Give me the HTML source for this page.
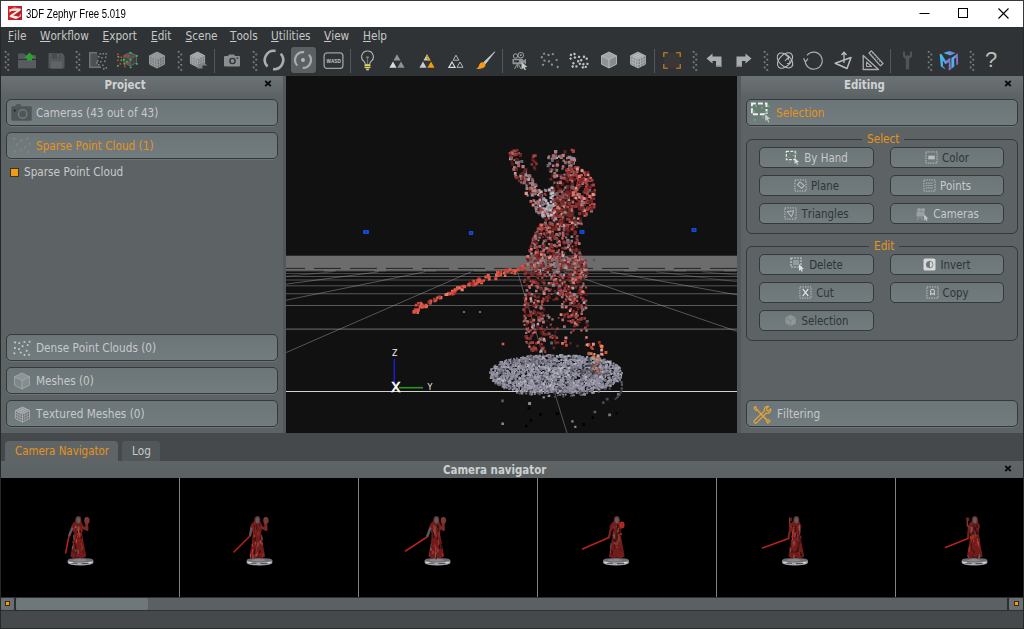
<!DOCTYPE html>
<html><head><meta charset="utf-8"><title>3DF Zephyr Free 5.019</title>
<style>
html,body{margin:0;padding:0;}
body{width:1024px;height:629px;overflow:hidden;position:relative;background:#45494b;
 font-family:"DejaVu Sans Condensed","DejaVu Sans","Liberation Sans",sans-serif;font-size:11.7px;color:#c6cacb;font-kerning:none;}
.abs{position:absolute;}
#title{left:0;top:0;width:1024px;height:27px;background:#fff;}
#title .t{left:26px;top:7px;font-family:"Liberation Sans",sans-serif;font-size:12px;color:#000;white-space:nowrap;transform-origin:0 0;transform:scaleX(0.80);line-height:14px;}
#menubar{left:0;top:27px;width:1024px;height:20px;background:#2f3335;}
#menubar span{position:absolute;top:2px;line-height:14px;color:#c6c8c9;white-space:nowrap;}
#menubar u{text-decoration:underline;text-underline-offset:1px;}
#toolbar{left:0;top:47px;width:1024px;height:29px;background:#2f3335;}
#wborder-l{left:0;top:27px;width:1px;height:602px;background:#26292a;}
.panel{background:#5d6365;}
.phead{left:0;top:0;height:19px;background:linear-gradient(#6b7275,#5f6567);}
.phead b{position:absolute;top:2px;line-height:14px;font-size:11.4px;font-weight:bold;color:#cfd2d3;white-space:nowrap;}
.px{position:absolute;font-family:"DejaVu Sans",sans-serif;font-weight:bold;font-size:10px;color:#0a0a0a;line-height:10px;}
.bigbtn{position:absolute;box-sizing:border-box;height:27px;border:1px solid #34393b;border-radius:5px;background:linear-gradient(#6c7578,#727b7e);box-shadow:0 1px 0 rgba(140,150,153,.35);}
.bigbtn span{position:absolute;left:29px;top:5px;line-height:16px;white-space:nowrap;}
.or{color:#e6931a;}
.smbtn{position:absolute;box-sizing:border-box;height:21px;width:116px;border:1px solid #34393b;border-radius:5px;background:linear-gradient(#6c7578,#727b7e);}
.smbtn span{position:absolute;top:2px;line-height:16px;white-space:nowrap;font-size:11.4px;}
.smbtn.dis span{color:#2f3436;}
.grp{position:absolute;box-sizing:border-box;border:1px solid #34393b;border-radius:6px;}
.grp i{position:absolute;top:-9px;font-style:normal;color:#e6931a;background:#5d6365;padding:0 5px;line-height:16px;}
</style></head><body>
<div id="title" class="abs"><svg class="abs" style="left:7.800px;top:5.900px" width="14" height="14" viewBox="0 0 14 14"><defs><linearGradient id="zi" x1="0" y1="0" x2="1" y2="0.3"><stop offset="0" stop-color="#d8201c"/><stop offset="1" stop-color="#ad2329"/></linearGradient></defs><rect width="14" height="14" fill="url(#zi)"/><path d="M1.3 3.700L6.2 1.200L12.9 2.800L7.6 5.200z" fill="#f3c9c9" opacity="0.750"/><path d="M1.4 3.300L12.8 2.700L12.8 4.300L5.2 9.600L11.2 10.700L12.5 7.400L12.7 10.600L8 13L1.8 11L1.7 9.500L9.4 4.600L3.2 5L1.5 6.600z" fill="#f6eaea"/></svg><div class="abs t">3DF Zephyr Free 5.019</div><svg class="abs" style="left:900px;top:0" width="124" height="27" viewBox="0 0 124 27"><path d="M19.5 13.5h10" stroke="#000" stroke-width="1" fill="none"/><rect x="58.5" y="8.5" width="9" height="9" stroke="#000" stroke-width="1" fill="none"/><path d="M98.5 8.5l10 10M108.5 8.5l-10 10" stroke="#000" stroke-width="1.1" fill="none"/></svg></div>
<div id="menubar" class="abs"><span style="left:8px"><u>F</u>ile</span><span style="left:40px"><u>W</u>orkflow</span><span style="left:102.5px"><u>E</u>xport</span><span style="left:151px"><u>E</u>dit</span><span style="left:185.5px"><u>S</u>cene</span><span style="left:230px"><u>T</u>ools</span><span style="left:271px"><u>U</u>tilities</span><span style="left:324px"><u>V</u>iew</span><span style="left:363px"><u>H</u>elp</span></div>
<div id="toolbar" class="abs"><svg class="abs" style="left:4px;top:3px" width="6" height="24" viewBox="0 0 6 24"><rect x="0.8" y="1.0" width="1.7" height="1.7" fill="#85898a"/><rect x="1.8" y="2.0" width="1.1" height="1.1" fill="#4a4e50"/><rect x="3.4" y="3.6" width="1.7" height="1.7" fill="#85898a"/><rect x="4.4" y="4.6" width="1.1" height="1.1" fill="#4a4e50"/><rect x="0.8" y="6.2" width="1.7" height="1.7" fill="#85898a"/><rect x="1.8" y="7.2" width="1.1" height="1.1" fill="#4a4e50"/><rect x="3.4" y="8.8" width="1.7" height="1.7" fill="#85898a"/><rect x="4.4" y="9.8" width="1.1" height="1.1" fill="#4a4e50"/><rect x="0.8" y="11.4" width="1.7" height="1.7" fill="#85898a"/><rect x="1.8" y="12.4" width="1.1" height="1.1" fill="#4a4e50"/><rect x="3.4" y="14.0" width="1.7" height="1.7" fill="#85898a"/><rect x="4.4" y="15.0" width="1.1" height="1.1" fill="#4a4e50"/><rect x="0.8" y="16.6" width="1.7" height="1.7" fill="#85898a"/><rect x="1.8" y="17.6" width="1.1" height="1.1" fill="#4a4e50"/><rect x="3.4" y="19.2" width="1.7" height="1.7" fill="#85898a"/><rect x="4.4" y="20.2" width="1.1" height="1.1" fill="#4a4e50"/></svg><svg class="abs" style="left:17px;top:4px" width="20" height="19" viewBox="0 0 20 19"><path d="M1 3.500a1 1 0 0 1 1-1h5l1.5 1.500H18a1 1 0 0 1 1 1V8H1z" fill="#54585a"/><path d="M1 9h18v7.500a1 1 0 0 1-1 1H2a1 1 0 0 1-1-1z" fill="#585c5e"/><path d="M12.5 1.500L18 7h-3v2.500h-5V7H7z" fill="#2f9e35"/><path d="M1 17.500h18" stroke="#3d4042" stroke-width="1"/></svg><svg class="abs" style="left:47px;top:5px" width="19" height="18" viewBox="0 0 19 18"><path d="M1.5 2a1 1 0 0 1 1-1h12.500l2.5 2.500v12a1 1 0 0 1-1 1h-14a1 1 0 0 1-1-1z" fill="#54585a"/><rect x="5" y="1" width="8" height="5.5" fill="#474b4d"/><rect x="10" y="2" width="1.8" height="3.5" fill="#5f6365"/><rect x="4" y="9.5" width="11" height="7" fill="#606466"/></svg><svg class="abs" style="left:75px;top:3px" width="6" height="24" viewBox="0 0 6 24"><rect x="0.8" y="1.0" width="1.7" height="1.7" fill="#85898a"/><rect x="1.8" y="2.0" width="1.1" height="1.1" fill="#4a4e50"/><rect x="3.4" y="3.6" width="1.7" height="1.7" fill="#85898a"/><rect x="4.4" y="4.6" width="1.1" height="1.1" fill="#4a4e50"/><rect x="0.8" y="6.2" width="1.7" height="1.7" fill="#85898a"/><rect x="1.8" y="7.2" width="1.1" height="1.1" fill="#4a4e50"/><rect x="3.4" y="8.8" width="1.7" height="1.7" fill="#85898a"/><rect x="4.4" y="9.8" width="1.1" height="1.1" fill="#4a4e50"/><rect x="0.8" y="11.4" width="1.7" height="1.7" fill="#85898a"/><rect x="1.8" y="12.4" width="1.1" height="1.1" fill="#4a4e50"/><rect x="3.4" y="14.0" width="1.7" height="1.7" fill="#85898a"/><rect x="4.4" y="15.0" width="1.1" height="1.1" fill="#4a4e50"/><rect x="0.8" y="16.6" width="1.7" height="1.7" fill="#85898a"/><rect x="1.8" y="17.6" width="1.1" height="1.1" fill="#4a4e50"/><rect x="3.4" y="19.2" width="1.7" height="1.7" fill="#85898a"/><rect x="4.4" y="20.2" width="1.1" height="1.1" fill="#4a4e50"/></svg><svg class="abs" style="left:88px;top:4px" width="20" height="20" viewBox="0 0 20 20"><path d="M1 1h8v1.800H2.800v12.400H13v1.800H1z" fill="#6f7375"/><rect x="2.8" y="2.8" width="7" height="12.4" fill="#4c5052"/><rect x="11.5" y="2" width="1.6" height="1.6" fill="#7d8183"/><rect x="14.5" y="2" width="1.6" height="1.6" fill="#7d8183"/><rect x="17.5" y="2" width="1.6" height="1.6" fill="#7d8183"/><rect x="10" y="5" width="1.6" height="1.6" fill="#7d8183"/><rect x="13" y="6" width="1.6" height="1.6" fill="#7d8183"/><rect x="17" y="5.5" width="1.6" height="1.6" fill="#7d8183"/><rect x="9" y="9" width="1.6" height="1.6" fill="#7d8183"/><rect x="12" y="10" width="1.6" height="1.6" fill="#7d8183"/><rect x="16" y="9.5" width="1.6" height="1.6" fill="#7d8183"/><rect x="10" y="13" width="1.6" height="1.6" fill="#7d8183"/><rect x="14" y="13.5" width="1.6" height="1.6" fill="#7d8183"/><rect x="17.5" y="16" width="1.6" height="1.6" fill="#7d8183"/><rect x="15" y="17" width="1.6" height="1.6" fill="#7d8183"/><rect x="8" y="11" width="1.6" height="1.6" fill="#7d8183"/></svg><svg class="abs" style="left:116px;top:4px" width="23" height="19" viewBox="0 0 23 19"><g transform="translate(6.5,0.5) scale(0.850)"><path d="M9 1L16.5 4.800L9 8.600L1.5 4.800Z" fill="#4e5254"/><path d="M1.5 4.800L9 8.600V17L1.5 13.200Z" fill="#45494b"/><path d="M16.5 4.800L9 8.600V17L16.5 13.200Z" fill="#3e4244"/><path d="M9 1L16.5 4.800V13.200L9 17L1.5 13.200V4.800ZM1.5 4.800L9 8.600L16.5 4.800M9 8.600V17" fill="none" stroke="#6e7274" stroke-width="0.9"/></g><rect x="1" y="2.5" width="1.7" height="1.7" fill="#e23b30"/><rect x="1.5" y="5" width="1.7" height="1.7" fill="#34c24a"/><rect x="4.5" y="5.5" width="1.7" height="1.7" fill="#e23b30"/><rect x="1" y="8.5" width="1.7" height="1.7" fill="#e23b30"/><rect x="4.5" y="8.5" width="1.7" height="1.7" fill="#34c24a"/><rect x="3.5" y="12" width="1.7" height="1.7" fill="#e23b30"/><rect x="1" y="14" width="1.7" height="1.7" fill="#34c24a"/><rect x="8" y="14.5" width="1.7" height="1.7" fill="#e23b30"/><rect x="8" y="4" width="1.7" height="1.7" fill="#e23b30"/><rect x="11.5" y="4" width="1.7" height="1.7" fill="#e23b30"/><rect x="10" y="10" width="1.7" height="1.7" fill="#34c24a"/><rect x="11" y="11" width="1.7" height="1.7" fill="#e23b30"/><rect x="7" y="8" width="1.7" height="1.7" fill="#34c24a"/><rect x="13.8" y="1" width="1.7" height="1.7" fill="#34c24a"/><rect x="20" y="4" width="1.7" height="1.7" fill="#34c24a"/><rect x="13.8" y="8" width="1.7" height="1.7" fill="#34c24a"/><rect x="20" y="12" width="1.7" height="1.7" fill="#34c24a"/><rect x="13.8" y="15.5" width="1.7" height="1.7" fill="#34c24a"/><rect x="7.5" y="12" width="1.7" height="1.7" fill="#34c24a"/></svg><svg class="abs" style="left:147.5px;top:3.5px" width="18" height="18" viewBox="0 0 18 18"><path d="M9 1L16.5 4.800L9 8.600L1.5 4.800Z" fill="#8b8f90"/><path d="M1.5 4.800L9 8.600V17L1.5 13.200Z" fill="#7b7f80"/><path d="M16.5 4.800L9 8.600V17L16.5 13.200Z" fill="#6c7071"/><path d="M9 1L16.5 4.800V13.200L9 17L1.5 13.200V4.800ZM1.5 4.800L9 8.600L16.5 4.800M9 8.600V17" fill="none" stroke="#a5a9aa" stroke-width="0.8"/><path d="M4 6.100v8.400M6.5 7.300v8.400M11.5 7.300v8.400M14 6.100v8.400M1.5 7.600L9 11.400L16.5 7.600M1.5 10.400L9 14.200L16.5 10.400M4 3.500L11.5 7.300M6.5 2.300L14 6.100M14 3.500L6.5 7.300M11.5 2.300L4 6.1" fill="none" stroke="#a5a9aa" stroke-width="0.55"/></svg><svg class="abs" style="left:176.5px;top:3px" width="6" height="24" viewBox="0 0 6 24"><rect x="0.8" y="1.0" width="1.7" height="1.7" fill="#85898a"/><rect x="1.8" y="2.0" width="1.1" height="1.1" fill="#4a4e50"/><rect x="3.4" y="3.6" width="1.7" height="1.7" fill="#85898a"/><rect x="4.4" y="4.6" width="1.1" height="1.1" fill="#4a4e50"/><rect x="0.8" y="6.2" width="1.7" height="1.7" fill="#85898a"/><rect x="1.8" y="7.2" width="1.1" height="1.1" fill="#4a4e50"/><rect x="3.4" y="8.8" width="1.7" height="1.7" fill="#85898a"/><rect x="4.4" y="9.8" width="1.1" height="1.1" fill="#4a4e50"/><rect x="0.8" y="11.4" width="1.7" height="1.7" fill="#85898a"/><rect x="1.8" y="12.4" width="1.1" height="1.1" fill="#4a4e50"/><rect x="3.4" y="14.0" width="1.7" height="1.7" fill="#85898a"/><rect x="4.4" y="15.0" width="1.1" height="1.1" fill="#4a4e50"/><rect x="0.8" y="16.6" width="1.7" height="1.7" fill="#85898a"/><rect x="1.8" y="17.6" width="1.1" height="1.1" fill="#4a4e50"/><rect x="3.4" y="19.2" width="1.7" height="1.7" fill="#85898a"/><rect x="4.4" y="20.2" width="1.1" height="1.1" fill="#4a4e50"/></svg><svg class="abs" style="left:189px;top:3.5px" width="17" height="17" viewBox="0 0 18 18"><path d="M9 1L16.5 4.800L9 8.600L1.5 4.800Z" fill="#9a9e9f"/><path d="M1.5 4.800L9 8.600V17L1.5 13.200Z" fill="#84888a"/><path d="M16.5 4.800L9 8.600V17L16.5 13.200Z" fill="#75797b"/><path d="M9 1L16.5 4.800V13.200L9 17L1.5 13.200V4.800ZM1.5 4.800L9 8.600L16.5 4.800M9 8.600V17" fill="none" stroke="#b4b8b9" stroke-width="0.8"/><path d="M4 6.100v8.400M6.5 7.300v8.400M11.5 7.300v8.400M14 6.100v8.400M1.5 7.600L9 11.400L16.5 7.600M1.5 10.400L9 14.200L16.5 10.400M4 3.500L11.5 7.300M6.5 2.300L14 6.100M14 3.500L6.5 7.300M11.5 2.300L4 6.1" fill="none" stroke="#b4b8b9" stroke-width="0.55"/></svg><svg class="abs" style="left:197px;top:14px" width="11" height="8" viewBox="0 0 11 8"><path d="M0.5 3h5V0.500L10.5 4.500H5.500V7.500H0.500z" fill="#7e8284"/></svg><div class="abs" style="left:214px;top:2px;width:1px;height:24px;background:#53585a"></div><svg class="abs" style="left:223px;top:7px" width="18" height="13" viewBox="0 0 18 13"><path d="M1 3a1 1 0 0 1 1-1h3l1-1.500h5L12 2h4a1 1 0 0 1 1 1v8.500a1 1 0 0 1-1 1H2a1 1 0 0 1-1-1z" fill="#8b8f90"/><circle cx="9.5" cy="7" r="3.3" fill="#2f3335"/><circle cx="9.5" cy="7" r="1.9" fill="#8b8f90"/><rect x="13.5" y="3.5" width="2" height="1.2" fill="#2f3335"/></svg><svg class="abs" style="left:252px;top:3px" width="6" height="24" viewBox="0 0 6 24"><rect x="0.8" y="1.0" width="1.7" height="1.7" fill="#85898a"/><rect x="1.8" y="2.0" width="1.1" height="1.1" fill="#4a4e50"/><rect x="3.4" y="3.6" width="1.7" height="1.7" fill="#85898a"/><rect x="4.4" y="4.6" width="1.1" height="1.1" fill="#4a4e50"/><rect x="0.8" y="6.2" width="1.7" height="1.7" fill="#85898a"/><rect x="1.8" y="7.2" width="1.1" height="1.1" fill="#4a4e50"/><rect x="3.4" y="8.8" width="1.7" height="1.7" fill="#85898a"/><rect x="4.4" y="9.8" width="1.1" height="1.1" fill="#4a4e50"/><rect x="0.8" y="11.4" width="1.7" height="1.7" fill="#85898a"/><rect x="1.8" y="12.4" width="1.1" height="1.1" fill="#4a4e50"/><rect x="3.4" y="14.0" width="1.7" height="1.7" fill="#85898a"/><rect x="4.4" y="15.0" width="1.1" height="1.1" fill="#4a4e50"/><rect x="0.8" y="16.6" width="1.7" height="1.7" fill="#85898a"/><rect x="1.8" y="17.6" width="1.1" height="1.1" fill="#4a4e50"/><rect x="3.4" y="19.2" width="1.7" height="1.7" fill="#85898a"/><rect x="4.4" y="20.2" width="1.1" height="1.1" fill="#4a4e50"/></svg><svg class="abs" style="left:263.26px;top:2.06px" width="22" height="22" viewBox="0 0 22 22"><path d="M12.60 1.94A9.2 9.2 0 0 0 4.49 17.51" fill="none" stroke="#a9adae" stroke-width="2.6"/><path d="M17.73 4.73A9.2 9.2 0 0 1 10.04 20.15" fill="none" stroke="#a9adae" stroke-width="2.6"/></svg><div class="abs" style="left:290.7px;top:0.4px;width:25.7px;height:25.8px;border-radius:3px;background:#5b6063"></div><svg class="abs" style="left:293.25px;top:3.06px" width="20" height="20" viewBox="0 0 20 20"><path d="M11.10 2.18A7.9 7.9 0 0 0 4.22 15.39" fill="none" stroke="#a9adae" stroke-width="2.2"/><path d="M15.96 4.82A7.9 7.9 0 0 1 9.72 17.90" fill="none" stroke="#a9adae" stroke-width="2.2"/><circle cx="10" cy="10" r="1.9" fill="#b5b9ba"/></svg><svg class="abs" style="left:322.5px;top:5px" width="21" height="17" viewBox="0 0 21 17"><rect x="1.1" y="0.9" width="18.8" height="15.6" rx="3" fill="none" stroke="#9da1a2" stroke-width="1.3"/><text x="3.6" y="10.6" font-family="Liberation Sans,sans-serif" font-size="5.6" font-weight="bold" fill="#c4c8c9" textLength="14.2" lengthAdjust="spacingAndGlyphs">WASD</text></svg><div class="abs" style="left:349.5px;top:2px;width:1px;height:24px;background:#53585a"></div><svg class="abs" style="left:360px;top:2.5px" width="15" height="21" viewBox="0 0 15 21"><path d="M7.5 1a5.8 5.8 0 0 0-3.3 10.600c.8.7 1 1.6 1 2.900h4.600c0-1.3.2-2.2 1-2.900A5.8 5.8 0 0 0 7.5 1z" fill="none" stroke="#b4b8b9" stroke-width="1.1"/><path d="M6.2 7.200h2.6" stroke="#d9d43a" stroke-width="1"/><path d="M7.5 7.500v6.5" stroke="#6d7173" stroke-width="1.2"/><rect x="4.5" y="15" width="6" height="1.2" fill="#e3dc3c"/><rect x="4.5" y="16.8" width="6" height="1.2" fill="#e3dc3c"/><path d="M5.5 18.600h4l-1 1.800h-2z" fill="#b4b8b9"/></svg><svg class="abs" style="left:389px;top:7px" width="16" height="14" viewBox="0 0 16 14"><path d="M8 0.300L11.5 6.500H4.500z" fill="#8f9394"/><path d="M4 7.500L7.6 13.700H0.400z" fill="#dadddd"/><path d="M12 7.500L15.6 13.700H8.400z" fill="#8f9394"/></svg><svg class="abs" style="left:418.5px;top:7px" width="16" height="14" viewBox="0 0 16 14"><path d="M8 0.300L11.5 6.500H4.500z" fill="#c9cccd"/><path d="M8 0.300L11.5 6.500H8z" fill="#f39c12"/><path d="M4 7.500L7.6 13.700H0.400z" fill="#c9cccd"/><path d="M12 7.500L15.6 13.700H8.400z" fill="#f39c12"/><path d="M8 0v14" stroke="#5b5f61" stroke-width="0.6" stroke-dasharray="1 1"/></svg><svg class="abs" style="left:448px;top:7px" width="16" height="14" viewBox="0 0 16 14"><path d="M8 1.200L10.8 6.200H5.200z" fill="none" stroke="#b4b8b9" stroke-width="1"/><path d="M4 8L7 13.300H1z" fill="none" stroke="#dadddd" stroke-width="1.2"/><path d="M12 8L15 13.300H9z" fill="none" stroke="#b4b8b9" stroke-width="1"/></svg><svg class="abs" style="left:475px;top:4px" width="21" height="19" viewBox="0 0 21 19"><path d="M19.8 0.800L8.8 11.300L10.3 12.900z" fill="#c9cdce" stroke="#c9cdce" stroke-width="0.8" stroke-linejoin="round"/><path d="M7.8 11.200c1.6.2 2.7 1.3 2.7 2.8 0 2.5-3.5 4.2-9.7 4 2.5-1.1 2.7-2.4 3.3-4 .6-1.7 2-3 3.7-2.800z" fill="#f39c12"/></svg><div class="abs" style="left:502px;top:2px;width:1px;height:24px;background:#53585a"></div><svg class="abs" style="left:510.5px;top:4.5px" width="19" height="18" viewBox="0 0 19 18"><circle cx="4.5" cy="4" r="2.2" fill="none" stroke="#9fa3a4" stroke-width="1"/><circle cx="9.8" cy="3.2" r="2.8" fill="none" stroke="#9fa3a4" stroke-width="1"/><circle cx="9.8" cy="3.2" r="0.9" fill="#9fa3a4"/><rect x="1.5" y="6.8" width="10.5" height="5.5" rx="0.8" fill="#8f9394"/><rect x="3" y="8.3" width="5" height="2" fill="#2f3335"/><path d="M12 8.500l3-1.700v5.500l-3-1.700z" fill="#8f9394"/><path d="M6 12.300L3.5 17M7.5 12.300L10 17M6.7 12.300V16" stroke="#9fa3a4" stroke-width="0.9"/><path d="M10.5 9.800v7.800l1.9-1.7 1.4 2.6 1.3-.6-1.4-2.6 2.7-.2z" fill="#c5c9ca"/></svg><svg class="abs" style="left:540px;top:5px" width="19.5" height="17" viewBox="0 0 19.5 17"><rect x="8.0" y="8.3" width="2.0" height="2.0" fill="#8f9394" transform="rotate(57 9.0 9.3)"/><rect x="15.7" y="7.0" width="2.0" height="2.0" fill="#8f9394" transform="rotate(31 16.7 8.0)"/><rect x="3.5" y="7.7" width="2.0" height="2.0" fill="#8f9394" transform="rotate(7 4.5 8.7)"/><rect x="10.9" y="11.6" width="2.0" height="2.0" fill="#8f9394" transform="rotate(5 11.9 12.6)"/><rect x="2.0" y="11.8" width="2.0" height="2.0" fill="#8f9394" transform="rotate(22 3.0 12.8)"/><rect x="11.9" y="1.1" width="2.0" height="2.0" fill="#8f9394" transform="rotate(36 12.9 2.1)"/><rect x="16.7" y="14.0" width="2.0" height="2.0" fill="#8f9394" transform="rotate(47 17.7 15.0)"/><rect x="3.1" y="0.7" width="2.0" height="2.0" fill="#8f9394" transform="rotate(67 4.1 1.7)"/><rect x="7.5" y="2.0" width="2.0" height="2.0" fill="#8f9394" transform="rotate(73 8.5 3.0)"/><rect x="0.8" y="4.3" width="2.0" height="2.0" fill="#8f9394" transform="rotate(16 1.8 5.3)"/></svg><svg class="abs" style="left:568.5px;top:5px" width="20" height="17" viewBox="0 0 20 17"><rect x="3.3" y="10.1" width="2.1" height="2.1" fill="#c3c7c8" transform="rotate(53 4.3 11.2)"/><rect x="11.2" y="7.2" width="2.1" height="2.1" fill="#c3c7c8" transform="rotate(31 12.3 8.2)"/><rect x="9.0" y="3.8" width="2.1" height="2.1" fill="#c3c7c8" transform="rotate(21 10.1 4.8)"/><rect x="0.5" y="5.6" width="2.1" height="2.1" fill="#c3c7c8" transform="rotate(50 1.6 6.7)"/><rect x="13.9" y="3.7" width="2.1" height="2.1" fill="#c3c7c8" transform="rotate(8 15.0 4.8)"/><rect x="4.4" y="1.0" width="2.1" height="2.1" fill="#c3c7c8" transform="rotate(43 5.5 2.1)"/><rect x="17.4" y="10.8" width="2.1" height="2.1" fill="#c3c7c8" transform="rotate(18 18.5 11.8)"/><rect x="16.6" y="5.6" width="2.1" height="2.1" fill="#c3c7c8" transform="rotate(19 17.7 6.7)"/><rect x="2.6" y="13.4" width="2.1" height="2.1" fill="#c3c7c8" transform="rotate(61 3.6 14.5)"/><rect x="8.2" y="8.2" width="2.1" height="2.1" fill="#c3c7c8" transform="rotate(6 9.2 9.2)"/><rect x="13.3" y="11.1" width="2.1" height="2.1" fill="#c3c7c8" transform="rotate(32 14.3 12.2)"/><rect x="0.9" y="1.8" width="2.1" height="2.1" fill="#c3c7c8" transform="rotate(17 2.0 2.8)"/><rect x="12.7" y="14.3" width="2.1" height="2.1" fill="#c3c7c8" transform="rotate(67 13.7 15.4)"/><rect x="9.8" y="10.9" width="2.1" height="2.1" fill="#c3c7c8" transform="rotate(61 10.9 12.0)"/><rect x="6.4" y="13.4" width="2.1" height="2.1" fill="#c3c7c8" transform="rotate(3 7.4 14.5)"/><rect x="15.7" y="13.9" width="2.1" height="2.1" fill="#c3c7c8" transform="rotate(27 16.8 14.9)"/><rect x="4.8" y="4.5" width="2.1" height="2.1" fill="#c3c7c8" transform="rotate(46 5.9 5.6)"/></svg><svg class="abs" style="left:599.5px;top:3.5px" width="18" height="18" viewBox="0 0 18 18"><path d="M9 1L16.5 4.800L9 8.600L1.5 4.800Z" fill="#a1a5a6"/><path d="M1.5 4.800L9 8.600V17L1.5 13.200Z" fill="#8f9394"/><path d="M16.5 4.800L9 8.600V17L16.5 13.200Z" fill="#868a8b"/><path d="M9 1L16.5 4.800V13.200L9 17L1.5 13.200V4.800ZM1.5 4.800L9 8.600L16.5 4.800M9 8.600V17" fill="none" stroke="#d0d3d4" stroke-width="0.7"/></svg><svg class="abs" style="left:628.5px;top:3.5px" width="18" height="18" viewBox="0 0 18 18"><path d="M9 1L16.5 4.800L9 8.600L1.5 4.800Z" fill="#a1a5a6"/><path d="M1.5 4.800L9 8.600V17L1.5 13.200Z" fill="#8a8e8f"/><path d="M16.5 4.800L9 8.600V17L16.5 13.200Z" fill="#7d8182"/><path d="M9 1L16.5 4.800V13.200L9 17L1.5 13.200V4.800ZM1.5 4.800L9 8.600L16.5 4.800M9 8.600V17" fill="none" stroke="#c8cbcc" stroke-width="0.6"/><path d="M4 6.100v8.400M6.5 7.300v8.400M11.5 7.300v8.400M14 6.100v8.400M1.5 7.600L9 11.400L16.5 7.600M1.5 10.400L9 14.200L16.5 10.400M4 3.500L11.5 7.300M6.5 2.300L14 6.100M14 3.500L6.5 7.300M11.5 2.300L4 6.1" fill="none" stroke="#c8cbcc" stroke-width="0.55"/></svg><div class="abs" style="left:654px;top:2px;width:1px;height:24px;background:#53585a"></div><svg class="abs" style="left:663px;top:5px" width="18" height="17" viewBox="0 0 18 17"><rect x="0.8" y="0.8" width="16.4" height="15.4" fill="#3a3737"/><path d="M0.8 5V0.800H5M13 0.800h4.200V5M17.2 12v4.200H13M5 16.200H0.800V12" fill="none" stroke="#d48c1a" stroke-width="1.1"/></svg><svg class="abs" style="left:692px;top:3px" width="6" height="24" viewBox="0 0 6 24"><rect x="0.8" y="1.0" width="1.7" height="1.7" fill="#85898a"/><rect x="1.8" y="2.0" width="1.1" height="1.1" fill="#4a4e50"/><rect x="3.4" y="3.6" width="1.7" height="1.7" fill="#85898a"/><rect x="4.4" y="4.6" width="1.1" height="1.1" fill="#4a4e50"/><rect x="0.8" y="6.2" width="1.7" height="1.7" fill="#85898a"/><rect x="1.8" y="7.2" width="1.1" height="1.1" fill="#4a4e50"/><rect x="3.4" y="8.8" width="1.7" height="1.7" fill="#85898a"/><rect x="4.4" y="9.8" width="1.1" height="1.1" fill="#4a4e50"/><rect x="0.8" y="11.4" width="1.7" height="1.7" fill="#85898a"/><rect x="1.8" y="12.4" width="1.1" height="1.1" fill="#4a4e50"/><rect x="3.4" y="14.0" width="1.7" height="1.7" fill="#85898a"/><rect x="4.4" y="15.0" width="1.1" height="1.1" fill="#4a4e50"/><rect x="0.8" y="16.6" width="1.7" height="1.7" fill="#85898a"/><rect x="1.8" y="17.6" width="1.1" height="1.1" fill="#4a4e50"/><rect x="3.4" y="19.2" width="1.7" height="1.7" fill="#85898a"/><rect x="4.4" y="20.2" width="1.1" height="1.1" fill="#4a4e50"/></svg><svg class="abs" style="left:705.5px;top:6px" width="17" height="15" viewBox="0 0 17 15"><path d="M0.5 5.500L6.5 0.500V3.500H15.500V14H10V8H6.500V10.500z" fill="#a9adae"/><path d="M10 12.500h5.500V14H10z" fill="#85898a"/></svg><svg class="abs" style="left:735px;top:6px" width="17" height="15" viewBox="0 0 17 15"><path d="M16.5 5.500L10.5 0.500V3.500H1.500V14H7V8H10.500V10.500z" fill="#a9adae"/><path d="M1.5 12.500H7V14H1.500z" fill="#85898a"/></svg><svg class="abs" style="left:762.5px;top:3px" width="6" height="24" viewBox="0 0 6 24"><rect x="0.8" y="1.0" width="1.7" height="1.7" fill="#85898a"/><rect x="1.8" y="2.0" width="1.1" height="1.1" fill="#4a4e50"/><rect x="3.4" y="3.6" width="1.7" height="1.7" fill="#85898a"/><rect x="4.4" y="4.6" width="1.1" height="1.1" fill="#4a4e50"/><rect x="0.8" y="6.2" width="1.7" height="1.7" fill="#85898a"/><rect x="1.8" y="7.2" width="1.1" height="1.1" fill="#4a4e50"/><rect x="3.4" y="8.8" width="1.7" height="1.7" fill="#85898a"/><rect x="4.4" y="9.8" width="1.1" height="1.1" fill="#4a4e50"/><rect x="0.8" y="11.4" width="1.7" height="1.7" fill="#85898a"/><rect x="1.8" y="12.4" width="1.1" height="1.1" fill="#4a4e50"/><rect x="3.4" y="14.0" width="1.7" height="1.7" fill="#85898a"/><rect x="4.4" y="15.0" width="1.1" height="1.1" fill="#4a4e50"/><rect x="0.8" y="16.6" width="1.7" height="1.7" fill="#85898a"/><rect x="1.8" y="17.6" width="1.1" height="1.1" fill="#4a4e50"/><rect x="3.4" y="19.2" width="1.7" height="1.7" fill="#85898a"/><rect x="4.4" y="20.2" width="1.1" height="1.1" fill="#4a4e50"/></svg><svg class="abs" style="left:774.5px;top:4px" width="20" height="19" viewBox="0 0 20 19"><ellipse cx="10" cy="9.5" rx="9.2" ry="5.6" fill="none" stroke="#b9bdbe" stroke-width="1.1" transform="rotate(42 10 9.5)"/><ellipse cx="10" cy="9.5" rx="9.2" ry="5.6" fill="none" stroke="#b9bdbe" stroke-width="1.1" transform="rotate(-46 10 9.5)"/><path d="M10.5 4.500l3.5 1 -1 3.500M14 5.500L10 10" fill="none" stroke="#b9bdbe" stroke-width="1.1"/><path d="M12 12.500l2.8-.3.2-2.8" fill="none" stroke="#b9bdbe" stroke-width="1.1"/></svg><svg class="abs" style="left:803px;top:3px" width="21" height="21" viewBox="0 0 21 21"><path d="M2.2 10.500A8.5 8.5 0 1 0 4 5.4" fill="none" stroke="#a9adae" stroke-width="1.2"/><path d="M0.5 8.300L2.5 12 5 8.6" fill="none" stroke="#a9adae" stroke-width="1.2"/></svg><svg class="abs" style="left:833.5px;top:4px" width="19" height="19" viewBox="0 0 19 19"><path d="M1.2 12.300L17 6.500L13 17.500z" fill="none" stroke="#b9bdbe" stroke-width="1.5" stroke-linejoin="round"/><path d="M10 12V1.500M7.5 4L10 1.200L12.5 4" fill="none" stroke="#b9bdbe" stroke-width="1.3"/></svg><svg class="abs" style="left:861.5px;top:3px" width="22" height="21" viewBox="0 0 22 21"><path d="M1.2 5.500V19.500H16.500z" fill="none" stroke="#a9adae" stroke-width="1.3" stroke-linejoin="round"/><path d="M4.5 12V16.500H9.500z" fill="none" stroke="#a9adae" stroke-width="1.1" stroke-linejoin="round"/><path d="M7 3L9.5 0.800L21 13.500L18.5 15.800z" fill="none" stroke="#a9adae" stroke-width="1.2" stroke-linejoin="round"/><path d="M9.7 4l1.2-1.100M11.5 6l1.2-1.100M13.3 8l1.2-1.100M15.1 10l1.2-1.100M16.9 12l1.2-1.1" stroke="#a9adae" stroke-width="0.7"/></svg><div class="abs" style="left:889.5px;top:2px;width:1px;height:24px;background:#53585a"></div><svg class="abs" style="left:901.5px;top:4px" width="11" height="19" viewBox="0 0 11 19"><path d="M1 0.500V5.500L3.8 8V17.500a1 1 0 0 0 1 1H6.200a1 1 0 0 0 1-1V8L10 5.500V0.500H8V4.500H3V0.500z" fill="#505456"/></svg><svg class="abs" style="left:927px;top:3px" width="6" height="24" viewBox="0 0 6 24"><rect x="0.8" y="1.0" width="1.7" height="1.7" fill="#85898a"/><rect x="1.8" y="2.0" width="1.1" height="1.1" fill="#4a4e50"/><rect x="3.4" y="3.6" width="1.7" height="1.7" fill="#85898a"/><rect x="4.4" y="4.6" width="1.1" height="1.1" fill="#4a4e50"/><rect x="0.8" y="6.2" width="1.7" height="1.7" fill="#85898a"/><rect x="1.8" y="7.2" width="1.1" height="1.1" fill="#4a4e50"/><rect x="3.4" y="8.8" width="1.7" height="1.7" fill="#85898a"/><rect x="4.4" y="9.8" width="1.1" height="1.1" fill="#4a4e50"/><rect x="0.8" y="11.4" width="1.7" height="1.7" fill="#85898a"/><rect x="1.8" y="12.4" width="1.1" height="1.1" fill="#4a4e50"/><rect x="3.4" y="14.0" width="1.7" height="1.7" fill="#85898a"/><rect x="4.4" y="15.0" width="1.1" height="1.1" fill="#4a4e50"/><rect x="0.8" y="16.6" width="1.7" height="1.7" fill="#85898a"/><rect x="1.8" y="17.6" width="1.1" height="1.1" fill="#4a4e50"/><rect x="3.4" y="19.2" width="1.7" height="1.7" fill="#85898a"/><rect x="4.4" y="20.2" width="1.1" height="1.1" fill="#4a4e50"/></svg><svg class="abs" style="left:938.5px;top:2.5px" width="20" height="21" viewBox="0 0 20 21"><defs><linearGradient id="mg" x1="0" y1="0" x2="1" y2="0"><stop offset="0" stop-color="#3cc4f0"/><stop offset="0.5" stop-color="#5c9be2"/><stop offset="1" stop-color="#a05fc6"/></linearGradient></defs><path d="M4.5 3L10.3 0.9L16.8 3L11.3 5.4z" fill="url(#mg)"/><path d="M0.7 3.7L2.9 4.4L6.9 11L11.3 7.4L12 19.4L9.6 20.4L9.9 12.3L6.3 14.3L3.8 10.6L4.1 16.4L6.3 18.5L5.6 19L1.8 16.3z" fill="url(#mg)"/><path d="M12.4 8.1L18.8 3.3L19.2 14.3L17.5 15.3L17.1 7.4L15.1 9.1L15.4 16.3L12.4 18.9z" fill="url(#mg)"/></svg><svg class="abs" style="left:968.5px;top:3px" width="6" height="24" viewBox="0 0 6 24"><rect x="0.8" y="1.0" width="1.7" height="1.7" fill="#85898a"/><rect x="1.8" y="2.0" width="1.1" height="1.1" fill="#4a4e50"/><rect x="3.4" y="3.6" width="1.7" height="1.7" fill="#85898a"/><rect x="4.4" y="4.6" width="1.1" height="1.1" fill="#4a4e50"/><rect x="0.8" y="6.2" width="1.7" height="1.7" fill="#85898a"/><rect x="1.8" y="7.2" width="1.1" height="1.1" fill="#4a4e50"/><rect x="3.4" y="8.8" width="1.7" height="1.7" fill="#85898a"/><rect x="4.4" y="9.8" width="1.1" height="1.1" fill="#4a4e50"/><rect x="0.8" y="11.4" width="1.7" height="1.7" fill="#85898a"/><rect x="1.8" y="12.4" width="1.1" height="1.1" fill="#4a4e50"/><rect x="3.4" y="14.0" width="1.7" height="1.7" fill="#85898a"/><rect x="4.4" y="15.0" width="1.1" height="1.1" fill="#4a4e50"/><rect x="0.8" y="16.6" width="1.7" height="1.7" fill="#85898a"/><rect x="1.8" y="17.6" width="1.1" height="1.1" fill="#4a4e50"/><rect x="3.4" y="19.2" width="1.7" height="1.7" fill="#85898a"/><rect x="4.4" y="20.2" width="1.1" height="1.1" fill="#4a4e50"/></svg><span class="abs" style="left:985px;top:1px;font-family:'Liberation Sans',sans-serif;font-size:22px;line-height:24px;color:#b9bdbe">?</span></div>
<div class="abs panel" style="left:1px;top:76px;width:282px;height:357px"><div class="abs phead" style="width:282px"><b style="left:103.500px">Project</b><svg class="abs" style="left:263px;top:4px" width="8" height="7" viewBox="0 0 8 7"><path d="M1.2 1L6.8 6M6.8 1L1.2 6" stroke="#0c0c0c" stroke-width="1.7" fill="none"/></svg></div><div class="bigbtn" style="left:5px;top:23px;width:272px"><svg class="abs" style="left:4px;top:3px" width="22" height="20" viewBox="0 0 22 20"><path d="M4.2 3.400L5 1.200h4.600l0.8 2.200z" fill="#505557"/><rect x="0.3" y="3.3" width="20.4" height="14.4" rx="1" fill="#505557"/><circle cx="11.7" cy="11" r="4.9" fill="#727a7d"/><circle cx="11.7" cy="11" r="3.5" fill="#505557"/><rect x="2.8" y="6.6" width="1.8" height="1.8" fill="#1c1e1f"/></svg><span>Cameras (43 out of 43)</span></div><div class="bigbtn" style="left:5px;top:56px;width:272px"><svg class="abs" style="left:5px;top:4px" width="20" height="18" viewBox="0 0 20 18"><circle cx="2.2" cy="1.6" r="1.4" fill="#807f7c"/><circle cx="2.2" cy="1.6" r="0.5" fill="#918f8a"/><circle cx="9.2" cy="3.4" r="1.4" fill="#807f7c"/><circle cx="9.2" cy="3.4" r="0.5" fill="#918f8a"/><circle cx="15.2" cy="1.6" r="1.4" fill="#807f7c"/><circle cx="15.2" cy="1.6" r="0.5" fill="#918f8a"/><circle cx="4.9" cy="7.5" r="1.4" fill="#807f7c"/><circle cx="4.9" cy="7.5" r="0.5" fill="#918f8a"/><circle cx="13" cy="10" r="1.4" fill="#807f7c"/><circle cx="13" cy="10" r="0.5" fill="#918f8a"/><circle cx="17.7" cy="6.7" r="1.4" fill="#807f7c"/><circle cx="17.7" cy="6.7" r="0.5" fill="#918f8a"/><circle cx="2.8" cy="14.6" r="1.4" fill="#807f7c"/><circle cx="2.8" cy="14.6" r="0.5" fill="#918f8a"/><circle cx="8.6" cy="12.9" r="1.4" fill="#807f7c"/><circle cx="8.6" cy="12.9" r="0.5" fill="#918f8a"/><circle cx="16.4" cy="15" r="1.4" fill="#807f7c"/><circle cx="16.4" cy="15" r="0.5" fill="#918f8a"/></svg><span class="or">Sparse Point Cloud (1)</span></div><div class="abs" style="left:9px;top:92px;width:9px;height:9px;box-sizing:border-box;background:#f39c12;border:1px solid #3d3322"></div><span class="abs" style="left:23px;top:88px;line-height:16px;white-space:nowrap">Sparse Point Cloud</span><div class="bigbtn" style="left:5px;top:258px;width:272px"><svg class="abs" style="left:5px;top:4px" width="20" height="18" viewBox="0 0 20 18"><rect x="6.3" y="3.2" width="1.8" height="1.8" fill="#c4c9ca" transform="rotate(23 7.2 4.1)"/><rect x="11.5" y="2.1" width="1.8" height="1.8" fill="#c4c9ca" transform="rotate(5 12.4 3.0)"/><rect x="9.7" y="6.2" width="1.8" height="1.8" fill="#c4c9ca" transform="rotate(14 10.6 7.1)"/><rect x="2.0" y="8.2" width="1.8" height="1.8" fill="#c4c9ca" transform="rotate(6 2.9 9.1)"/><rect x="2.2" y="2.4" width="1.8" height="1.8" fill="#c4c9ca" transform="rotate(14 3.1 3.3)"/><rect x="7.9" y="12.7" width="1.8" height="1.8" fill="#c4c9ca" transform="rotate(30 8.8 13.6)"/><rect x="16.7" y="1.8" width="1.8" height="1.8" fill="#c4c9ca" transform="rotate(12 17.6 2.7)"/><rect x="14.8" y="5.2" width="1.8" height="1.8" fill="#c4c9ca" transform="rotate(21 15.7 6.1)"/><rect x="6.1" y="9.3" width="1.8" height="1.8" fill="#c4c9ca" transform="rotate(13 7.0 10.2)"/><rect x="13.8" y="10.9" width="1.8" height="1.8" fill="#c4c9ca" transform="rotate(30 14.7 11.8)"/><rect x="11.5" y="15.0" width="1.8" height="1.8" fill="#c4c9ca" transform="rotate(39 12.4 15.9)"/><rect x="1.5" y="13.3" width="1.8" height="1.8" fill="#c4c9ca" transform="rotate(57 2.4 14.2)"/><rect x="16.1" y="14.9" width="1.8" height="1.8" fill="#c4c9ca" transform="rotate(39 17.0 15.8)"/></svg><span>Dense Point Clouds (0)</span></div><div class="bigbtn" style="left:5px;top:291px;width:272px"><svg class="abs" style="left:6px;top:4px" width="18" height="18" viewBox="0 0 18 18"><path d="M9 1L16.5 4.800L9 8.600L1.5 4.800Z" fill="#8d9496"/><path d="M1.5 4.800L9 8.600V17L1.5 13.200Z" fill="#7f8688"/><path d="M16.5 4.800L9 8.600V17L16.5 13.200Z" fill="#868d8f"/><path d="M9 1L16.5 4.800V13.200L9 17L1.5 13.200V4.800ZM1.5 4.800L9 8.600L16.5 4.800M9 8.600V17" fill="none" stroke="#adb3b5" stroke-width="0.7"/></svg><span>Meshes (0)</span></div><div class="bigbtn" style="left:5px;top:324px;width:272px"><svg class="abs" style="left:7px;top:5px" width="17" height="17" viewBox="0 0 18 18"><path d="M9 1L16.5 4.800L9 8.600L1.5 4.800Z" fill="#8d9496"/><path d="M1.5 4.800L9 8.600V17L1.5 13.200Z" fill="#6f7679"/><path d="M16.5 4.800L9 8.600V17L16.5 13.200Z" fill="#666d70"/><path d="M9 1L16.5 4.800V13.200L9 17L1.5 13.200V4.800ZM1.5 4.800L9 8.600L16.5 4.800M9 8.600V17" fill="none" stroke="#c0c5c6" stroke-width="0.7"/><path d="M4 6.100v8.400M6.5 7.300v8.400M11.5 7.300v8.400M14 6.100v8.400M1.5 7.600L9 11.400L16.5 7.600M1.5 10.400L9 14.200L16.5 10.400M4 3.500L11.5 7.300M6.5 2.300L14 6.100M14 3.500L6.5 7.300M11.5 2.300L4 6.1" fill="none" stroke="#c0c5c6" stroke-width="0.5"/></svg><span>Textured Meshes (0)</span></div></div>
<div class="abs" style="left:283px;top:76px;width:3px;height:357px;background:#52585b"></div>
<div class="abs" style="left:286px;top:76px;width:451px;height:357px;background:#111"><svg class="abs" style="left:0;top:0" width="451" height="357" viewBox="0 0 451 357"><rect width="451" height="357" fill="#111111"/><rect x="0" y="179.7" width="451" height="15.8" fill="#6c6c6c"/><path d="M0 192.4H451" stroke="#242424" stroke-width="1" stroke-dasharray="27 9" stroke-dashoffset="8"/><path d="M0 195.3H451" stroke="#2b2b2b" stroke-width="1.2" stroke-dasharray="38 12"/><path d="M0 197.6H451" stroke="#4c4c4c" stroke-width="1"/><path d="M0 200.5H451" stroke="#505050" stroke-width="1"/><path d="M0 204.0H451" stroke="#535353" stroke-width="1"/><path d="M0 209.8H451" stroke="#565656" stroke-width="1"/><path d="M0 217.7H451" stroke="#585858" stroke-width="1.1"/><path d="M0 229.5H451" stroke="#5a5a5a" stroke-width="1.1"/><path d="M0 253.2H451" stroke="#5e5e5e" stroke-width="1.2"/><path d="M0 315.5H451" stroke="#d2d2d2" stroke-width="1.15"/><path d="M-416.5 195.8L-6234.6 357.0" stroke="#a0a0a0" stroke-width="0.8" opacity="0.4"/><path d="M-370.2 195.8L-5769.2 357.0" stroke="#a0a0a0" stroke-width="0.8" opacity="0.4"/><path d="M-323.9 195.8L-5303.8 357.0" stroke="#a0a0a0" stroke-width="0.8" opacity="0.4"/><path d="M-277.6 195.8L-4838.4 357.0" stroke="#a0a0a0" stroke-width="0.8" opacity="0.4"/><path d="M-231.3 195.8L-4373.0 357.0" stroke="#a0a0a0" stroke-width="0.8" opacity="0.4"/><path d="M-185.1 195.8L-3907.6 357.0" stroke="#a0a0a0" stroke-width="0.8" opacity="0.4"/><path d="M-138.8 195.8L-3442.2 357.0" stroke="#a0a0a0" stroke-width="0.8" opacity="0.4"/><path d="M-92.5 195.8L-2976.8 357.0" stroke="#a0a0a0" stroke-width="0.8" opacity="0.4"/><path d="M-46.2 195.8L-2511.4 357.0" stroke="#a0a0a0" stroke-width="0.8" opacity="0.4"/><path d="M0.1 195.8L-2046.0 357.0" stroke="#a0a0a0" stroke-width="0.8" opacity="0.4"/><path d="M46.3 195.8L-1580.6 357.0" stroke="#a0a0a0" stroke-width="0.8" opacity="0.4"/><path d="M92.6 195.8L-1115.2 357.0" stroke="#a0a0a0" stroke-width="0.8" opacity="0.6"/><path d="M138.9 195.8L-649.8 357.0" stroke="#a0a0a0" stroke-width="0.8" opacity="0.6"/><path d="M185.2 195.8L-184.4 357.0" stroke="#a0a0a0" stroke-width="0.8" opacity="0.6"/><path d="M231.5 195.8L281.0 357.0" stroke="#a0a0a0" stroke-width="0.8" opacity="0.6"/><path d="M277.7 195.8L746.4 357.0" stroke="#a0a0a0" stroke-width="0.8" opacity="0.6"/><path d="M324.0 195.8L1211.8 357.0" stroke="#a0a0a0" stroke-width="0.8" opacity="0.6"/><path d="M370.3 195.8L1677.2 357.0" stroke="#a0a0a0" stroke-width="0.8" opacity="0.4"/><path d="M416.6 195.8L2142.6 357.0" stroke="#a0a0a0" stroke-width="0.8" opacity="0.4"/><path d="M462.9 195.8L2608.0 357.0" stroke="#a0a0a0" stroke-width="0.8" opacity="0.4"/><path d="M509.1 195.8L3073.4 357.0" stroke="#a0a0a0" stroke-width="0.8" opacity="0.4"/><path d="M555.4 195.8L3538.8 357.0" stroke="#a0a0a0" stroke-width="0.8" opacity="0.4"/><path d="M601.7 195.8L4004.2 357.0" stroke="#a0a0a0" stroke-width="0.8" opacity="0.4"/><path d="M648.0 195.8L4469.6 357.0" stroke="#a0a0a0" stroke-width="0.8" opacity="0.4"/><path d="M694.3 195.8L4935.0 357.0" stroke="#a0a0a0" stroke-width="0.8" opacity="0.4"/><path d="M740.5 195.8L5400.4 357.0" stroke="#a0a0a0" stroke-width="0.8" opacity="0.4"/><path d="M786.8 195.8L5865.8 357.0" stroke="#a0a0a0" stroke-width="0.8" opacity="0.4"/><path d="M833.1 195.8L6331.2 357.0" stroke="#a0a0a0" stroke-width="0.8" opacity="0.4"/><path d="M879.4 195.8L6796.6 357.0" stroke="#a0a0a0" stroke-width="0.8" opacity="0.4"/><rect x="77.0" y="153.9" width="6" height="4.2" rx="0.8" fill="#1a4ad8"/><rect x="79.0" y="155.4" width="2" height="1.2" fill="#0c2ea8"/><rect x="182.7" y="155.1" width="4.6" height="3.8" rx="0.8" fill="#1a4ad8"/><rect x="184.0" y="156.4" width="2" height="1.2" fill="#0c2ea8"/><rect x="293.5" y="154.0" width="5" height="4" rx="0.8" fill="#1a4ad8"/><rect x="295.0" y="155.4" width="2" height="1.2" fill="#0c2ea8"/><rect x="405.5" y="152.0" width="5" height="4" rx="0.8" fill="#1a4ad8"/><rect x="407.0" y="153.4" width="2" height="1.2" fill="#0c2ea8"/><defs><filter id="bl" x="-5%" y="-5%" width="110%" height="110%"><feGaussianBlur stdDeviation="0.55"/></filter></defs><g filter="url(#bl)"><path d="M287.6 279.1h1.6v1.6h-1.6zM309.5 304.7h1.7v1.7h-1.7zM287.0 292.0h1.7v1.7h-1.7zM323.9 295.6h1.6v1.6h-1.6zM318.7 288.1h1.9v1.9h-1.9zM242.4 302.3h1.9v1.9h-1.9zM238.1 311.3h1.8v1.8h-1.8zM261.1 297.9h1.5v1.5h-1.5zM247.8 300.6h1.6v1.6h-1.6zM234.6 303.6h1.6v1.6h-1.6zM256.1 290.8h2.2v2.2h-2.2zM315.1 284.4h1.8v1.8h-1.8zM233.9 282.5h2.2v2.2h-2.2zM308.0 310.6h2.2v2.2h-2.2zM263.7 289.5h2.1v2.1h-2.1zM321.5 306.3h1.8v1.8h-1.8zM238.9 290.2h1.9v1.9h-1.9zM256.9 298.7h1.8v1.8h-1.8zM247.5 303.9h1.8v1.8h-1.8zM219.7 303.5h1.9v1.9h-1.9zM252.9 279.0h2.2v2.2h-2.2zM274.0 307.2h1.6v1.6h-1.6zM240.6 282.0h1.6v1.6h-1.6zM213.1 302.2h1.4v1.4h-1.4zM303.9 301.0h2.1v2.1h-2.1zM230.4 286.0h2.0v2.0h-2.0zM208.4 294.6h1.7v1.7h-1.7zM265.0 302.6h2.2v2.2h-2.2zM302.8 301.7h2.1v2.1h-2.1zM227.9 304.5h1.9v1.9h-1.9zM298.4 293.6h2.0v2.0h-2.0zM222.1 295.7h1.6v1.6h-1.6zM242.2 306.6h1.6v1.6h-1.6zM327.8 293.9h2.1v2.1h-2.1zM281.8 278.8h2.1v2.1h-2.1zM222.3 283.1h1.6v1.6h-1.6zM298.2 286.3h1.8v1.8h-1.8zM259.5 303.4h1.7v1.7h-1.7zM282.3 291.4h1.9v1.9h-1.9zM317.9 299.6h1.8v1.8h-1.8zM286.5 279.1h2.1v2.1h-2.1zM310.8 287.2h1.5v1.5h-1.5zM282.5 306.9h2.0v2.0h-2.0zM285.5 310.9h2.0v2.0h-2.0zM248.4 305.2h1.9v1.9h-1.9zM251.0 292.0h1.6v1.6h-1.6zM328.3 296.7h1.6v1.6h-1.6zM207.9 290.8h2.1v2.1h-2.1zM262.5 278.5h1.5v1.5h-1.5zM271.1 315.6h1.9v1.9h-1.9zM308.0 297.6h1.5v1.5h-1.5zM243.0 298.3h1.9v1.9h-1.9zM251.3 293.3h1.9v1.9h-1.9zM279.3 305.5h1.9v1.9h-1.9zM286.0 301.5h2.2v2.2h-2.2zM300.4 280.6h1.5v1.5h-1.5zM261.5 287.8h1.8v1.8h-1.8zM274.1 313.4h2.0v2.0h-2.0zM323.4 284.6h2.2v2.2h-2.2zM265.0 285.6h1.5v1.5h-1.5zM307.3 299.5h2.1v2.1h-2.1zM227.5 283.5h1.7v1.7h-1.7zM284.4 286.6h1.5v1.5h-1.5zM265.2 298.4h2.0v2.0h-2.0zM304.4 311.9h1.4v1.4h-1.4zM276.8 283.3h1.6v1.6h-1.6zM257.8 299.6h1.6v1.6h-1.6zM268.9 302.9h2.0v2.0h-2.0zM297.3 293.4h1.5v1.5h-1.5zM308.6 305.4h1.5v1.5h-1.5zM243.9 291.9h1.6v1.6h-1.6zM278.6 284.6h1.7v1.7h-1.7zM258.9 296.7h1.5v1.5h-1.5zM235.6 301.8h1.9v1.9h-1.9zM310.5 310.5h2.3v2.3h-2.3zM221.8 289.9h1.8v1.8h-1.8zM315.1 302.6h2.0v2.0h-2.0zM260.1 279.1h2.0v2.0h-2.0zM281.2 292.8h2.0v2.0h-2.0zM242.5 301.6h1.5v1.5h-1.5zM210.4 291.9h1.4v1.4h-1.4zM297.0 302.3h1.5v1.5h-1.5zM317.4 282.7h2.2v2.2h-2.2zM250.3 280.5h1.9v1.9h-1.9zM293.9 283.0h2.0v2.0h-2.0zM326.1 288.4h2.0v2.0h-2.0zM221.1 307.4h2.1v2.1h-2.1zM272.0 307.7h2.0v2.0h-2.0zM269.1 299.7h1.7v1.7h-1.7zM216.6 299.8h2.1v2.1h-2.1zM270.1 279.6h2.2v2.2h-2.2zM277.8 294.4h2.3v2.3h-2.3zM229.8 307.7h1.9v1.9h-1.9zM243.9 288.3h1.5v1.5h-1.5zM313.6 290.7h1.5v1.5h-1.5zM256.3 295.1h2.1v2.1h-2.1zM207.1 304.2h1.6v1.6h-1.6zM275.9 280.5h1.7v1.7h-1.7zM216.6 289.7h1.5v1.5h-1.5zM294.5 313.2h2.1v2.1h-2.1zM282.4 312.9h2.3v2.3h-2.3zM320.7 284.2h1.5v1.5h-1.5zM272.1 294.1h1.8v1.8h-1.8zM283.6 279.6h1.6v1.6h-1.6zM294.8 281.6h2.2v2.2h-2.2zM258.2 302.7h1.6v1.6h-1.6zM278.5 285.2h2.1v2.1h-2.1zM227.2 282.0h1.5v1.5h-1.5zM305.8 296.5h2.0v2.0h-2.0zM228.2 303.7h2.0v2.0h-2.0zM248.4 312.4h1.7v1.7h-1.7zM256.2 286.7h2.1v2.1h-2.1zM288.8 279.3h2.2v2.2h-2.2zM253.3 298.9h1.8v1.8h-1.8zM290.5 288.3h1.9v1.9h-1.9zM298.7 282.0h1.6v1.6h-1.6zM293.2 309.7h2.3v2.3h-2.3zM232.5 302.6h1.8v1.8h-1.8zM297.5 282.3h2.1v2.1h-2.1zM272.2 305.0h1.4v1.4h-1.4zM266.6 297.2h2.2v2.2h-2.2zM297.0 313.6h2.0v2.0h-2.0zM310.0 298.2h1.4v1.4h-1.4zM291.4 285.6h2.1v2.1h-2.1zM236.6 290.5h2.0v2.0h-2.0zM250.4 308.0h1.7v1.7h-1.7zM261.7 279.6h2.2v2.2h-2.2zM288.3 313.7h2.1v2.1h-2.1zM307.9 299.2h1.9v1.9h-1.9zM308.1 298.6h2.3v2.3h-2.3zM288.5 297.7h1.5v1.5h-1.5zM245.1 294.6h1.4v1.4h-1.4zM250.4 289.7h1.9v1.9h-1.9zM283.0 309.9h2.2v2.2h-2.2zM225.0 297.6h1.8v1.8h-1.8zM211.6 292.3h1.4v1.4h-1.4zM313.3 288.1h1.9v1.9h-1.9zM283.0 297.3h1.5v1.5h-1.5zM213.4 302.7h1.6v1.6h-1.6zM251.1 305.5h1.5v1.5h-1.5zM208.4 300.0h1.5v1.5h-1.5zM233.6 292.9h1.5v1.5h-1.5zM316.6 297.3h1.8v1.8h-1.8zM303.8 304.7h1.5v1.5h-1.5zM275.7 304.5h2.0v2.0h-2.0zM325.5 294.8h1.5v1.5h-1.5zM330.2 288.5h1.9v1.9h-1.9zM229.3 305.9h2.2v2.2h-2.2zM229.8 287.5h2.0v2.0h-2.0zM264.0 304.5h1.4v1.4h-1.4zM279.7 290.4h2.0v2.0h-2.0zM252.3 310.6h1.7v1.7h-1.7zM250.5 299.2h2.2v2.2h-2.2zM229.3 299.9h2.0v2.0h-2.0zM304.2 281.3h1.6v1.6h-1.6zM289.6 311.8h1.7v1.7h-1.7zM261.7 314.8h2.0v2.0h-2.0zM238.5 305.2h2.1v2.1h-2.1zM305.5 280.8h1.8v1.8h-1.8zM303.0 308.7h1.8v1.8h-1.8zM313.2 282.8h2.2v2.2h-2.2zM289.8 298.0h2.0v2.0h-2.0zM215.9 305.6h1.9v1.9h-1.9zM272.5 287.5h2.0v2.0h-2.0zM298.9 301.2h1.9v1.9h-1.9zM269.5 307.6h1.5v1.5h-1.5zM276.8 296.5h2.0v2.0h-2.0zM284.4 315.7h1.8v1.8h-1.8zM218.0 295.4h1.4v1.4h-1.4zM274.1 285.8h1.9v1.9h-1.9zM273.0 290.8h1.8v1.8h-1.8zM248.8 291.4h2.0v2.0h-2.0zM284.0 302.0h1.6v1.6h-1.6zM323.1 290.6h1.9v1.9h-1.9zM243.9 304.9h1.9v1.9h-1.9zM239.4 307.9h1.5v1.5h-1.5zM267.8 290.4h1.8v1.8h-1.8zM221.0 293.8h1.8v1.8h-1.8zM285.9 282.7h1.5v1.5h-1.5zM274.6 278.1h2.2v2.2h-2.2zM276.9 309.6h1.4v1.4h-1.4zM294.2 300.6h2.1v2.1h-2.1zM259.6 299.1h1.7v1.7h-1.7zM298.8 290.0h1.9v1.9h-1.9zM234.2 295.0h2.3v2.3h-2.3zM322.5 302.5h1.4v1.4h-1.4zM276.0 295.2h1.7v1.7h-1.7zM282.7 299.9h2.2v2.2h-2.2zM217.8 284.7h1.9v1.9h-1.9zM268.4 315.7h2.1v2.1h-2.1zM296.4 282.5h2.2v2.2h-2.2zM243.7 308.3h1.8v1.8h-1.8zM281.5 291.0h1.5v1.5h-1.5zM309.6 307.3h2.0v2.0h-2.0zM293.5 314.9h1.8v1.8h-1.8zM208.6 306.0h2.2v2.2h-2.2zM298.4 300.7h1.7v1.7h-1.7zM251.4 301.7h1.7v1.7h-1.7zM276.7 280.5h2.0v2.0h-2.0zM294.7 303.6h1.5v1.5h-1.5zM248.4 292.2h1.9v1.9h-1.9zM270.6 299.8h2.2v2.2h-2.2zM210.6 290.1h2.2v2.2h-2.2zM232.6 310.8h1.5v1.5h-1.5zM280.7 294.6h2.3v2.3h-2.3zM250.0 292.6h1.6v1.6h-1.6zM276.0 289.0h2.2v2.2h-2.2zM302.2 307.1h2.1v2.1h-2.1zM250.2 291.4h2.0v2.0h-2.0zM285.9 298.0h1.7v1.7h-1.7zM245.3 309.8h1.5v1.5h-1.5zM257.5 309.3h2.0v2.0h-2.0zM282.6 293.7h1.5v1.5h-1.5zM260.9 302.9h1.4v1.4h-1.4zM301.9 287.1h1.8v1.8h-1.8zM327.1 304.2h2.1v2.1h-2.1zM236.7 281.4h2.1v2.1h-2.1zM286.2 290.2h1.5v1.5h-1.5zM285.6 312.3h2.3v2.3h-2.3zM292.5 294.0h1.8v1.8h-1.8zM297.1 304.9h2.1v2.1h-2.1zM282.2 306.7h1.4v1.4h-1.4zM269.4 313.3h2.2v2.2h-2.2zM280.8 314.1h2.2v2.2h-2.2zM300.0 314.4h1.9v1.9h-1.9zM264.2 286.5h2.0v2.0h-2.0zM260.8 312.6h1.8v1.8h-1.8zM269.5 282.3h2.0v2.0h-2.0zM273.8 278.5h1.5v1.5h-1.5zM260.5 301.7h2.1v2.1h-2.1zM265.3 310.7h1.9v1.9h-1.9zM241.2 285.4h1.7v1.7h-1.7zM258.1 315.9h1.7v1.7h-1.7zM286.0 311.0h2.2v2.2h-2.2zM216.3 302.7h1.7v1.7h-1.7zM267.5 314.9h2.1v2.1h-2.1zM277.1 282.8h1.9v1.9h-1.9zM237.2 282.6h1.5v1.5h-1.5zM252.8 309.7h1.5v1.5h-1.5zM256.9 296.5h1.8v1.8h-1.8zM256.7 281.2h2.0v2.0h-2.0zM242.9 293.3h1.5v1.5h-1.5zM237.6 306.7h1.8v1.8h-1.8zM310.4 309.6h1.7v1.7h-1.7zM284.0 289.5h2.0v2.0h-2.0zM332.4 294.4h1.5v1.5h-1.5zM247.4 287.8h1.5v1.5h-1.5zM244.0 311.6h2.1v2.1h-2.1zM313.4 310.7h1.8v1.8h-1.8zM328.7 290.6h2.1v2.1h-2.1zM280.3 279.6h1.6v1.6h-1.6zM309.3 290.2h1.7v1.7h-1.7zM283.1 310.8h2.3v2.3h-2.3zM221.4 309.1h2.2v2.2h-2.2zM247.5 285.3h2.0v2.0h-2.0zM319.4 308.2h2.1v2.1h-2.1zM252.7 289.5h1.5v1.5h-1.5zM228.6 302.3h1.5v1.5h-1.5zM298.5 287.5h1.6v1.6h-1.6zM281.5 283.8h2.1v2.1h-2.1zM277.8 285.5h1.8v1.8h-1.8zM237.5 295.3h2.0v2.0h-2.0zM280.4 312.3h1.9v1.9h-1.9zM287.1 307.7h1.7v1.7h-1.7zM225.5 292.2h2.0v2.0h-2.0zM295.1 305.5h2.2v2.2h-2.2zM300.1 289.4h1.6v1.6h-1.6zM218.5 303.4h1.6v1.6h-1.6zM269.0 295.3h1.9v1.9h-1.9zM295.4 279.9h2.2v2.2h-2.2zM315.3 305.1h1.8v1.8h-1.8zM221.3 304.6h1.7v1.7h-1.7zM308.9 282.9h1.5v1.5h-1.5zM333.2 291.4h1.9v1.9h-1.9zM216.3 309.3h1.6v1.6h-1.6zM246.9 288.3h2.2v2.2h-2.2zM275.7 301.0h2.2v2.2h-2.2zM235.9 301.1h2.0v2.0h-2.0zM213.4 305.6h2.3v2.3h-2.3zM297.2 304.7h2.1v2.1h-2.1zM292.1 311.6h1.9v1.9h-1.9zM252.2 282.2h2.2v2.2h-2.2zM268.0 281.3h1.9v1.9h-1.9zM250.6 311.3h1.6v1.6h-1.6zM241.2 296.4h2.1v2.1h-2.1zM310.0 304.7h1.9v1.9h-1.9zM334.0 300.5h2.0v2.0h-2.0zM256.8 289.7h2.0v2.0h-2.0zM229.9 305.7h1.4v1.4h-1.4zM239.1 285.2h1.5v1.5h-1.5zM296.6 298.1h1.7v1.7h-1.7zM311.6 286.2h2.3v2.3h-2.3zM309.9 306.8h1.5v1.5h-1.5zM226.9 284.9h2.2v2.2h-2.2zM300.2 290.8h2.0v2.0h-2.0zM266.5 299.5h1.8v1.8h-1.8zM242.1 297.4h2.2v2.2h-2.2zM259.4 283.6h2.0v2.0h-2.0zM278.4 309.2h1.5v1.5h-1.5zM272.1 315.4h1.5v1.5h-1.5zM244.3 302.3h2.1v2.1h-2.1zM250.2 288.9h1.8v1.8h-1.8zM280.6 310.5h1.7v1.7h-1.7zM240.2 292.1h1.5v1.5h-1.5zM305.0 287.9h1.8v1.8h-1.8zM318.0 297.9h2.0v2.0h-2.0zM301.2 306.2h1.7v1.7h-1.7zM272.3 307.3h1.5v1.5h-1.5zM266.9 301.4h1.9v1.9h-1.9zM218.3 286.4h1.7v1.7h-1.7zM252.6 302.3h1.5v1.5h-1.5zM334.0 294.3h1.5v1.5h-1.5zM311.3 285.4h1.5v1.5h-1.5zM317.5 297.5h2.1v2.1h-2.1zM234.8 290.2h1.5v1.5h-1.5zM204.8 296.2h1.7v1.7h-1.7zM290.1 283.5h1.8v1.8h-1.8zM229.2 300.5h1.5v1.5h-1.5zM245.6 300.0h2.0v2.0h-2.0zM292.3 306.4h1.4v1.4h-1.4zM222.1 306.2h1.8v1.8h-1.8zM283.0 282.9h1.5v1.5h-1.5zM227.4 309.1h2.0v2.0h-2.0zM299.6 286.9h2.2v2.2h-2.2zM249.5 301.6h1.9v1.9h-1.9zM233.6 301.0h1.7v1.7h-1.7zM294.9 294.4h1.8v1.8h-1.8zM228.8 294.9h1.5v1.5h-1.5zM296.3 301.8h1.7v1.7h-1.7zM213.3 294.9h1.9v1.9h-1.9zM265.2 315.0h2.0v2.0h-2.0zM270.2 300.2h1.7v1.7h-1.7zM238.7 309.9h1.7v1.7h-1.7zM259.8 304.1h2.3v2.3h-2.3zM325.3 303.6h1.5v1.5h-1.5zM327.7 303.8h1.6v1.6h-1.6zM310.6 306.0h1.7v1.7h-1.7zM271.7 292.0h1.6v1.6h-1.6zM216.6 293.2h1.8v1.8h-1.8zM242.7 286.7h2.1v2.1h-2.1zM270.8 279.1h1.6v1.6h-1.6zM225.4 310.9h1.8v1.8h-1.8zM277.8 286.8h2.1v2.1h-2.1zM295.3 292.2h2.1v2.1h-2.1zM288.9 283.4h1.9v1.9h-1.9zM284.1 305.2h1.9v1.9h-1.9zM243.5 301.8h1.8v1.8h-1.8zM274.7 303.3h1.5v1.5h-1.5zM318.1 303.5h1.8v1.8h-1.8zM215.3 308.8h1.5v1.5h-1.5zM223.1 305.9h2.2v2.2h-2.2zM322.0 285.2h2.1v2.1h-2.1zM210.3 305.0h1.6v1.6h-1.6zM313.2 292.7h1.9v1.9h-1.9zM307.8 281.4h2.1v2.1h-2.1zM263.8 284.6h1.4v1.4h-1.4zM319.8 289.7h1.5v1.5h-1.5zM324.0 302.8h1.5v1.5h-1.5zM273.2 292.6h2.0v2.0h-2.0zM247.5 313.5h1.9v1.9h-1.9zM242.1 309.2h1.9v1.9h-1.9zM313.7 294.7h1.5v1.5h-1.5zM230.8 304.5h2.0v2.0h-2.0zM299.8 314.1h1.7v1.7h-1.7zM245.5 289.0h2.2v2.2h-2.2zM247.8 312.6h2.1v2.1h-2.1zM254.0 302.5h1.4v1.4h-1.4zM314.7 307.8h1.9v1.9h-1.9zM322.5 298.1h1.5v1.5h-1.5zM306.2 290.1h2.0v2.0h-2.0zM245.2 315.1h1.8v1.8h-1.8zM261.6 302.3h1.9v1.9h-1.9zM283.7 299.9h1.5v1.5h-1.5zM223.2 283.9h1.7v1.7h-1.7zM246.9 303.7h2.0v2.0h-2.0zM232.9 294.4h1.6v1.6h-1.6zM317.4 283.8h2.1v2.1h-2.1zM329.2 290.6h1.7v1.7h-1.7zM326.7 286.4h1.7v1.7h-1.7zM252.8 300.8h1.9v1.9h-1.9zM266.0 306.4h2.2v2.2h-2.2zM231.8 282.8h2.2v2.2h-2.2zM256.6 312.0h1.5v1.5h-1.5zM254.0 280.0h1.6v1.6h-1.6zM324.9 290.7h2.2v2.2h-2.2zM272.4 308.5h1.7v1.7h-1.7z" fill="#9f9ead"/><path d="M300.1 303.6h2.2v2.2h-2.2zM329.6 291.0h1.5v1.5h-1.5zM319.2 309.8h1.7v1.7h-1.7zM283.7 315.5h2.0v2.0h-2.0zM267.4 312.3h2.2v2.2h-2.2zM310.0 288.1h2.1v2.1h-2.1zM292.0 286.7h1.6v1.6h-1.6zM235.2 296.0h2.2v2.2h-2.2zM268.3 287.3h2.0v2.0h-2.0zM233.5 304.4h2.0v2.0h-2.0zM316.2 307.2h1.7v1.7h-1.7zM232.2 286.4h1.8v1.8h-1.8zM264.7 282.9h2.0v2.0h-2.0zM302.5 309.8h1.6v1.6h-1.6zM238.4 310.3h2.1v2.1h-2.1zM236.4 282.8h1.6v1.6h-1.6zM277.1 289.4h2.3v2.3h-2.3zM288.4 312.4h2.1v2.1h-2.1zM327.5 297.1h1.8v1.8h-1.8zM280.3 302.2h1.8v1.8h-1.8zM277.9 308.3h1.6v1.6h-1.6zM261.2 300.0h2.1v2.1h-2.1zM309.6 306.5h1.7v1.7h-1.7zM277.3 313.0h1.6v1.6h-1.6zM250.6 293.3h1.6v1.6h-1.6zM234.6 290.5h1.6v1.6h-1.6zM273.1 295.3h1.9v1.9h-1.9zM247.9 295.3h1.8v1.8h-1.8zM311.0 301.3h2.0v2.0h-2.0zM305.8 299.8h1.5v1.5h-1.5zM292.6 296.5h2.0v2.0h-2.0zM217.8 289.1h1.7v1.7h-1.7zM258.5 308.3h1.8v1.8h-1.8zM234.8 293.8h2.0v2.0h-2.0zM305.0 306.1h1.7v1.7h-1.7zM271.5 308.4h2.1v2.1h-2.1zM259.4 304.4h1.7v1.7h-1.7zM255.7 302.9h1.6v1.6h-1.6zM240.8 312.9h1.8v1.8h-1.8zM272.3 307.2h2.1v2.1h-2.1zM260.4 312.9h1.4v1.4h-1.4zM236.1 302.2h1.9v1.9h-1.9zM277.7 309.6h1.4v1.4h-1.4zM293.7 289.6h1.5v1.5h-1.5zM229.4 297.4h1.9v1.9h-1.9zM308.2 305.6h2.0v2.0h-2.0zM292.7 279.1h2.3v2.3h-2.3zM297.6 281.8h2.1v2.1h-2.1zM245.3 302.4h2.2v2.2h-2.2zM235.6 306.6h2.2v2.2h-2.2zM222.8 290.5h1.9v1.9h-1.9zM273.0 305.9h1.6v1.6h-1.6zM288.3 313.0h2.2v2.2h-2.2zM274.8 302.7h1.5v1.5h-1.5zM291.9 308.5h2.2v2.2h-2.2zM298.5 296.9h2.3v2.3h-2.3zM329.0 293.0h2.1v2.1h-2.1zM289.8 291.5h2.0v2.0h-2.0zM269.4 291.4h1.4v1.4h-1.4zM245.0 289.3h2.1v2.1h-2.1zM302.6 309.0h1.5v1.5h-1.5zM314.1 296.8h1.5v1.5h-1.5zM311.6 291.9h2.1v2.1h-2.1zM297.8 298.6h2.3v2.3h-2.3zM262.6 302.0h2.2v2.2h-2.2zM248.7 304.2h1.4v1.4h-1.4zM293.9 310.9h1.5v1.5h-1.5zM244.7 283.5h1.6v1.6h-1.6zM303.6 314.2h2.1v2.1h-2.1zM212.2 288.2h1.4v1.4h-1.4zM286.7 309.7h2.0v2.0h-2.0zM295.1 305.7h2.2v2.2h-2.2zM243.8 306.2h2.1v2.1h-2.1zM289.7 310.2h2.1v2.1h-2.1zM273.0 287.1h1.8v1.8h-1.8zM300.2 290.3h1.6v1.6h-1.6zM293.5 309.4h2.0v2.0h-2.0zM264.2 308.8h1.5v1.5h-1.5zM227.6 288.5h2.2v2.2h-2.2zM231.9 312.0h2.1v2.1h-2.1zM309.3 304.4h2.2v2.2h-2.2zM254.6 315.6h2.3v2.3h-2.3zM236.1 280.8h1.6v1.6h-1.6zM241.8 290.0h2.3v2.3h-2.3zM281.5 301.4h1.8v1.8h-1.8zM238.2 288.9h1.6v1.6h-1.6zM265.8 311.6h1.8v1.8h-1.8zM308.7 303.8h2.0v2.0h-2.0zM236.9 312.5h2.2v2.2h-2.2zM269.9 302.4h1.5v1.5h-1.5zM323.3 302.6h1.9v1.9h-1.9zM312.6 282.0h2.0v2.0h-2.0zM229.8 304.9h1.7v1.7h-1.7zM264.5 282.0h1.6v1.6h-1.6zM308.2 282.3h2.0v2.0h-2.0zM227.1 292.6h1.7v1.7h-1.7zM313.6 299.1h2.3v2.3h-2.3zM267.8 287.0h2.3v2.3h-2.3zM216.6 293.7h1.9v1.9h-1.9zM221.5 305.2h2.0v2.0h-2.0zM263.3 307.7h2.0v2.0h-2.0zM220.8 297.0h1.9v1.9h-1.9zM331.9 289.9h1.9v1.9h-1.9zM269.7 293.9h1.9v1.9h-1.9zM305.2 311.0h1.8v1.8h-1.8zM263.9 290.9h1.5v1.5h-1.5zM217.2 308.1h1.7v1.7h-1.7zM264.1 299.1h1.7v1.7h-1.7zM274.0 287.9h2.2v2.2h-2.2zM230.7 284.1h2.2v2.2h-2.2zM215.7 296.1h2.0v2.0h-2.0zM307.5 300.2h1.5v1.5h-1.5zM271.3 287.0h1.6v1.6h-1.6zM271.6 306.3h1.5v1.5h-1.5zM220.5 300.1h1.6v1.6h-1.6zM315.0 291.2h1.8v1.8h-1.8zM239.1 301.9h1.6v1.6h-1.6zM209.8 298.5h1.6v1.6h-1.6zM314.0 309.0h2.1v2.1h-2.1zM246.0 284.5h1.6v1.6h-1.6zM265.9 300.8h1.7v1.7h-1.7zM242.2 288.1h1.7v1.7h-1.7zM287.4 292.6h1.6v1.6h-1.6zM287.7 282.3h1.9v1.9h-1.9zM230.5 296.6h2.2v2.2h-2.2zM296.7 309.5h1.6v1.6h-1.6zM242.6 286.3h2.2v2.2h-2.2zM276.7 313.4h1.5v1.5h-1.5zM222.9 297.3h1.6v1.6h-1.6zM278.6 280.0h1.8v1.8h-1.8zM284.5 306.1h1.6v1.6h-1.6zM305.4 290.2h2.2v2.2h-2.2zM205.4 300.2h2.0v2.0h-2.0zM280.8 296.2h1.8v1.8h-1.8zM313.5 289.2h2.2v2.2h-2.2zM263.0 299.9h2.2v2.2h-2.2zM242.6 292.1h1.7v1.7h-1.7zM218.7 283.9h1.6v1.6h-1.6zM225.6 307.2h1.9v1.9h-1.9zM333.0 291.3h1.5v1.5h-1.5zM267.1 294.5h2.3v2.3h-2.3zM332.1 299.6h2.0v2.0h-2.0zM248.5 302.4h2.1v2.1h-2.1zM265.6 283.4h2.2v2.2h-2.2zM305.7 292.7h1.7v1.7h-1.7zM323.7 305.4h1.5v1.5h-1.5zM304.4 302.8h1.6v1.6h-1.6zM289.2 295.8h2.2v2.2h-2.2zM295.8 283.2h1.6v1.6h-1.6zM286.6 315.3h1.6v1.6h-1.6zM281.2 283.7h1.9v1.9h-1.9zM266.9 314.8h2.1v2.1h-2.1zM222.3 295.6h1.7v1.7h-1.7zM314.3 295.2h1.5v1.5h-1.5zM274.1 294.9h2.0v2.0h-2.0zM285.9 296.1h2.0v2.0h-2.0zM271.0 307.3h1.6v1.6h-1.6zM215.6 300.0h2.1v2.1h-2.1zM308.0 297.8h1.5v1.5h-1.5zM223.4 301.9h1.5v1.5h-1.5zM316.3 298.6h2.3v2.3h-2.3zM220.8 305.3h1.8v1.8h-1.8zM332.4 290.5h1.4v1.4h-1.4zM313.4 291.2h2.1v2.1h-2.1zM288.4 300.4h2.2v2.2h-2.2zM314.1 298.5h1.7v1.7h-1.7zM256.7 291.8h2.0v2.0h-2.0zM327.7 305.8h1.5v1.5h-1.5zM236.4 311.8h1.6v1.6h-1.6zM250.8 305.1h2.1v2.1h-2.1zM319.2 307.3h1.8v1.8h-1.8zM251.9 304.1h1.8v1.8h-1.8zM245.1 298.4h1.5v1.5h-1.5zM314.9 311.2h1.5v1.5h-1.5zM209.6 302.6h1.7v1.7h-1.7zM314.3 298.0h1.7v1.7h-1.7zM278.2 287.8h1.6v1.6h-1.6zM243.2 283.0h1.4v1.4h-1.4zM242.8 295.7h1.8v1.8h-1.8zM278.4 310.0h1.4v1.4h-1.4zM272.9 294.2h1.7v1.7h-1.7zM326.9 291.2h2.0v2.0h-2.0zM220.1 285.6h1.9v1.9h-1.9zM211.4 294.4h2.0v2.0h-2.0zM263.6 310.2h1.5v1.5h-1.5zM244.8 315.5h1.5v1.5h-1.5zM307.5 283.4h1.9v1.9h-1.9zM231.5 309.2h1.8v1.8h-1.8zM227.9 296.0h2.2v2.2h-2.2zM309.6 301.2h1.8v1.8h-1.8zM307.2 302.9h1.5v1.5h-1.5zM326.8 295.1h1.6v1.6h-1.6zM240.2 313.2h1.7v1.7h-1.7zM277.8 280.7h1.5v1.5h-1.5zM224.7 289.8h2.0v2.0h-2.0zM207.3 289.8h2.2v2.2h-2.2zM261.4 289.5h2.0v2.0h-2.0zM261.6 287.2h2.1v2.1h-2.1zM243.9 291.2h1.7v1.7h-1.7zM251.2 281.1h1.4v1.4h-1.4zM248.1 299.3h1.6v1.6h-1.6zM282.3 315.3h1.6v1.6h-1.6zM234.0 302.7h1.7v1.7h-1.7zM302.2 306.0h2.2v2.2h-2.2zM254.8 298.5h1.6v1.6h-1.6zM278.1 295.1h2.2v2.2h-2.2zM240.5 286.9h2.0v2.0h-2.0zM269.5 304.2h1.6v1.6h-1.6zM333.8 298.9h2.3v2.3h-2.3zM236.5 297.3h1.8v1.8h-1.8zM316.3 293.4h1.4v1.4h-1.4zM242.0 298.4h1.8v1.8h-1.8zM254.8 290.0h1.4v1.4h-1.4zM244.8 292.9h1.8v1.8h-1.8zM310.7 302.8h1.7v1.7h-1.7zM300.4 306.8h2.0v2.0h-2.0zM332.2 302.8h1.7v1.7h-1.7zM261.3 278.1h2.2v2.2h-2.2zM303.3 309.1h2.1v2.1h-2.1zM265.2 284.1h1.6v1.6h-1.6zM282.4 314.1h2.2v2.2h-2.2zM257.3 311.3h2.1v2.1h-2.1zM262.7 309.2h1.6v1.6h-1.6zM327.3 303.4h1.7v1.7h-1.7zM220.9 298.3h2.1v2.1h-2.1zM316.2 308.9h1.6v1.6h-1.6zM300.7 313.6h2.1v2.1h-2.1zM231.8 306.4h2.1v2.1h-2.1zM259.3 309.9h2.2v2.2h-2.2zM307.9 285.0h2.1v2.1h-2.1zM224.2 299.3h2.2v2.2h-2.2zM260.3 279.0h1.9v1.9h-1.9zM328.2 293.6h1.7v1.7h-1.7zM284.4 290.6h1.7v1.7h-1.7zM320.6 285.2h1.7v1.7h-1.7zM259.5 301.7h1.5v1.5h-1.5zM258.5 290.4h1.4v1.4h-1.4zM251.2 289.8h1.5v1.5h-1.5zM205.9 300.8h2.0v2.0h-2.0zM296.7 299.2h1.6v1.6h-1.6zM298.8 291.9h2.2v2.2h-2.2zM267.8 305.7h2.0v2.0h-2.0zM235.2 312.4h2.3v2.3h-2.3zM288.3 279.9h1.6v1.6h-1.6zM285.8 282.6h2.1v2.1h-2.1zM218.1 284.7h1.5v1.5h-1.5zM329.2 291.6h2.0v2.0h-2.0zM242.9 309.2h1.7v1.7h-1.7zM298.3 307.9h1.8v1.8h-1.8zM279.4 314.6h1.7v1.7h-1.7zM302.0 304.9h1.6v1.6h-1.6zM276.6 314.3h2.2v2.2h-2.2zM323.4 287.1h2.1v2.1h-2.1zM252.1 304.7h2.0v2.0h-2.0zM240.8 283.8h2.2v2.2h-2.2zM309.3 302.8h1.6v1.6h-1.6zM213.2 300.8h2.2v2.2h-2.2zM208.9 289.8h2.2v2.2h-2.2zM215.8 293.4h2.1v2.1h-2.1zM254.2 286.0h1.9v1.9h-1.9zM319.0 302.9h1.5v1.5h-1.5zM300.7 287.2h2.1v2.1h-2.1zM212.7 292.8h1.8v1.8h-1.8zM293.3 288.3h2.0v2.0h-2.0zM249.9 304.5h1.8v1.8h-1.8zM263.5 283.5h2.2v2.2h-2.2zM331.1 293.5h1.9v1.9h-1.9zM268.4 306.4h2.2v2.2h-2.2zM235.0 312.3h1.8v1.8h-1.8zM276.2 314.3h1.6v1.6h-1.6zM260.8 301.9h1.9v1.9h-1.9zM285.9 302.3h1.9v1.9h-1.9zM323.1 308.9h1.6v1.6h-1.6zM226.6 299.6h1.9v1.9h-1.9zM301.1 313.4h1.6v1.6h-1.6zM245.7 308.2h1.7v1.7h-1.7zM289.7 292.1h2.1v2.1h-2.1zM219.0 292.2h2.0v2.0h-2.0zM330.6 293.8h1.8v1.8h-1.8zM290.3 306.1h1.6v1.6h-1.6zM235.0 312.2h1.6v1.6h-1.6zM270.2 280.2h1.6v1.6h-1.6zM272.6 284.6h1.5v1.5h-1.5zM258.2 315.9h1.7v1.7h-1.7zM208.4 288.8h1.9v1.9h-1.9zM243.4 294.4h2.0v2.0h-2.0zM291.1 307.4h1.5v1.5h-1.5zM221.1 299.2h1.7v1.7h-1.7zM259.6 294.1h1.8v1.8h-1.8zM302.8 293.0h1.8v1.8h-1.8zM309.7 311.3h1.8v1.8h-1.8zM267.3 304.4h1.5v1.5h-1.5zM265.6 309.7h1.8v1.8h-1.8zM288.2 312.0h2.0v2.0h-2.0zM320.9 306.8h1.8v1.8h-1.8zM283.7 282.3h2.2v2.2h-2.2zM250.5 293.6h1.9v1.9h-1.9zM212.0 294.4h1.7v1.7h-1.7zM213.5 307.9h1.7v1.7h-1.7zM255.7 280.1h2.0v2.0h-2.0zM265.4 313.0h1.6v1.6h-1.6zM290.8 311.6h1.6v1.6h-1.6zM328.4 300.8h2.0v2.0h-2.0zM276.0 314.1h1.6v1.6h-1.6zM242.9 310.2h2.3v2.3h-2.3zM307.6 299.4h2.3v2.3h-2.3zM298.3 309.1h1.5v1.5h-1.5zM283.3 296.4h1.5v1.5h-1.5zM299.5 306.2h1.5v1.5h-1.5zM239.6 301.4h1.7v1.7h-1.7zM298.7 292.3h2.3v2.3h-2.3zM258.2 299.6h2.1v2.1h-2.1zM280.9 301.3h2.3v2.3h-2.3zM329.6 298.5h2.1v2.1h-2.1zM316.4 306.8h1.4v1.4h-1.4zM254.9 291.7h1.8v1.8h-1.8zM284.0 290.6h1.9v1.9h-1.9zM220.5 306.3h1.6v1.6h-1.6zM246.7 308.6h2.3v2.3h-2.3zM204.5 294.1h1.5v1.5h-1.5zM299.6 288.8h1.6v1.6h-1.6zM318.3 290.2h2.2v2.2h-2.2zM253.4 284.8h2.1v2.1h-2.1zM256.2 309.8h2.0v2.0h-2.0zM311.9 297.0h2.1v2.1h-2.1zM225.8 306.3h2.2v2.2h-2.2zM295.0 299.6h1.8v1.8h-1.8zM307.2 286.4h1.7v1.7h-1.7zM262.3 301.9h2.1v2.1h-2.1zM243.6 296.0h1.6v1.6h-1.6zM264.4 281.1h2.0v2.0h-2.0zM310.4 305.7h1.8v1.8h-1.8zM299.8 298.0h1.8v1.8h-1.8zM319.3 292.4h2.3v2.3h-2.3zM325.5 306.6h1.8v1.8h-1.8zM292.6 288.5h1.8v1.8h-1.8zM332.0 290.3h1.6v1.6h-1.6zM220.3 301.0h2.2v2.2h-2.2zM264.3 314.9h1.4v1.4h-1.4zM229.9 303.4h1.8v1.8h-1.8zM300.7 311.0h2.3v2.3h-2.3zM215.0 285.1h2.1v2.1h-2.1zM278.1 300.0h2.2v2.2h-2.2zM298.1 295.7h2.3v2.3h-2.3zM240.1 301.2h1.7v1.7h-1.7zM237.6 298.3h1.7v1.7h-1.7zM260.1 278.9h1.9v1.9h-1.9zM298.6 282.6h2.1v2.1h-2.1zM308.8 291.9h1.6v1.6h-1.6zM221.6 287.5h1.9v1.9h-1.9zM223.5 304.4h2.1v2.1h-2.1zM309.9 284.8h2.2v2.2h-2.2zM244.0 295.7h2.2v2.2h-2.2zM291.2 291.1h1.9v1.9h-1.9zM251.1 302.3h2.3v2.3h-2.3zM328.2 298.3h1.7v1.7h-1.7z" fill="#9695a5"/><path d="M258.9 279.3h1.6v1.6h-1.6zM273.9 315.1h1.7v1.7h-1.7zM255.6 286.2h2.3v2.3h-2.3zM211.2 292.4h2.3v2.3h-2.3zM303.6 298.4h2.1v2.1h-2.1zM304.2 283.0h1.8v1.8h-1.8zM287.1 287.9h2.1v2.1h-2.1zM287.5 293.0h2.3v2.3h-2.3zM322.3 301.6h1.7v1.7h-1.7zM308.3 284.7h1.5v1.5h-1.5zM297.9 297.1h2.1v2.1h-2.1zM235.6 302.2h2.1v2.1h-2.1zM266.8 305.4h2.3v2.3h-2.3zM273.4 288.3h2.3v2.3h-2.3zM295.0 282.7h2.2v2.2h-2.2zM290.4 313.6h1.8v1.8h-1.8zM224.9 289.7h2.1v2.1h-2.1zM245.8 315.0h1.8v1.8h-1.8zM283.6 287.3h1.5v1.5h-1.5zM263.8 282.4h2.1v2.1h-2.1zM275.7 292.5h2.2v2.2h-2.2zM290.5 309.0h2.3v2.3h-2.3zM242.0 292.5h1.5v1.5h-1.5zM332.3 303.2h1.6v1.6h-1.6zM312.6 287.7h2.1v2.1h-2.1zM251.6 308.3h1.4v1.4h-1.4zM300.9 298.0h2.1v2.1h-2.1zM305.9 297.8h1.5v1.5h-1.5zM266.2 293.3h2.0v2.0h-2.0zM310.2 299.2h1.9v1.9h-1.9zM226.2 292.4h2.0v2.0h-2.0zM314.5 287.3h1.9v1.9h-1.9zM225.4 297.6h1.5v1.5h-1.5zM310.1 302.9h1.7v1.7h-1.7zM235.8 294.7h1.8v1.8h-1.8zM264.1 288.8h1.7v1.7h-1.7zM249.4 279.3h1.4v1.4h-1.4zM313.2 298.8h2.1v2.1h-2.1zM322.8 301.0h1.4v1.4h-1.4zM272.3 297.1h2.3v2.3h-2.3zM252.1 307.0h1.9v1.9h-1.9zM300.2 297.1h1.7v1.7h-1.7zM221.6 308.3h1.4v1.4h-1.4zM303.8 297.0h1.9v1.9h-1.9zM243.6 278.8h2.3v2.3h-2.3zM283.7 285.5h1.6v1.6h-1.6zM301.8 301.1h1.8v1.8h-1.8zM262.2 305.0h1.5v1.5h-1.5zM230.4 300.4h1.5v1.5h-1.5zM252.6 303.9h2.0v2.0h-2.0zM289.5 291.4h1.6v1.6h-1.6zM233.8 305.2h1.4v1.4h-1.4zM267.1 296.8h1.4v1.4h-1.4zM255.5 292.3h1.8v1.8h-1.8zM303.4 281.7h1.7v1.7h-1.7zM278.0 310.9h1.5v1.5h-1.5zM218.1 299.5h1.9v1.9h-1.9zM311.2 308.4h1.8v1.8h-1.8zM307.0 280.7h2.3v2.3h-2.3zM303.6 289.3h1.6v1.6h-1.6zM247.6 300.0h1.9v1.9h-1.9zM329.3 297.1h1.5v1.5h-1.5zM307.2 297.3h2.0v2.0h-2.0zM258.1 304.9h1.5v1.5h-1.5zM284.5 288.7h1.7v1.7h-1.7zM238.9 281.1h1.7v1.7h-1.7zM276.2 278.5h1.6v1.6h-1.6zM224.8 295.8h1.8v1.8h-1.8zM295.5 314.1h1.9v1.9h-1.9zM319.5 296.9h1.7v1.7h-1.7zM215.1 287.0h1.6v1.6h-1.6zM319.9 296.9h1.7v1.7h-1.7zM225.4 292.2h2.1v2.1h-2.1zM291.3 281.4h1.7v1.7h-1.7zM277.4 282.0h1.7v1.7h-1.7zM248.5 293.7h1.7v1.7h-1.7zM311.1 289.7h1.7v1.7h-1.7zM221.2 285.7h1.8v1.8h-1.8zM229.4 285.8h1.6v1.6h-1.6zM291.6 283.9h1.5v1.5h-1.5zM332.4 302.6h2.3v2.3h-2.3zM300.6 310.8h2.1v2.1h-2.1zM252.3 314.1h1.9v1.9h-1.9zM280.9 312.5h1.9v1.9h-1.9zM264.5 297.5h1.8v1.8h-1.8zM267.0 291.8h1.6v1.6h-1.6zM271.1 292.2h2.2v2.2h-2.2zM249.7 311.1h1.8v1.8h-1.8zM310.2 305.5h1.8v1.8h-1.8zM306.7 297.4h1.5v1.5h-1.5zM302.6 293.6h2.1v2.1h-2.1zM253.8 315.4h2.0v2.0h-2.0zM233.2 289.9h2.3v2.3h-2.3zM327.9 303.8h2.2v2.2h-2.2zM223.0 308.8h1.6v1.6h-1.6zM306.0 291.5h2.0v2.0h-2.0zM281.9 302.0h2.0v2.0h-2.0zM285.9 279.5h2.2v2.2h-2.2zM239.2 309.5h2.2v2.2h-2.2zM290.0 298.6h1.7v1.7h-1.7zM311.7 304.4h1.6v1.6h-1.6zM253.8 289.9h1.4v1.4h-1.4zM216.1 289.9h2.2v2.2h-2.2zM303.8 301.4h1.6v1.6h-1.6zM296.9 292.1h2.2v2.2h-2.2zM272.3 311.2h2.1v2.1h-2.1zM271.4 293.0h2.1v2.1h-2.1zM259.0 301.6h1.4v1.4h-1.4zM294.8 288.5h1.9v1.9h-1.9zM241.1 301.3h1.7v1.7h-1.7zM240.3 308.2h1.7v1.7h-1.7zM244.6 279.3h1.8v1.8h-1.8zM323.9 295.2h1.4v1.4h-1.4zM310.9 305.1h2.0v2.0h-2.0zM306.5 294.5h2.1v2.1h-2.1zM310.6 307.4h1.7v1.7h-1.7zM229.0 304.1h1.7v1.7h-1.7zM283.0 294.4h1.6v1.6h-1.6zM209.9 291.0h2.1v2.1h-2.1zM299.2 299.7h1.5v1.5h-1.5zM285.7 289.2h1.5v1.5h-1.5zM329.2 288.2h1.8v1.8h-1.8zM325.8 301.4h1.6v1.6h-1.6zM314.4 307.6h2.1v2.1h-2.1zM281.5 296.9h1.5v1.5h-1.5zM281.3 309.3h1.5v1.5h-1.5zM284.1 307.8h1.4v1.4h-1.4zM283.8 279.6h1.6v1.6h-1.6zM265.4 307.5h1.4v1.4h-1.4zM242.3 302.9h1.5v1.5h-1.5zM242.9 313.1h1.8v1.8h-1.8zM280.7 281.5h1.6v1.6h-1.6zM221.2 285.2h1.7v1.7h-1.7zM237.6 314.3h2.2v2.2h-2.2zM289.4 312.0h1.8v1.8h-1.8zM284.0 309.7h1.9v1.9h-1.9zM228.2 288.6h2.2v2.2h-2.2zM220.9 306.9h2.0v2.0h-2.0zM253.0 295.8h1.4v1.4h-1.4zM316.5 289.5h2.0v2.0h-2.0zM216.4 303.8h1.7v1.7h-1.7zM242.9 308.7h1.8v1.8h-1.8zM300.8 295.6h2.2v2.2h-2.2zM284.2 307.3h1.8v1.8h-1.8zM235.5 309.5h1.8v1.8h-1.8zM226.1 310.3h2.3v2.3h-2.3zM261.0 287.7h1.9v1.9h-1.9zM317.2 309.2h2.2v2.2h-2.2zM311.3 309.3h2.0v2.0h-2.0zM250.1 305.0h1.8v1.8h-1.8zM317.8 285.1h1.6v1.6h-1.6zM302.6 303.1h1.5v1.5h-1.5zM220.3 303.2h2.1v2.1h-2.1zM267.7 311.7h1.8v1.8h-1.8zM320.9 293.9h1.8v1.8h-1.8zM238.3 283.7h2.0v2.0h-2.0zM235.5 308.9h1.7v1.7h-1.7zM240.5 281.6h1.9v1.9h-1.9zM266.0 295.1h1.7v1.7h-1.7zM317.2 282.7h1.6v1.6h-1.6zM252.2 315.8h1.7v1.7h-1.7zM277.6 312.2h2.1v2.1h-2.1zM298.0 301.0h2.1v2.1h-2.1zM284.9 300.2h1.4v1.4h-1.4zM270.3 279.7h2.1v2.1h-2.1zM321.1 304.7h2.1v2.1h-2.1zM255.3 311.1h1.9v1.9h-1.9zM237.5 299.9h1.6v1.6h-1.6zM294.7 298.4h1.6v1.6h-1.6zM280.7 304.0h1.5v1.5h-1.5zM320.2 286.2h1.5v1.5h-1.5zM278.6 313.7h1.7v1.7h-1.7zM256.6 300.0h2.0v2.0h-2.0zM233.0 306.6h1.8v1.8h-1.8zM295.2 286.1h1.8v1.8h-1.8zM257.5 284.2h1.5v1.5h-1.5zM263.7 312.8h1.6v1.6h-1.6zM295.3 305.7h1.6v1.6h-1.6zM324.0 290.4h2.1v2.1h-2.1zM277.4 285.4h1.6v1.6h-1.6zM319.6 290.0h2.2v2.2h-2.2zM239.7 302.4h2.1v2.1h-2.1zM315.0 290.8h1.6v1.6h-1.6zM323.6 305.5h1.9v1.9h-1.9zM280.1 315.8h1.5v1.5h-1.5zM271.6 299.6h2.2v2.2h-2.2zM304.3 286.6h1.6v1.6h-1.6zM300.2 292.5h2.0v2.0h-2.0zM251.1 303.8h2.1v2.1h-2.1zM282.5 286.6h1.8v1.8h-1.8zM296.2 296.1h2.1v2.1h-2.1zM256.5 279.5h1.6v1.6h-1.6zM251.7 282.8h1.5v1.5h-1.5zM276.3 298.3h2.1v2.1h-2.1zM227.1 301.0h1.6v1.6h-1.6zM332.5 297.4h1.7v1.7h-1.7zM261.7 299.9h2.0v2.0h-2.0zM266.2 283.1h1.4v1.4h-1.4zM210.6 306.3h1.9v1.9h-1.9zM258.9 297.3h2.1v2.1h-2.1zM241.7 286.1h2.1v2.1h-2.1zM210.1 306.5h1.6v1.6h-1.6zM211.8 293.8h2.2v2.2h-2.2zM251.7 281.1h2.0v2.0h-2.0zM289.3 311.1h2.0v2.0h-2.0zM321.4 301.2h1.6v1.6h-1.6zM289.4 287.5h1.8v1.8h-1.8zM276.8 309.9h2.1v2.1h-2.1zM334.5 296.5h2.0v2.0h-2.0zM240.0 279.7h1.5v1.5h-1.5zM263.3 293.7h1.7v1.7h-1.7zM259.6 284.8h1.9v1.9h-1.9zM299.2 313.9h1.6v1.6h-1.6zM244.0 308.0h2.3v2.3h-2.3zM285.3 301.2h1.8v1.8h-1.8zM277.2 292.7h1.9v1.9h-1.9zM245.2 285.4h2.1v2.1h-2.1zM244.4 295.5h1.5v1.5h-1.5zM214.3 294.6h1.5v1.5h-1.5zM256.2 300.6h1.9v1.9h-1.9zM282.0 306.1h1.5v1.5h-1.5zM281.4 314.9h1.9v1.9h-1.9zM235.6 282.1h2.1v2.1h-2.1zM321.6 294.9h2.3v2.3h-2.3zM244.3 313.5h2.0v2.0h-2.0zM284.4 289.7h1.6v1.6h-1.6zM259.2 279.2h1.8v1.8h-1.8zM268.5 309.7h1.9v1.9h-1.9zM278.8 310.3h2.2v2.2h-2.2zM289.0 295.5h1.5v1.5h-1.5zM326.9 295.7h1.9v1.9h-1.9zM310.2 301.3h1.5v1.5h-1.5zM260.9 295.6h2.3v2.3h-2.3zM232.7 297.2h1.9v1.9h-1.9zM258.1 305.8h2.2v2.2h-2.2zM319.3 291.9h1.7v1.7h-1.7zM322.5 291.6h1.8v1.8h-1.8zM262.5 309.9h1.7v1.7h-1.7zM276.9 296.3h2.2v2.2h-2.2zM268.7 293.1h1.7v1.7h-1.7zM289.0 290.2h2.0v2.0h-2.0zM254.0 296.2h1.7v1.7h-1.7zM296.9 310.0h1.9v1.9h-1.9zM291.6 305.9h1.6v1.6h-1.6zM283.3 279.5h1.6v1.6h-1.6zM261.7 288.7h1.6v1.6h-1.6zM239.3 291.5h1.7v1.7h-1.7zM318.7 306.9h2.2v2.2h-2.2zM279.0 292.7h1.8v1.8h-1.8zM235.3 308.5h1.7v1.7h-1.7zM301.1 311.6h2.0v2.0h-2.0zM219.0 307.5h2.0v2.0h-2.0zM261.7 307.9h2.0v2.0h-2.0zM317.5 296.7h1.6v1.6h-1.6zM246.5 280.6h1.9v1.9h-1.9zM263.2 279.6h1.9v1.9h-1.9zM280.4 300.2h1.8v1.8h-1.8zM229.3 298.8h1.6v1.6h-1.6zM282.6 296.9h1.6v1.6h-1.6zM261.0 315.0h2.3v2.3h-2.3zM306.0 307.2h1.6v1.6h-1.6zM245.6 308.2h1.7v1.7h-1.7zM217.3 287.4h1.7v1.7h-1.7zM289.9 304.0h2.2v2.2h-2.2zM218.9 293.7h1.8v1.8h-1.8zM209.2 298.0h2.2v2.2h-2.2zM205.4 294.9h1.4v1.4h-1.4zM282.4 310.0h2.1v2.1h-2.1zM214.3 302.6h1.8v1.8h-1.8zM233.2 295.6h1.5v1.5h-1.5z" fill="#7f7e8e"/><path d="M289.0 298.9h1.6v1.6h-1.6zM312.4 301.4h2.2v2.2h-2.2zM238.2 313.6h2.0v2.0h-2.0zM293.2 298.6h1.6v1.6h-1.6zM281.6 301.6h1.8v1.8h-1.8zM217.3 299.2h1.6v1.6h-1.6zM322.2 298.7h2.2v2.2h-2.2zM283.1 297.6h1.7v1.7h-1.7zM281.5 314.0h2.2v2.2h-2.2zM258.4 306.5h1.9v1.9h-1.9zM255.3 299.7h1.4v1.4h-1.4zM295.6 307.4h1.6v1.6h-1.6zM297.4 280.9h2.0v2.0h-2.0zM216.4 307.3h2.2v2.2h-2.2zM319.5 287.4h1.8v1.8h-1.8zM293.7 313.1h2.1v2.1h-2.1zM301.8 294.7h1.5v1.5h-1.5zM266.8 287.1h1.9v1.9h-1.9zM293.8 306.6h1.4v1.4h-1.4zM283.1 291.4h2.0v2.0h-2.0zM263.0 303.6h2.0v2.0h-2.0zM314.9 295.3h2.0v2.0h-2.0zM262.3 313.2h1.9v1.9h-1.9zM247.6 300.7h2.1v2.1h-2.1zM330.9 304.7h1.8v1.8h-1.8zM309.0 283.4h1.6v1.6h-1.6zM235.0 283.6h1.8v1.8h-1.8zM307.1 291.1h2.1v2.1h-2.1zM213.7 303.3h1.7v1.7h-1.7zM292.9 314.4h1.5v1.5h-1.5zM315.3 304.9h2.2v2.2h-2.2zM251.7 308.6h1.9v1.9h-1.9zM248.4 311.3h2.1v2.1h-2.1zM258.1 302.4h1.8v1.8h-1.8zM261.2 296.6h1.6v1.6h-1.6zM283.2 297.7h1.7v1.7h-1.7zM251.5 303.5h2.3v2.3h-2.3zM211.2 298.9h1.9v1.9h-1.9zM255.2 309.0h2.1v2.1h-2.1zM335.1 296.4h1.6v1.6h-1.6zM252.3 301.5h2.0v2.0h-2.0zM293.0 303.4h1.5v1.5h-1.5zM206.7 291.7h1.5v1.5h-1.5zM241.6 304.5h1.8v1.8h-1.8zM270.4 297.8h1.9v1.9h-1.9zM261.8 292.8h2.1v2.1h-2.1zM233.8 293.6h1.6v1.6h-1.6zM237.7 310.8h1.9v1.9h-1.9zM227.5 302.1h2.0v2.0h-2.0zM214.5 294.6h1.8v1.8h-1.8zM243.2 301.8h1.8v1.8h-1.8zM220.4 309.4h1.7v1.7h-1.7zM229.4 311.7h1.9v1.9h-1.9zM314.0 310.3h1.6v1.6h-1.6zM314.7 290.6h1.4v1.4h-1.4zM259.4 289.2h2.0v2.0h-2.0zM263.4 311.1h2.1v2.1h-2.1zM314.3 292.2h2.0v2.0h-2.0zM321.7 308.5h2.1v2.1h-2.1zM267.9 307.3h1.5v1.5h-1.5zM253.9 310.3h2.1v2.1h-2.1zM296.0 303.7h2.1v2.1h-2.1zM257.6 313.1h2.2v2.2h-2.2zM312.5 312.6h2.0v2.0h-2.0zM259.8 299.4h1.5v1.5h-1.5zM284.3 303.2h1.8v1.8h-1.8zM261.9 312.4h2.0v2.0h-2.0zM220.2 303.2h1.5v1.5h-1.5zM321.9 290.2h1.8v1.8h-1.8zM290.4 310.2h2.1v2.1h-2.1zM208.9 300.0h1.5v1.5h-1.5zM298.7 291.1h1.8v1.8h-1.8zM309.4 289.2h1.4v1.4h-1.4zM306.0 291.5h1.8v1.8h-1.8zM330.0 295.5h1.8v1.8h-1.8zM274.6 279.7h1.8v1.8h-1.8zM275.5 287.1h1.8v1.8h-1.8zM227.1 289.0h2.0v2.0h-2.0zM317.3 286.5h1.5v1.5h-1.5zM284.5 313.2h2.3v2.3h-2.3zM302.1 294.0h1.5v1.5h-1.5zM250.1 283.4h1.7v1.7h-1.7zM225.8 309.4h2.0v2.0h-2.0zM317.8 286.6h2.0v2.0h-2.0zM299.7 293.0h1.8v1.8h-1.8zM225.4 288.7h2.1v2.1h-2.1zM332.1 297.0h2.1v2.1h-2.1zM293.9 296.2h1.9v1.9h-1.9zM244.3 301.2h2.1v2.1h-2.1zM282.3 287.4h1.9v1.9h-1.9zM258.0 284.8h2.0v2.0h-2.0zM220.2 299.4h1.9v1.9h-1.9zM257.7 290.7h1.9v1.9h-1.9zM293.5 290.9h2.1v2.1h-2.1zM308.3 302.6h1.8v1.8h-1.8zM259.3 284.8h1.9v1.9h-1.9zM253.6 290.9h2.1v2.1h-2.1zM222.8 298.3h1.8v1.8h-1.8zM293.0 279.4h2.2v2.2h-2.2zM289.5 309.6h2.3v2.3h-2.3zM222.2 307.4h1.6v1.6h-1.6zM238.1 304.5h2.2v2.2h-2.2zM250.5 304.0h1.8v1.8h-1.8zM286.5 291.9h1.5v1.5h-1.5zM292.4 290.2h2.3v2.3h-2.3zM282.7 308.0h2.0v2.0h-2.0zM316.0 296.4h2.3v2.3h-2.3zM217.9 296.1h2.2v2.2h-2.2zM292.7 298.4h1.7v1.7h-1.7zM248.4 302.7h1.7v1.7h-1.7zM270.7 285.5h1.7v1.7h-1.7zM235.2 299.9h1.5v1.5h-1.5zM288.1 293.3h1.8v1.8h-1.8zM217.3 287.6h1.8v1.8h-1.8zM292.1 303.1h2.0v2.0h-2.0zM230.7 311.7h2.2v2.2h-2.2zM263.1 279.3h1.4v1.4h-1.4zM232.5 313.9h2.2v2.2h-2.2zM268.1 282.9h2.2v2.2h-2.2zM239.0 311.9h1.9v1.9h-1.9zM289.9 295.1h2.3v2.3h-2.3zM258.8 306.7h2.1v2.1h-2.1zM227.7 285.0h2.1v2.1h-2.1zM267.4 296.5h1.9v1.9h-1.9zM232.1 312.7h1.7v1.7h-1.7zM333.4 299.4h2.2v2.2h-2.2zM271.7 287.6h1.7v1.7h-1.7zM282.7 293.8h1.5v1.5h-1.5zM249.1 311.2h1.8v1.8h-1.8zM253.2 291.4h2.0v2.0h-2.0zM276.6 288.7h1.8v1.8h-1.8zM332.9 291.1h1.8v1.8h-1.8zM266.4 308.7h1.9v1.9h-1.9zM284.8 307.1h2.0v2.0h-2.0zM215.8 306.8h1.6v1.6h-1.6zM253.6 308.1h2.2v2.2h-2.2zM246.6 285.6h1.5v1.5h-1.5zM212.1 308.2h1.6v1.6h-1.6zM291.0 304.3h2.3v2.3h-2.3zM246.6 299.8h2.3v2.3h-2.3zM328.8 290.6h2.0v2.0h-2.0zM265.5 300.8h2.2v2.2h-2.2zM331.5 304.5h1.7v1.7h-1.7zM264.3 295.4h1.7v1.7h-1.7zM252.3 296.6h2.0v2.0h-2.0zM286.3 303.7h2.0v2.0h-2.0zM251.4 310.3h2.3v2.3h-2.3zM290.8 308.4h2.0v2.0h-2.0zM288.7 300.4h2.3v2.3h-2.3zM291.6 297.7h1.4v1.4h-1.4zM242.4 309.5h2.3v2.3h-2.3zM231.8 291.9h1.5v1.5h-1.5zM231.6 289.5h2.2v2.2h-2.2zM247.4 296.3h1.9v1.9h-1.9zM220.5 306.5h1.5v1.5h-1.5zM273.7 278.2h1.7v1.7h-1.7zM311.0 286.6h1.6v1.6h-1.6zM224.6 284.9h1.8v1.8h-1.8zM272.5 305.6h2.1v2.1h-2.1zM240.5 298.9h1.5v1.5h-1.5zM302.9 289.8h1.9v1.9h-1.9zM318.6 304.0h2.0v2.0h-2.0zM287.8 290.5h1.4v1.4h-1.4zM248.8 314.1h2.3v2.3h-2.3zM269.3 311.0h2.0v2.0h-2.0zM216.2 308.5h1.9v1.9h-1.9zM301.1 283.1h1.8v1.8h-1.8zM265.4 291.4h2.1v2.1h-2.1zM316.5 301.6h1.8v1.8h-1.8zM309.8 285.3h1.9v1.9h-1.9zM227.4 305.6h2.2v2.2h-2.2zM274.8 291.5h1.4v1.4h-1.4zM220.0 302.2h1.5v1.5h-1.5zM208.0 303.9h2.2v2.2h-2.2zM274.1 307.6h1.8v1.8h-1.8zM213.6 293.9h2.3v2.3h-2.3zM253.1 294.7h1.9v1.9h-1.9zM230.9 297.8h1.9v1.9h-1.9zM237.8 292.5h1.9v1.9h-1.9zM311.2 289.8h1.8v1.8h-1.8zM233.7 292.1h1.9v1.9h-1.9zM239.2 309.1h2.2v2.2h-2.2zM209.0 304.6h1.6v1.6h-1.6zM258.7 310.4h1.5v1.5h-1.5zM275.0 315.6h1.6v1.6h-1.6zM215.2 305.9h1.6v1.6h-1.6zM298.5 287.3h2.2v2.2h-2.2zM267.8 300.1h1.7v1.7h-1.7zM212.4 296.5h2.1v2.1h-2.1zM250.3 278.8h1.7v1.7h-1.7zM252.1 283.4h2.3v2.3h-2.3zM257.9 283.1h1.6v1.6h-1.6zM331.6 293.6h2.0v2.0h-2.0zM221.1 301.4h2.3v2.3h-2.3zM304.1 307.8h2.2v2.2h-2.2zM308.5 308.1h1.8v1.8h-1.8zM300.8 303.0h1.5v1.5h-1.5zM224.6 297.1h1.7v1.7h-1.7zM273.9 283.1h1.9v1.9h-1.9zM308.1 284.3h1.7v1.7h-1.7zM279.4 295.4h1.6v1.6h-1.6z" fill="#6f6e7b"/><path d="M314.8 300.9h2.1v2.1h-2.1zM276.4 303.9h2.2v2.2h-2.2zM214.6 296.7h1.5v1.5h-1.5zM258.9 295.7h2.1v2.1h-2.1zM330.9 300.1h1.9v1.9h-1.9zM213.6 285.1h1.9v1.9h-1.9zM272.2 313.7h1.6v1.6h-1.6zM251.7 283.9h2.2v2.2h-2.2zM259.2 288.8h1.4v1.4h-1.4zM310.3 311.8h1.4v1.4h-1.4zM274.0 305.3h2.1v2.1h-2.1zM219.7 293.9h2.2v2.2h-2.2zM286.5 290.7h2.1v2.1h-2.1zM257.9 302.1h1.6v1.6h-1.6zM258.5 312.4h1.9v1.9h-1.9zM288.8 307.7h2.0v2.0h-2.0zM274.1 296.5h1.8v1.8h-1.8zM214.4 305.4h1.8v1.8h-1.8zM241.1 282.7h2.0v2.0h-2.0zM292.0 288.5h1.4v1.4h-1.4zM275.6 313.4h1.8v1.8h-1.8zM265.1 315.0h1.7v1.7h-1.7zM253.1 290.0h2.0v2.0h-2.0zM220.9 295.2h2.0v2.0h-2.0zM219.9 299.7h1.5v1.5h-1.5zM295.6 310.4h2.0v2.0h-2.0zM313.1 281.8h1.5v1.5h-1.5zM246.7 282.8h1.7v1.7h-1.7zM258.6 291.1h1.7v1.7h-1.7zM305.0 296.7h2.1v2.1h-2.1zM292.5 288.8h2.1v2.1h-2.1zM310.3 303.4h2.1v2.1h-2.1zM252.7 284.1h2.1v2.1h-2.1zM312.8 304.7h1.5v1.5h-1.5zM275.3 309.1h1.6v1.6h-1.6zM214.2 289.6h2.3v2.3h-2.3zM331.5 302.5h1.8v1.8h-1.8zM223.4 284.4h1.7v1.7h-1.7zM287.7 299.9h2.0v2.0h-2.0zM259.9 311.5h2.1v2.1h-2.1zM276.1 280.9h1.9v1.9h-1.9zM307.8 290.8h2.2v2.2h-2.2zM265.6 314.7h2.1v2.1h-2.1zM223.1 304.4h1.8v1.8h-1.8zM304.9 305.4h2.0v2.0h-2.0zM242.5 289.2h1.6v1.6h-1.6zM284.5 300.5h1.6v1.6h-1.6zM263.8 288.0h1.6v1.6h-1.6zM312.4 297.8h1.5v1.5h-1.5zM243.2 305.8h1.4v1.4h-1.4zM256.4 297.0h2.2v2.2h-2.2zM210.6 295.5h2.1v2.1h-2.1zM282.2 305.0h1.4v1.4h-1.4zM299.6 290.1h1.9v1.9h-1.9zM245.6 289.7h1.5v1.5h-1.5zM258.1 283.8h1.7v1.7h-1.7zM265.7 310.4h1.7v1.7h-1.7zM298.8 285.4h1.6v1.6h-1.6zM282.8 311.4h1.6v1.6h-1.6zM230.0 312.8h1.9v1.9h-1.9zM244.5 314.6h1.9v1.9h-1.9zM260.8 310.0h1.7v1.7h-1.7zM296.7 294.8h1.7v1.7h-1.7zM286.6 287.2h2.0v2.0h-2.0zM255.8 297.1h2.2v2.2h-2.2zM274.1 302.5h1.5v1.5h-1.5zM266.8 296.2h1.8v1.8h-1.8zM314.5 301.4h2.1v2.1h-2.1zM218.8 289.8h1.6v1.6h-1.6zM225.2 295.3h2.1v2.1h-2.1zM275.8 282.6h1.5v1.5h-1.5zM240.3 298.6h1.7v1.7h-1.7zM296.9 309.4h2.1v2.1h-2.1zM328.7 290.7h1.4v1.4h-1.4zM299.8 305.9h1.8v1.8h-1.8zM243.5 304.8h1.6v1.6h-1.6zM266.1 283.2h1.6v1.6h-1.6zM276.1 300.8h1.9v1.9h-1.9zM316.8 299.7h1.7v1.7h-1.7zM309.8 288.6h1.5v1.5h-1.5zM316.1 298.9h2.2v2.2h-2.2zM258.5 290.3h1.8v1.8h-1.8zM237.4 289.9h2.1v2.1h-2.1zM280.9 284.8h1.7v1.7h-1.7zM277.9 313.8h1.5v1.5h-1.5zM225.4 311.9h1.5v1.5h-1.5zM216.3 296.1h2.2v2.2h-2.2zM228.1 304.5h2.0v2.0h-2.0zM243.8 293.2h1.8v1.8h-1.8zM233.1 288.5h1.5v1.5h-1.5zM255.5 282.0h1.9v1.9h-1.9zM287.7 310.9h1.6v1.6h-1.6zM321.0 289.6h1.5v1.5h-1.5zM290.2 303.8h2.0v2.0h-2.0zM258.5 293.0h1.4v1.4h-1.4zM273.5 307.7h2.2v2.2h-2.2zM309.9 307.2h1.6v1.6h-1.6zM247.4 281.5h1.7v1.7h-1.7zM322.8 295.5h1.7v1.7h-1.7zM239.3 307.1h1.6v1.6h-1.6zM273.4 279.7h2.3v2.3h-2.3zM294.9 302.1h1.7v1.7h-1.7zM241.5 308.6h1.7v1.7h-1.7zM257.9 300.4h2.1v2.1h-2.1zM272.3 304.9h1.5v1.5h-1.5zM262.1 282.6h1.8v1.8h-1.8zM277.0 301.6h1.8v1.8h-1.8zM262.9 283.2h1.8v1.8h-1.8zM285.5 289.2h1.7v1.7h-1.7zM240.8 287.4h2.2v2.2h-2.2zM302.7 298.8h1.9v1.9h-1.9zM330.5 289.4h1.6v1.6h-1.6zM274.3 278.5h1.5v1.5h-1.5zM273.8 304.6h2.3v2.3h-2.3zM273.6 302.4h2.0v2.0h-2.0zM304.1 294.8h1.8v1.8h-1.8zM292.3 312.7h2.1v2.1h-2.1zM328.1 302.9h2.3v2.3h-2.3zM282.4 299.7h1.4v1.4h-1.4zM307.3 292.5h1.9v1.9h-1.9zM318.9 293.7h1.6v1.6h-1.6zM259.1 292.1h1.6v1.6h-1.6zM290.1 306.5h1.8v1.8h-1.8zM287.7 294.9h1.6v1.6h-1.6zM318.7 308.9h1.9v1.9h-1.9zM330.5 299.4h2.1v2.1h-2.1zM211.8 301.9h2.3v2.3h-2.3zM292.2 303.2h2.0v2.0h-2.0zM293.5 284.5h2.3v2.3h-2.3zM251.5 297.2h1.6v1.6h-1.6zM277.3 299.7h1.8v1.8h-1.8zM298.9 303.0h2.2v2.2h-2.2zM237.9 294.2h1.6v1.6h-1.6zM267.2 294.8h1.7v1.7h-1.7zM228.2 285.2h1.7v1.7h-1.7zM316.3 307.7h1.6v1.6h-1.6zM323.0 300.8h1.7v1.7h-1.7zM279.3 281.3h1.5v1.5h-1.5zM318.0 309.5h1.4v1.4h-1.4zM267.0 306.0h1.5v1.5h-1.5zM218.5 290.0h2.2v2.2h-2.2zM221.4 285.6h1.4v1.4h-1.4zM257.4 306.1h2.3v2.3h-2.3zM221.9 309.6h1.8v1.8h-1.8zM217.8 307.5h2.2v2.2h-2.2zM304.5 312.7h1.9v1.9h-1.9zM223.0 311.2h1.6v1.6h-1.6zM289.1 279.3h2.2v2.2h-2.2zM295.1 301.5h1.5v1.5h-1.5zM286.1 315.6h1.8v1.8h-1.8zM268.0 284.9h1.9v1.9h-1.9zM281.5 310.8h2.1v2.1h-2.1zM242.9 282.2h2.1v2.1h-2.1zM268.9 285.1h2.2v2.2h-2.2zM261.6 283.0h1.8v1.8h-1.8zM264.8 295.3h2.0v2.0h-2.0zM284.6 312.8h1.8v1.8h-1.8zM252.0 299.1h1.4v1.4h-1.4zM253.6 292.6h1.9v1.9h-1.9zM313.7 283.7h2.3v2.3h-2.3zM266.8 304.5h1.5v1.5h-1.5zM241.1 279.2h2.2v2.2h-2.2zM262.1 308.9h1.6v1.6h-1.6zM261.3 302.4h1.6v1.6h-1.6zM225.3 293.3h1.7v1.7h-1.7zM302.4 298.4h1.7v1.7h-1.7zM247.5 288.4h1.5v1.5h-1.5zM254.6 307.3h2.1v2.1h-2.1zM280.9 285.6h1.7v1.7h-1.7zM222.5 302.2h2.2v2.2h-2.2zM300.3 283.5h1.6v1.6h-1.6zM309.6 303.5h1.8v1.8h-1.8zM221.1 309.7h2.1v2.1h-2.1zM303.7 298.7h1.6v1.6h-1.6zM260.3 290.6h2.1v2.1h-2.1zM263.3 293.0h1.5v1.5h-1.5zM313.5 288.6h2.1v2.1h-2.1zM235.0 299.5h1.4v1.4h-1.4zM243.2 304.6h2.2v2.2h-2.2zM300.0 280.0h2.3v2.3h-2.3zM267.4 298.3h1.5v1.5h-1.5zM257.7 299.1h2.0v2.0h-2.0zM293.4 289.4h2.0v2.0h-2.0zM310.9 311.8h1.9v1.9h-1.9zM219.8 283.2h1.5v1.5h-1.5zM306.4 280.9h2.1v2.1h-2.1zM236.4 280.5h2.0v2.0h-2.0zM249.0 284.2h1.9v1.9h-1.9zM268.0 282.1h1.8v1.8h-1.8zM256.6 296.6h1.7v1.7h-1.7zM292.6 315.1h1.7v1.7h-1.7zM265.7 285.9h2.1v2.1h-2.1zM304.1 285.2h1.4v1.4h-1.4zM220.9 287.8h2.1v2.1h-2.1zM330.5 300.9h2.2v2.2h-2.2zM249.4 300.8h2.1v2.1h-2.1zM271.1 314.8h2.1v2.1h-2.1zM266.3 306.1h1.6v1.6h-1.6zM263.1 303.8h1.5v1.5h-1.5zM220.6 290.3h2.0v2.0h-2.0zM240.4 311.3h2.0v2.0h-2.0zM289.8 314.3h1.7v1.7h-1.7zM260.2 308.8h1.7v1.7h-1.7zM217.5 294.4h1.5v1.5h-1.5zM242.4 300.4h1.8v1.8h-1.8zM316.4 286.0h2.0v2.0h-2.0zM292.7 309.1h1.8v1.8h-1.8zM296.8 314.4h2.1v2.1h-2.1zM285.0 288.7h2.1v2.1h-2.1zM241.6 294.9h1.9v1.9h-1.9zM315.1 294.8h1.8v1.8h-1.8zM210.6 302.0h2.0v2.0h-2.0zM271.7 289.4h1.8v1.8h-1.8zM230.0 298.6h2.1v2.1h-2.1zM281.2 287.1h2.1v2.1h-2.1zM306.6 305.2h2.0v2.0h-2.0zM311.9 292.0h1.5v1.5h-1.5zM220.0 305.3h1.5v1.5h-1.5zM296.3 299.7h2.1v2.1h-2.1zM302.4 300.3h1.8v1.8h-1.8zM319.8 288.1h2.3v2.3h-2.3zM275.9 303.1h1.9v1.9h-1.9zM260.3 316.0h1.6v1.6h-1.6zM214.1 300.0h1.4v1.4h-1.4zM287.2 287.8h1.8v1.8h-1.8zM244.0 294.4h2.3v2.3h-2.3zM233.6 301.9h1.6v1.6h-1.6zM241.4 285.4h1.9v1.9h-1.9zM229.0 284.5h2.2v2.2h-2.2zM243.2 287.1h2.1v2.1h-2.1zM290.7 280.5h1.9v1.9h-1.9zM245.5 292.2h2.0v2.0h-2.0zM310.8 304.2h1.6v1.6h-1.6zM307.7 290.1h1.6v1.6h-1.6zM313.2 291.0h1.8v1.8h-1.8zM217.1 299.3h1.4v1.4h-1.4zM220.3 285.9h1.8v1.8h-1.8zM319.1 295.5h1.9v1.9h-1.9zM241.1 311.6h1.8v1.8h-1.8zM226.0 287.4h2.2v2.2h-2.2zM294.8 306.6h1.7v1.7h-1.7zM282.2 315.3h2.0v2.0h-2.0zM322.9 303.5h1.6v1.6h-1.6zM225.2 294.8h1.9v1.9h-1.9zM294.9 298.0h2.0v2.0h-2.0zM248.2 300.3h1.8v1.8h-1.8zM203.8 300.8h2.3v2.3h-2.3zM282.6 311.2h1.7v1.7h-1.7zM310.6 292.0h2.0v2.0h-2.0zM220.0 308.4h1.7v1.7h-1.7zM294.2 311.0h2.2v2.2h-2.2zM282.4 302.6h1.7v1.7h-1.7zM267.2 292.7h2.3v2.3h-2.3zM294.3 308.2h2.0v2.0h-2.0zM317.3 302.9h1.6v1.6h-1.6zM327.8 297.7h2.1v2.1h-2.1zM294.9 298.6h1.5v1.5h-1.5zM328.1 292.9h1.7v1.7h-1.7zM223.7 282.9h1.7v1.7h-1.7zM209.8 305.4h2.3v2.3h-2.3zM270.9 315.8h2.2v2.2h-2.2zM256.4 301.3h2.2v2.2h-2.2zM219.6 296.8h1.5v1.5h-1.5zM224.2 285.6h1.8v1.8h-1.8zM269.2 307.4h1.6v1.6h-1.6zM223.3 297.6h1.6v1.6h-1.6zM235.9 309.4h1.6v1.6h-1.6zM276.0 310.9h1.7v1.7h-1.7zM323.6 303.1h1.6v1.6h-1.6zM208.9 299.5h2.1v2.1h-2.1zM331.1 298.3h2.3v2.3h-2.3zM252.8 278.7h2.1v2.1h-2.1zM247.1 284.1h1.5v1.5h-1.5zM282.4 304.1h1.5v1.5h-1.5zM253.9 290.2h1.8v1.8h-1.8zM279.7 294.1h1.9v1.9h-1.9zM257.3 290.8h2.1v2.1h-2.1zM284.9 286.5h1.6v1.6h-1.6zM302.1 305.4h2.3v2.3h-2.3zM264.4 311.9h1.5v1.5h-1.5zM319.7 308.7h2.0v2.0h-2.0zM315.9 294.3h2.2v2.2h-2.2zM212.3 293.6h1.7v1.7h-1.7zM266.0 304.4h1.5v1.5h-1.5zM306.6 301.0h1.5v1.5h-1.5zM323.6 293.6h2.1v2.1h-2.1zM240.1 293.0h1.9v1.9h-1.9zM280.9 298.0h2.2v2.2h-2.2zM288.5 283.5h2.2v2.2h-2.2zM243.3 306.1h1.8v1.8h-1.8zM322.3 300.9h1.5v1.5h-1.5zM287.2 314.6h2.2v2.2h-2.2zM242.9 289.9h1.9v1.9h-1.9zM276.9 314.5h1.8v1.8h-1.8zM266.8 290.9h1.5v1.5h-1.5zM314.0 298.7h2.1v2.1h-2.1zM291.2 314.5h1.8v1.8h-1.8zM296.5 293.1h1.5v1.5h-1.5zM249.6 305.5h1.7v1.7h-1.7zM247.8 288.1h1.7v1.7h-1.7zM310.0 298.2h2.2v2.2h-2.2zM300.7 299.3h1.4v1.4h-1.4zM236.1 298.7h1.8v1.8h-1.8zM250.3 313.0h1.6v1.6h-1.6zM310.6 283.3h2.3v2.3h-2.3zM322.8 308.8h1.9v1.9h-1.9zM271.6 284.3h1.7v1.7h-1.7zM208.8 305.5h1.5v1.5h-1.5zM307.2 290.8h1.8v1.8h-1.8zM302.0 282.6h1.6v1.6h-1.6zM237.6 299.0h2.2v2.2h-2.2zM321.4 300.7h1.7v1.7h-1.7zM286.2 297.4h2.1v2.1h-2.1zM307.8 290.0h2.2v2.2h-2.2zM218.0 304.5h2.0v2.0h-2.0zM298.6 308.8h1.5v1.5h-1.5zM323.5 307.2h1.9v1.9h-1.9zM323.4 290.8h1.6v1.6h-1.6zM238.9 282.6h2.1v2.1h-2.1zM221.7 301.5h1.8v1.8h-1.8zM277.9 293.7h1.4v1.4h-1.4zM264.0 313.5h2.2v2.2h-2.2zM267.6 295.9h2.2v2.2h-2.2zM265.0 279.4h1.5v1.5h-1.5zM253.2 300.6h1.4v1.4h-1.4zM230.0 281.6h1.6v1.6h-1.6zM291.2 309.6h2.0v2.0h-2.0zM247.9 309.3h1.9v1.9h-1.9zM231.0 294.7h1.7v1.7h-1.7zM281.9 291.9h1.4v1.4h-1.4zM236.1 281.5h1.5v1.5h-1.5zM303.4 294.6h2.1v2.1h-2.1zM246.0 280.6h1.7v1.7h-1.7zM248.8 295.0h1.8v1.8h-1.8zM251.9 289.2h1.7v1.7h-1.7zM278.6 285.0h1.5v1.5h-1.5zM300.1 293.4h1.8v1.8h-1.8zM225.9 312.6h1.7v1.7h-1.7zM212.5 294.0h1.6v1.6h-1.6zM243.2 300.4h1.6v1.6h-1.6zM278.0 287.6h1.6v1.6h-1.6zM294.2 302.9h1.6v1.6h-1.6zM284.4 295.6h1.4v1.4h-1.4zM249.5 308.5h2.3v2.3h-2.3zM214.7 287.4h1.9v1.9h-1.9zM304.9 280.5h2.1v2.1h-2.1zM283.5 315.7h2.1v2.1h-2.1zM292.1 290.5h1.8v1.8h-1.8zM289.7 291.9h2.0v2.0h-2.0zM303.4 283.1h1.8v1.8h-1.8zM275.2 282.7h1.7v1.7h-1.7zM309.6 296.6h1.9v1.9h-1.9zM314.2 286.7h1.4v1.4h-1.4z" fill="#9a99a9"/><path d="M296.2 279.9h1.6v1.6h-1.6zM213.8 287.1h1.5v1.5h-1.5zM225.8 305.9h1.5v1.5h-1.5zM274.4 305.9h1.6v1.6h-1.6zM228.2 295.2h1.8v1.8h-1.8zM276.6 305.5h1.5v1.5h-1.5zM234.5 293.0h2.0v2.0h-2.0zM297.7 285.8h2.0v2.0h-2.0zM246.2 310.7h2.3v2.3h-2.3zM217.3 294.5h2.1v2.1h-2.1zM251.1 280.7h2.0v2.0h-2.0zM244.4 310.2h2.0v2.0h-2.0zM243.9 293.6h1.8v1.8h-1.8zM286.0 288.7h1.5v1.5h-1.5zM221.2 295.8h1.4v1.4h-1.4zM230.9 290.4h2.1v2.1h-2.1zM205.4 298.3h2.3v2.3h-2.3zM306.4 291.3h1.8v1.8h-1.8zM215.3 286.4h2.0v2.0h-2.0zM301.4 290.6h2.0v2.0h-2.0zM203.4 295.2h1.9v1.9h-1.9zM310.5 299.0h1.8v1.8h-1.8zM274.8 293.9h1.6v1.6h-1.6zM267.7 283.7h1.9v1.9h-1.9zM275.9 298.7h1.8v1.8h-1.8zM301.2 304.7h2.1v2.1h-2.1zM236.2 310.3h1.6v1.6h-1.6zM285.9 312.3h2.0v2.0h-2.0zM230.3 286.1h2.2v2.2h-2.2zM213.9 301.4h1.5v1.5h-1.5zM238.3 284.8h2.0v2.0h-2.0zM223.8 301.5h2.0v2.0h-2.0zM290.5 296.6h1.8v1.8h-1.8zM302.8 282.4h1.8v1.8h-1.8zM255.5 301.1h1.4v1.4h-1.4zM231.1 283.4h1.6v1.6h-1.6zM255.4 289.9h1.7v1.7h-1.7zM212.2 295.0h1.7v1.7h-1.7zM247.2 300.4h1.5v1.5h-1.5zM292.4 287.1h1.8v1.8h-1.8zM301.9 295.1h1.9v1.9h-1.9zM309.7 295.7h2.2v2.2h-2.2zM315.3 288.8h2.1v2.1h-2.1zM289.0 308.3h1.5v1.5h-1.5zM211.4 307.6h1.8v1.8h-1.8zM317.5 290.9h1.5v1.5h-1.5zM320.3 306.1h2.2v2.2h-2.2zM282.6 309.3h1.9v1.9h-1.9zM317.7 291.2h2.3v2.3h-2.3zM212.0 307.7h1.7v1.7h-1.7zM214.5 303.8h2.2v2.2h-2.2zM238.6 287.7h1.5v1.5h-1.5zM224.1 290.5h1.9v1.9h-1.9zM246.0 303.2h1.9v1.9h-1.9zM226.0 312.8h1.7v1.7h-1.7zM239.1 282.6h2.0v2.0h-2.0zM241.3 288.9h2.0v2.0h-2.0zM294.7 280.6h1.5v1.5h-1.5zM243.9 282.3h2.2v2.2h-2.2zM288.1 293.8h2.3v2.3h-2.3zM327.2 303.5h2.1v2.1h-2.1zM253.4 298.4h1.7v1.7h-1.7zM264.9 309.8h2.2v2.2h-2.2zM228.3 297.9h2.1v2.1h-2.1zM296.9 302.1h2.1v2.1h-2.1zM246.0 292.8h1.7v1.7h-1.7zM217.0 289.5h2.3v2.3h-2.3zM285.0 308.7h1.7v1.7h-1.7zM245.5 314.2h1.6v1.6h-1.6zM281.8 301.3h1.9v1.9h-1.9zM270.7 294.1h1.5v1.5h-1.5zM234.3 308.8h1.9v1.9h-1.9zM230.5 286.1h1.5v1.5h-1.5zM270.9 288.5h2.2v2.2h-2.2zM259.0 283.3h1.5v1.5h-1.5zM294.1 310.2h2.0v2.0h-2.0zM271.3 297.3h2.1v2.1h-2.1zM279.2 281.0h1.8v1.8h-1.8zM264.3 288.6h2.2v2.2h-2.2zM321.4 297.7h2.0v2.0h-2.0zM250.0 297.5h2.0v2.0h-2.0zM269.5 293.0h1.6v1.6h-1.6zM231.9 310.1h2.1v2.1h-2.1zM287.5 311.8h1.8v1.8h-1.8zM278.7 310.1h1.5v1.5h-1.5zM254.4 293.3h1.7v1.7h-1.7zM331.5 294.8h2.1v2.1h-2.1zM311.6 297.8h1.5v1.5h-1.5zM302.0 304.3h1.7v1.7h-1.7zM288.0 294.2h1.7v1.7h-1.7zM243.7 308.1h1.7v1.7h-1.7zM269.2 311.1h1.7v1.7h-1.7zM286.5 293.2h2.3v2.3h-2.3zM294.8 291.3h1.5v1.5h-1.5zM280.6 284.3h2.1v2.1h-2.1zM241.4 305.7h1.9v1.9h-1.9zM300.1 300.6h1.6v1.6h-1.6zM268.4 285.8h2.2v2.2h-2.2zM227.0 293.1h2.3v2.3h-2.3zM257.5 279.9h1.6v1.6h-1.6zM277.6 315.2h2.0v2.0h-2.0zM235.8 291.1h2.0v2.0h-2.0zM215.0 301.0h2.0v2.0h-2.0zM247.9 309.4h2.3v2.3h-2.3zM279.6 306.0h1.5v1.5h-1.5zM282.3 311.6h1.9v1.9h-1.9zM294.9 290.5h1.5v1.5h-1.5zM234.3 307.7h2.1v2.1h-2.1zM227.7 284.7h1.9v1.9h-1.9zM232.3 286.3h1.7v1.7h-1.7zM327.8 292.7h1.9v1.9h-1.9zM281.6 298.3h2.3v2.3h-2.3zM216.0 305.7h1.8v1.8h-1.8zM243.4 300.2h1.9v1.9h-1.9zM334.8 295.9h2.1v2.1h-2.1zM232.4 307.3h2.1v2.1h-2.1zM311.3 284.9h2.0v2.0h-2.0zM305.3 302.7h1.9v1.9h-1.9zM265.9 286.7h2.2v2.2h-2.2zM289.6 304.3h1.7v1.7h-1.7zM252.1 299.3h1.6v1.6h-1.6zM224.5 286.3h1.8v1.8h-1.8zM240.4 309.4h2.2v2.2h-2.2zM265.8 291.3h2.2v2.2h-2.2zM267.7 315.3h2.2v2.2h-2.2zM238.7 287.1h1.8v1.8h-1.8zM271.2 305.3h2.1v2.1h-2.1zM266.0 302.0h1.8v1.8h-1.8zM300.3 311.9h1.7v1.7h-1.7zM233.3 290.2h1.7v1.7h-1.7zM206.7 303.1h2.2v2.2h-2.2zM265.9 315.1h1.9v1.9h-1.9zM272.3 302.5h1.7v1.7h-1.7zM274.3 308.7h1.8v1.8h-1.8zM266.1 278.5h1.8v1.8h-1.8zM224.7 306.1h1.8v1.8h-1.8zM323.1 308.7h2.0v2.0h-2.0zM223.0 296.9h1.7v1.7h-1.7zM265.6 304.1h1.7v1.7h-1.7zM268.7 299.0h2.0v2.0h-2.0zM276.8 313.8h1.8v1.8h-1.8zM225.1 285.0h1.8v1.8h-1.8zM281.5 297.5h2.3v2.3h-2.3zM291.8 294.2h1.7v1.7h-1.7zM210.3 303.2h1.4v1.4h-1.4zM233.5 286.8h2.0v2.0h-2.0zM256.4 279.6h2.1v2.1h-2.1zM271.4 302.2h1.4v1.4h-1.4zM270.7 314.2h1.7v1.7h-1.7zM257.6 306.1h2.2v2.2h-2.2zM293.4 308.3h2.2v2.2h-2.2zM285.7 310.1h1.9v1.9h-1.9zM209.1 297.8h2.0v2.0h-2.0zM279.1 289.8h2.2v2.2h-2.2zM285.4 297.7h1.6v1.6h-1.6zM245.0 283.4h2.0v2.0h-2.0zM235.3 280.7h2.0v2.0h-2.0zM313.4 304.6h2.0v2.0h-2.0zM216.5 309.0h2.1v2.1h-2.1zM333.5 293.6h1.5v1.5h-1.5zM234.2 304.8h1.8v1.8h-1.8zM269.3 293.7h1.9v1.9h-1.9zM213.2 302.0h2.1v2.1h-2.1zM315.6 288.8h1.5v1.5h-1.5zM266.9 308.3h2.2v2.2h-2.2zM216.9 295.1h1.6v1.6h-1.6zM326.5 302.2h2.2v2.2h-2.2zM259.3 312.3h2.1v2.1h-2.1zM328.4 301.8h2.1v2.1h-2.1zM218.8 298.4h1.5v1.5h-1.5zM291.5 279.6h2.0v2.0h-2.0zM292.3 290.3h2.1v2.1h-2.1zM215.9 305.9h2.2v2.2h-2.2zM247.1 279.4h1.8v1.8h-1.8zM301.5 286.7h1.7v1.7h-1.7zM293.1 288.8h1.5v1.5h-1.5zM263.3 280.9h2.2v2.2h-2.2zM295.1 310.1h1.8v1.8h-1.8zM220.6 308.2h1.6v1.6h-1.6zM208.7 290.3h1.5v1.5h-1.5zM227.6 299.7h1.4v1.4h-1.4zM246.8 304.9h1.8v1.8h-1.8zM250.6 283.5h2.2v2.2h-2.2zM294.0 287.5h1.5v1.5h-1.5zM271.5 292.3h1.8v1.8h-1.8zM325.0 296.4h1.7v1.7h-1.7zM231.2 297.1h2.0v2.0h-2.0zM208.6 290.7h1.5v1.5h-1.5zM219.2 309.8h2.1v2.1h-2.1zM290.6 296.8h1.6v1.6h-1.6zM259.9 312.9h1.7v1.7h-1.7zM268.3 314.9h2.0v2.0h-2.0zM320.9 291.2h1.5v1.5h-1.5zM243.5 291.1h1.4v1.4h-1.4zM304.0 290.9h2.0v2.0h-2.0zM275.8 289.6h2.3v2.3h-2.3zM314.7 304.0h2.1v2.1h-2.1zM228.1 310.7h2.1v2.1h-2.1zM284.9 289.6h1.8v1.8h-1.8zM330.8 299.3h1.9v1.9h-1.9zM237.7 289.8h2.2v2.2h-2.2zM315.5 284.1h2.1v2.1h-2.1zM260.6 294.5h1.4v1.4h-1.4zM268.4 302.0h1.9v1.9h-1.9zM300.3 300.7h1.9v1.9h-1.9zM314.4 303.2h1.5v1.5h-1.5zM232.7 287.9h1.7v1.7h-1.7zM214.2 292.1h2.1v2.1h-2.1zM263.5 310.3h2.1v2.1h-2.1zM229.3 289.7h1.4v1.4h-1.4zM210.9 292.2h2.0v2.0h-2.0zM209.5 303.0h1.5v1.5h-1.5zM273.5 300.8h1.7v1.7h-1.7zM280.8 297.8h1.8v1.8h-1.8zM260.6 293.7h2.2v2.2h-2.2zM222.3 288.0h1.5v1.5h-1.5zM256.8 284.5h2.0v2.0h-2.0zM254.6 290.3h1.8v1.8h-1.8zM235.5 299.0h2.1v2.1h-2.1zM203.1 295.6h2.1v2.1h-2.1zM329.4 290.1h2.0v2.0h-2.0zM312.8 303.5h2.0v2.0h-2.0zM292.6 299.4h1.7v1.7h-1.7zM229.4 312.5h2.1v2.1h-2.1zM308.1 285.4h1.7v1.7h-1.7zM229.6 285.6h1.7v1.7h-1.7zM256.3 307.6h1.9v1.9h-1.9zM304.0 304.0h1.5v1.5h-1.5zM304.8 307.0h2.2v2.2h-2.2zM225.3 294.0h1.5v1.5h-1.5zM247.3 301.2h1.9v1.9h-1.9zM233.6 301.3h2.2v2.2h-2.2zM281.9 313.9h2.1v2.1h-2.1zM298.1 301.2h1.7v1.7h-1.7zM234.2 280.9h2.1v2.1h-2.1zM240.7 295.0h2.0v2.0h-2.0zM256.8 279.4h2.2v2.2h-2.2zM259.0 309.7h1.6v1.6h-1.6zM330.9 303.2h1.7v1.7h-1.7zM302.0 313.5h1.8v1.8h-1.8zM225.1 289.3h1.7v1.7h-1.7zM273.6 310.0h2.3v2.3h-2.3zM295.8 292.2h2.3v2.3h-2.3zM303.1 292.9h1.9v1.9h-1.9zM293.8 314.3h2.0v2.0h-2.0zM259.1 314.2h1.4v1.4h-1.4zM275.4 280.5h2.0v2.0h-2.0zM204.2 292.2h2.3v2.3h-2.3zM270.9 314.3h1.8v1.8h-1.8zM274.4 307.4h1.5v1.5h-1.5zM264.2 301.6h1.8v1.8h-1.8zM269.2 313.0h2.2v2.2h-2.2zM243.3 288.4h1.7v1.7h-1.7zM250.8 307.7h1.9v1.9h-1.9zM222.4 311.5h2.2v2.2h-2.2zM298.3 293.5h2.0v2.0h-2.0zM306.0 282.0h2.1v2.1h-2.1zM273.4 298.2h2.1v2.1h-2.1zM313.8 311.4h1.4v1.4h-1.4zM301.1 306.4h2.0v2.0h-2.0zM309.6 283.7h1.9v1.9h-1.9zM248.2 308.0h1.7v1.7h-1.7zM306.4 281.6h1.5v1.5h-1.5zM252.4 304.0h1.9v1.9h-1.9zM304.6 285.7h1.7v1.7h-1.7zM312.5 281.4h2.2v2.2h-2.2zM258.7 299.0h1.5v1.5h-1.5zM261.9 300.4h1.4v1.4h-1.4zM258.6 286.6h1.8v1.8h-1.8zM306.5 310.1h2.0v2.0h-2.0zM296.7 313.2h1.5v1.5h-1.5zM250.2 287.0h2.2v2.2h-2.2zM263.9 300.9h1.5v1.5h-1.5zM213.2 304.2h1.7v1.7h-1.7zM328.9 291.3h1.9v1.9h-1.9zM207.5 297.5h1.9v1.9h-1.9zM312.0 302.4h2.3v2.3h-2.3zM320.8 294.0h2.1v2.1h-2.1zM246.2 292.6h1.9v1.9h-1.9zM225.4 285.2h2.2v2.2h-2.2zM245.7 306.0h1.6v1.6h-1.6zM288.7 305.9h1.8v1.8h-1.8zM216.3 305.8h2.2v2.2h-2.2zM230.3 308.0h1.7v1.7h-1.7zM267.5 292.1h1.4v1.4h-1.4zM263.0 314.7h2.1v2.1h-2.1zM285.5 303.4h1.7v1.7h-1.7zM259.0 315.0h1.5v1.5h-1.5zM277.9 301.9h1.9v1.9h-1.9zM219.8 298.7h1.9v1.9h-1.9zM289.0 290.9h1.5v1.5h-1.5zM292.4 310.6h1.7v1.7h-1.7zM301.0 298.9h1.8v1.8h-1.8zM250.3 310.6h1.9v1.9h-1.9zM306.8 288.5h2.1v2.1h-2.1zM255.0 312.8h2.0v2.0h-2.0zM305.6 298.2h1.5v1.5h-1.5zM260.7 311.9h2.3v2.3h-2.3zM249.3 303.1h1.6v1.6h-1.6zM241.7 302.9h1.9v1.9h-1.9zM233.6 306.4h1.6v1.6h-1.6zM254.0 309.7h1.5v1.5h-1.5zM283.4 296.7h2.2v2.2h-2.2zM227.6 294.7h1.4v1.4h-1.4zM249.7 305.3h1.9v1.9h-1.9zM288.0 311.5h1.5v1.5h-1.5zM221.4 288.1h1.7v1.7h-1.7zM279.6 310.2h1.8v1.8h-1.8zM216.4 289.1h1.5v1.5h-1.5zM299.1 290.5h1.9v1.9h-1.9zM287.0 278.5h1.5v1.5h-1.5zM267.1 303.2h1.6v1.6h-1.6zM302.5 288.8h2.3v2.3h-2.3zM290.5 282.5h1.8v1.8h-1.8zM306.3 280.3h2.1v2.1h-2.1zM323.4 288.2h2.1v2.1h-2.1zM228.8 301.2h1.7v1.7h-1.7zM238.0 303.0h1.8v1.8h-1.8zM244.3 291.1h1.5v1.5h-1.5zM302.7 308.3h1.9v1.9h-1.9zM292.3 297.9h2.0v2.0h-2.0zM227.8 304.4h1.9v1.9h-1.9zM211.3 296.0h1.5v1.5h-1.5zM308.1 300.3h2.1v2.1h-2.1zM270.5 294.7h2.0v2.0h-2.0zM269.1 282.5h1.9v1.9h-1.9zM261.7 298.3h1.4v1.4h-1.4zM226.4 289.2h2.0v2.0h-2.0zM227.6 283.3h1.9v1.9h-1.9zM255.9 309.9h1.6v1.6h-1.6zM314.7 292.3h1.8v1.8h-1.8zM232.2 301.1h2.1v2.1h-2.1zM317.1 308.8h1.4v1.4h-1.4zM329.7 293.2h2.1v2.1h-2.1zM262.5 292.3h1.8v1.8h-1.8zM240.3 282.7h1.8v1.8h-1.8zM320.6 304.3h1.6v1.6h-1.6zM312.2 300.4h2.0v2.0h-2.0zM254.6 313.6h1.4v1.4h-1.4zM330.8 302.0h1.9v1.9h-1.9zM207.1 302.0h1.6v1.6h-1.6zM258.4 300.9h1.7v1.7h-1.7zM278.4 296.2h1.5v1.5h-1.5zM317.2 310.5h1.5v1.5h-1.5zM269.1 282.3h1.9v1.9h-1.9zM206.1 296.2h2.1v2.1h-2.1zM255.5 309.2h2.1v2.1h-2.1zM268.1 287.5h1.6v1.6h-1.6zM281.7 307.2h1.5v1.5h-1.5zM232.3 292.2h1.7v1.7h-1.7zM286.8 296.2h1.8v1.8h-1.8zM301.4 304.6h1.5v1.5h-1.5zM256.8 301.7h1.6v1.6h-1.6zM223.7 310.6h1.7v1.7h-1.7zM248.4 290.0h1.6v1.6h-1.6zM305.7 308.0h2.0v2.0h-2.0zM235.9 288.5h1.9v1.9h-1.9zM245.5 298.4h1.5v1.5h-1.5zM243.2 283.7h1.7v1.7h-1.7zM230.7 305.4h1.7v1.7h-1.7zM230.7 289.6h1.8v1.8h-1.8zM321.6 294.6h2.2v2.2h-2.2zM261.6 306.2h2.1v2.1h-2.1zM262.2 293.4h1.6v1.6h-1.6zM267.5 300.9h2.1v2.1h-2.1zM328.6 288.4h2.0v2.0h-2.0zM308.9 310.9h2.0v2.0h-2.0z" fill="#898899"/><path d="M244.8 288.4h1.6v1.6h-1.6zM212.9 286.3h1.6v1.6h-1.6zM310.9 289.4h2.0v2.0h-2.0zM256.9 301.8h1.5v1.5h-1.5zM236.9 305.2h1.4v1.4h-1.4zM284.9 301.1h2.1v2.1h-2.1zM246.7 304.5h1.7v1.7h-1.7zM275.8 281.4h2.3v2.3h-2.3zM318.1 301.7h1.6v1.6h-1.6zM274.3 315.0h1.9v1.9h-1.9zM331.6 296.9h1.8v1.8h-1.8zM275.8 313.4h1.8v1.8h-1.8zM278.8 298.3h2.1v2.1h-2.1zM235.8 291.3h1.6v1.6h-1.6zM247.2 314.7h1.4v1.4h-1.4zM225.4 305.5h1.8v1.8h-1.8zM266.0 280.0h1.5v1.5h-1.5zM322.0 299.7h1.4v1.4h-1.4zM258.2 314.8h1.5v1.5h-1.5zM265.5 292.8h1.5v1.5h-1.5zM250.5 298.8h1.8v1.8h-1.8zM289.6 288.1h2.1v2.1h-2.1zM229.6 282.9h2.0v2.0h-2.0zM280.5 306.7h2.2v2.2h-2.2zM246.7 287.0h2.1v2.1h-2.1zM223.6 290.5h1.4v1.4h-1.4zM329.7 304.1h1.7v1.7h-1.7zM280.6 304.9h1.5v1.5h-1.5zM251.6 301.3h1.5v1.5h-1.5zM227.7 297.1h1.8v1.8h-1.8zM261.4 313.4h2.2v2.2h-2.2zM246.6 290.8h2.0v2.0h-2.0zM297.5 298.1h1.4v1.4h-1.4zM264.4 282.9h2.1v2.1h-2.1zM234.4 303.4h1.5v1.5h-1.5zM265.8 285.3h1.7v1.7h-1.7zM311.0 296.4h1.9v1.9h-1.9zM318.4 283.7h1.9v1.9h-1.9zM287.6 298.0h1.8v1.8h-1.8zM249.8 295.6h1.5v1.5h-1.5zM287.9 300.4h1.6v1.6h-1.6zM302.9 281.5h1.8v1.8h-1.8zM224.7 288.5h1.8v1.8h-1.8zM250.1 289.1h1.9v1.9h-1.9zM256.1 300.7h1.5v1.5h-1.5zM293.0 314.5h2.2v2.2h-2.2zM237.5 281.5h1.7v1.7h-1.7zM218.6 305.4h1.8v1.8h-1.8zM318.0 309.7h2.1v2.1h-2.1zM276.0 289.5h2.1v2.1h-2.1zM268.9 294.2h1.8v1.8h-1.8zM262.9 313.7h2.0v2.0h-2.0zM268.4 288.3h1.8v1.8h-1.8zM252.7 300.2h1.5v1.5h-1.5zM255.8 308.8h1.9v1.9h-1.9zM239.3 302.0h1.7v1.7h-1.7zM215.0 300.4h2.1v2.1h-2.1zM253.3 310.4h2.1v2.1h-2.1zM269.2 305.6h1.8v1.8h-1.8zM293.9 304.5h2.0v2.0h-2.0zM284.0 281.2h1.8v1.8h-1.8zM269.4 288.6h1.8v1.8h-1.8zM321.1 295.0h2.0v2.0h-2.0zM297.2 281.2h1.4v1.4h-1.4zM271.2 305.7h2.0v2.0h-2.0zM214.2 305.7h2.2v2.2h-2.2zM284.2 290.2h2.3v2.3h-2.3zM304.9 303.2h1.6v1.6h-1.6zM287.8 310.4h2.3v2.3h-2.3zM237.5 308.1h1.5v1.5h-1.5zM290.5 295.4h1.6v1.6h-1.6zM265.3 303.1h1.9v1.9h-1.9zM224.3 281.9h1.5v1.5h-1.5zM303.7 301.0h2.2v2.2h-2.2zM221.4 298.8h2.1v2.1h-2.1zM314.7 286.6h1.5v1.5h-1.5zM220.7 284.9h2.1v2.1h-2.1zM261.1 311.8h1.7v1.7h-1.7zM244.7 313.2h1.8v1.8h-1.8zM225.0 285.9h2.0v2.0h-2.0zM242.3 294.7h1.7v1.7h-1.7zM276.8 286.6h2.0v2.0h-2.0zM215.6 292.2h1.6v1.6h-1.6zM280.5 314.0h1.9v1.9h-1.9zM247.4 302.9h1.5v1.5h-1.5zM265.1 304.1h2.0v2.0h-2.0zM239.6 303.5h1.9v1.9h-1.9zM276.6 296.8h1.6v1.6h-1.6zM318.3 284.5h2.2v2.2h-2.2zM226.4 312.4h1.4v1.4h-1.4zM211.8 294.6h1.7v1.7h-1.7zM287.6 288.6h1.7v1.7h-1.7zM310.7 281.7h1.6v1.6h-1.6zM258.0 284.2h1.6v1.6h-1.6zM317.6 297.3h1.8v1.8h-1.8z" fill="#5d5c65"/><path d="M318.7 290.0h2.0v2.0h-2.0zM217.4 301.8h2.1v2.1h-2.1zM309.8 285.5h1.5v1.5h-1.5zM238.1 307.9h1.8v1.8h-1.8zM245.0 306.8h1.5v1.5h-1.5zM259.8 300.0h2.0v2.0h-2.0zM302.4 307.5h1.5v1.5h-1.5zM244.0 303.6h2.3v2.3h-2.3zM286.9 309.5h2.0v2.0h-2.0zM279.8 296.0h1.9v1.9h-1.9zM318.3 299.9h1.8v1.8h-1.8zM327.2 296.1h2.1v2.1h-2.1zM233.5 304.8h2.0v2.0h-2.0zM318.5 294.8h1.9v1.9h-1.9zM322.2 304.0h1.5v1.5h-1.5zM248.6 300.3h2.0v2.0h-2.0zM311.9 312.7h1.7v1.7h-1.7zM257.8 281.8h1.8v1.8h-1.8zM306.5 311.0h1.9v1.9h-1.9zM279.0 299.8h2.0v2.0h-2.0zM210.6 297.4h1.7v1.7h-1.7zM316.0 301.4h1.9v1.9h-1.9zM276.1 308.0h2.2v2.2h-2.2zM224.1 292.3h1.7v1.7h-1.7zM293.5 298.0h2.0v2.0h-2.0zM309.9 284.4h1.8v1.8h-1.8zM260.9 314.2h1.6v1.6h-1.6zM315.5 295.1h2.2v2.2h-2.2zM252.1 299.5h1.7v1.7h-1.7zM292.7 282.4h2.3v2.3h-2.3zM221.2 290.7h1.8v1.8h-1.8zM273.4 302.5h1.4v1.4h-1.4zM309.8 295.3h1.9v1.9h-1.9zM298.6 282.2h2.1v2.1h-2.1zM237.5 313.6h1.9v1.9h-1.9zM267.6 291.4h2.2v2.2h-2.2zM227.8 295.1h1.9v1.9h-1.9zM243.0 297.0h1.5v1.5h-1.5zM234.9 292.2h2.1v2.1h-2.1zM292.9 298.8h2.3v2.3h-2.3zM255.6 306.5h2.3v2.3h-2.3zM318.3 285.3h1.7v1.7h-1.7zM267.8 283.5h1.7v1.7h-1.7zM269.7 296.8h2.0v2.0h-2.0zM262.3 291.2h2.1v2.1h-2.1zM267.8 300.1h1.6v1.6h-1.6zM252.3 312.6h1.5v1.5h-1.5zM273.0 278.3h2.0v2.0h-2.0zM298.6 302.1h1.5v1.5h-1.5zM229.9 308.8h1.9v1.9h-1.9zM303.7 287.6h1.4v1.4h-1.4zM312.8 290.9h1.4v1.4h-1.4zM225.1 299.7h2.1v2.1h-2.1zM284.9 287.5h1.7v1.7h-1.7zM329.7 292.1h2.2v2.2h-2.2zM251.9 295.1h1.6v1.6h-1.6zM313.1 310.0h1.6v1.6h-1.6zM288.6 303.9h1.6v1.6h-1.6zM289.3 278.7h2.0v2.0h-2.0zM290.7 284.6h1.7v1.7h-1.7zM251.2 280.3h1.6v1.6h-1.6zM283.5 285.0h2.2v2.2h-2.2zM266.4 299.7h2.0v2.0h-2.0zM237.2 292.8h2.0v2.0h-2.0zM265.8 298.5h1.5v1.5h-1.5zM301.9 312.5h1.7v1.7h-1.7zM220.6 305.8h2.2v2.2h-2.2zM270.0 279.2h1.9v1.9h-1.9zM322.9 291.8h1.8v1.8h-1.8zM290.6 289.0h1.5v1.5h-1.5zM325.9 300.0h1.6v1.6h-1.6zM266.2 298.6h1.9v1.9h-1.9zM250.8 300.2h2.3v2.3h-2.3zM319.3 299.1h1.4v1.4h-1.4zM252.4 293.7h1.9v1.9h-1.9zM304.3 287.4h2.1v2.1h-2.1zM245.8 292.1h2.1v2.1h-2.1zM234.0 309.1h1.5v1.5h-1.5zM269.8 286.6h1.7v1.7h-1.7zM304.2 311.6h1.8v1.8h-1.8zM255.5 289.5h2.1v2.1h-2.1zM281.1 305.3h1.6v1.6h-1.6zM298.1 282.9h1.5v1.5h-1.5zM258.3 289.7h2.1v2.1h-2.1zM292.3 283.0h2.1v2.1h-2.1zM294.0 300.8h1.5v1.5h-1.5zM228.6 288.7h1.7v1.7h-1.7zM290.7 307.9h2.2v2.2h-2.2zM207.1 296.2h1.7v1.7h-1.7zM288.8 308.2h1.9v1.9h-1.9zM278.8 296.5h1.9v1.9h-1.9zM323.4 289.4h2.2v2.2h-2.2zM270.6 295.8h2.1v2.1h-2.1zM321.5 304.6h1.6v1.6h-1.6zM271.1 313.8h1.8v1.8h-1.8zM273.8 314.8h1.5v1.5h-1.5zM243.5 298.2h2.2v2.2h-2.2zM308.4 286.3h2.1v2.1h-2.1zM257.9 304.5h1.9v1.9h-1.9zM214.7 302.7h2.2v2.2h-2.2zM266.2 308.3h2.1v2.1h-2.1zM256.6 308.1h1.7v1.7h-1.7zM274.6 283.2h1.7v1.7h-1.7zM233.7 314.0h2.0v2.0h-2.0zM221.6 299.1h1.7v1.7h-1.7zM241.0 308.5h2.3v2.3h-2.3zM313.2 289.6h1.9v1.9h-1.9zM276.0 307.0h1.5v1.5h-1.5zM282.1 289.7h2.3v2.3h-2.3zM265.9 310.5h1.9v1.9h-1.9zM229.4 293.3h2.0v2.0h-2.0zM223.0 304.2h1.7v1.7h-1.7zM309.5 290.5h1.9v1.9h-1.9zM252.6 314.2h1.7v1.7h-1.7zM286.4 308.3h1.5v1.5h-1.5zM312.3 308.6h1.6v1.6h-1.6zM295.7 284.5h1.8v1.8h-1.8zM331.3 298.0h1.9v1.9h-1.9zM206.4 303.9h2.0v2.0h-2.0zM250.6 303.6h2.0v2.0h-2.0zM291.3 304.7h2.2v2.2h-2.2zM290.7 283.7h2.1v2.1h-2.1zM233.2 308.6h1.8v1.8h-1.8zM272.7 313.0h2.0v2.0h-2.0zM295.0 311.7h2.1v2.1h-2.1zM245.9 308.4h2.0v2.0h-2.0zM235.3 304.7h2.2v2.2h-2.2zM254.1 282.6h1.5v1.5h-1.5zM273.8 294.0h2.2v2.2h-2.2zM265.9 312.3h2.0v2.0h-2.0zM304.7 304.8h1.4v1.4h-1.4zM232.8 288.7h1.8v1.8h-1.8zM247.8 313.6h2.1v2.1h-2.1zM288.2 297.4h1.8v1.8h-1.8zM261.7 291.4h1.9v1.9h-1.9zM285.1 294.3h1.8v1.8h-1.8zM242.5 309.2h2.1v2.1h-2.1zM270.9 307.2h1.5v1.5h-1.5zM306.7 306.8h2.1v2.1h-2.1zM217.0 307.3h1.7v1.7h-1.7zM231.4 291.8h1.6v1.6h-1.6zM306.0 280.9h2.3v2.3h-2.3zM304.7 302.4h2.2v2.2h-2.2zM326.2 296.1h1.7v1.7h-1.7zM250.3 290.8h1.5v1.5h-1.5zM246.0 294.9h1.9v1.9h-1.9zM275.7 311.5h1.6v1.6h-1.6zM302.7 303.3h1.5v1.5h-1.5zM294.8 285.3h2.2v2.2h-2.2zM226.9 296.4h2.0v2.0h-2.0zM256.0 281.3h1.6v1.6h-1.6zM233.0 293.2h1.7v1.7h-1.7zM227.3 309.1h1.5v1.5h-1.5zM313.9 284.3h1.7v1.7h-1.7zM248.1 315.1h2.1v2.1h-2.1zM302.0 292.5h2.1v2.1h-2.1zM294.9 311.4h2.1v2.1h-2.1zM222.8 303.1h1.7v1.7h-1.7zM324.3 297.1h2.0v2.0h-2.0zM278.0 279.4h2.2v2.2h-2.2zM315.8 289.3h1.5v1.5h-1.5zM264.4 302.3h2.2v2.2h-2.2zM253.3 313.7h1.7v1.7h-1.7zM302.6 284.4h1.7v1.7h-1.7zM262.7 309.9h1.5v1.5h-1.5zM253.4 310.1h2.0v2.0h-2.0zM216.7 302.7h2.0v2.0h-2.0zM237.9 309.8h2.1v2.1h-2.1zM226.0 312.4h1.9v1.9h-1.9zM268.2 291.7h2.2v2.2h-2.2zM301.4 296.9h1.9v1.9h-1.9zM298.4 288.4h2.1v2.1h-2.1zM276.5 289.9h2.0v2.0h-2.0zM216.9 290.3h2.0v2.0h-2.0zM238.9 284.7h1.5v1.5h-1.5zM232.9 301.5h2.0v2.0h-2.0zM237.9 303.7h2.2v2.2h-2.2zM271.7 291.1h2.0v2.0h-2.0zM331.0 297.0h2.0v2.0h-2.0zM318.9 294.8h1.5v1.5h-1.5zM254.9 304.8h1.5v1.5h-1.5zM329.1 291.2h2.0v2.0h-2.0zM278.9 285.8h1.6v1.6h-1.6zM207.7 297.3h2.0v2.0h-2.0zM248.1 309.6h1.8v1.8h-1.8zM236.1 298.8h1.7v1.7h-1.7zM245.6 288.3h1.6v1.6h-1.6zM245.9 292.0h2.1v2.1h-2.1zM209.9 296.0h1.9v1.9h-1.9zM235.2 307.3h1.7v1.7h-1.7zM323.8 302.9h1.9v1.9h-1.9zM300.6 291.6h1.8v1.8h-1.8zM276.8 286.1h1.6v1.6h-1.6zM266.9 308.7h1.8v1.8h-1.8zM245.0 293.0h1.8v1.8h-1.8zM212.7 305.4h2.1v2.1h-2.1zM217.2 286.4h2.3v2.3h-2.3zM267.4 306.5h1.9v1.9h-1.9zM307.2 304.1h1.9v1.9h-1.9zM249.1 279.1h1.7v1.7h-1.7zM286.4 311.3h1.4v1.4h-1.4zM309.9 295.4h1.9v1.9h-1.9zM258.4 307.3h2.3v2.3h-2.3zM311.3 305.9h1.8v1.8h-1.8zM268.2 295.6h2.1v2.1h-2.1zM241.2 298.4h1.7v1.7h-1.7zM297.6 297.4h2.0v2.0h-2.0zM302.7 282.5h1.6v1.6h-1.6zM301.5 295.2h1.8v1.8h-1.8zM301.9 290.3h2.1v2.1h-2.1zM244.3 310.3h2.2v2.2h-2.2zM319.9 285.1h1.8v1.8h-1.8zM263.3 278.2h2.1v2.1h-2.1zM242.2 311.3h1.7v1.7h-1.7z" fill="#a9a8b6"/><path d="M277.1 288.0h1.9v1.9h-1.9zM212.6 302.2h1.6v1.6h-1.6zM326.6 299.8h1.8v1.8h-1.8zM236.1 313.2h1.8v1.8h-1.8zM275.5 279.8h2.3v2.3h-2.3zM210.6 300.3h1.9v1.9h-1.9zM259.7 278.6h1.5v1.5h-1.5zM222.7 283.0h1.7v1.7h-1.7zM235.9 281.9h2.1v2.1h-2.1zM246.8 313.3h2.1v2.1h-2.1zM318.3 310.8h1.6v1.6h-1.6zM261.5 286.2h1.8v1.8h-1.8zM271.6 280.1h1.6v1.6h-1.6zM269.7 290.9h2.2v2.2h-2.2zM300.0 314.9h1.6v1.6h-1.6zM231.1 308.5h1.7v1.7h-1.7zM294.2 302.6h1.8v1.8h-1.8zM272.1 295.2h1.8v1.8h-1.8zM248.9 290.7h2.0v2.0h-2.0zM297.8 297.5h1.6v1.6h-1.6zM319.2 311.0h1.6v1.6h-1.6zM257.8 313.6h1.9v1.9h-1.9zM207.9 297.1h1.9v1.9h-1.9zM288.7 310.3h2.2v2.2h-2.2zM318.2 294.8h2.0v2.0h-2.0zM268.7 312.5h1.7v1.7h-1.7zM292.5 305.4h2.0v2.0h-2.0zM217.6 287.2h1.4v1.4h-1.4zM243.4 297.0h1.5v1.5h-1.5zM251.8 294.7h2.3v2.3h-2.3zM290.6 279.3h1.4v1.4h-1.4zM289.9 286.8h1.5v1.5h-1.5zM251.6 307.0h1.9v1.9h-1.9zM313.3 308.9h1.5v1.5h-1.5zM245.9 308.5h2.0v2.0h-2.0zM322.6 291.2h2.1v2.1h-2.1zM326.9 289.9h1.7v1.7h-1.7zM216.3 307.2h2.2v2.2h-2.2zM318.6 299.3h1.5v1.5h-1.5zM252.4 279.0h2.2v2.2h-2.2zM264.3 304.4h2.0v2.0h-2.0zM302.6 285.4h1.7v1.7h-1.7zM213.0 302.4h1.7v1.7h-1.7zM248.9 280.5h1.9v1.9h-1.9zM248.6 313.7h2.2v2.2h-2.2zM290.0 305.4h1.9v1.9h-1.9zM241.3 314.4h1.8v1.8h-1.8zM244.2 305.3h2.1v2.1h-2.1zM253.9 301.6h1.6v1.6h-1.6zM249.7 280.0h1.8v1.8h-1.8zM289.4 295.9h1.9v1.9h-1.9zM300.7 289.5h1.7v1.7h-1.7zM273.4 305.1h1.7v1.7h-1.7zM244.7 291.1h2.2v2.2h-2.2zM274.6 296.6h2.2v2.2h-2.2zM292.0 298.7h1.9v1.9h-1.9zM256.3 287.1h1.6v1.6h-1.6zM210.6 297.3h1.7v1.7h-1.7zM298.7 299.3h1.8v1.8h-1.8zM223.2 290.7h1.7v1.7h-1.7zM287.9 296.9h1.6v1.6h-1.6zM291.3 307.2h1.8v1.8h-1.8zM293.3 310.2h2.0v2.0h-2.0zM225.7 297.1h1.8v1.8h-1.8zM234.9 309.8h1.8v1.8h-1.8zM274.9 308.2h1.7v1.7h-1.7zM292.5 281.5h2.3v2.3h-2.3zM259.9 286.2h1.6v1.6h-1.6zM306.7 295.7h1.5v1.5h-1.5zM299.6 282.1h1.7v1.7h-1.7zM219.9 307.9h1.6v1.6h-1.6zM268.3 307.6h1.6v1.6h-1.6zM233.7 291.1h2.2v2.2h-2.2zM288.3 300.3h1.6v1.6h-1.6zM322.4 295.1h1.5v1.5h-1.5zM308.7 308.1h2.3v2.3h-2.3zM324.0 307.3h2.2v2.2h-2.2zM294.0 284.4h1.5v1.5h-1.5zM225.8 289.4h1.5v1.5h-1.5zM215.2 298.9h1.6v1.6h-1.6zM331.2 300.5h1.9v1.9h-1.9zM311.1 294.0h1.9v1.9h-1.9zM322.2 305.2h1.9v1.9h-1.9zM260.5 315.9h2.0v2.0h-2.0zM283.6 304.6h1.4v1.4h-1.4zM311.7 306.1h2.1v2.1h-2.1zM269.8 283.1h2.2v2.2h-2.2zM324.4 305.0h1.6v1.6h-1.6zM252.4 300.8h1.6v1.6h-1.6zM280.7 291.5h1.5v1.5h-1.5zM224.4 299.6h2.3v2.3h-2.3zM236.3 295.7h2.0v2.0h-2.0zM269.9 310.0h2.2v2.2h-2.2zM241.9 310.4h1.8v1.8h-1.8zM280.3 314.2h1.5v1.5h-1.5zM252.4 278.7h1.7v1.7h-1.7zM215.8 307.1h1.4v1.4h-1.4zM285.3 311.6h1.5v1.5h-1.5zM287.8 283.9h2.2v2.2h-2.2zM263.7 308.5h1.8v1.8h-1.8zM301.8 289.3h2.0v2.0h-2.0zM301.9 310.1h1.7v1.7h-1.7zM242.2 306.9h1.4v1.4h-1.4zM236.1 301.5h2.1v2.1h-2.1zM323.4 309.4h1.7v1.7h-1.7zM313.4 285.6h1.6v1.6h-1.6zM232.3 306.2h1.8v1.8h-1.8zM245.8 304.8h1.9v1.9h-1.9zM289.3 291.9h2.0v2.0h-2.0zM225.5 309.6h1.9v1.9h-1.9zM220.1 300.9h2.1v2.1h-2.1zM208.9 298.3h1.6v1.6h-1.6zM223.6 302.9h1.6v1.6h-1.6zM248.4 304.8h2.1v2.1h-2.1zM296.8 300.6h2.3v2.3h-2.3zM235.8 281.5h2.0v2.0h-2.0zM267.9 315.3h2.2v2.2h-2.2zM232.6 300.2h1.4v1.4h-1.4zM286.6 283.7h1.6v1.6h-1.6zM247.6 302.0h1.9v1.9h-1.9zM288.2 288.4h1.8v1.8h-1.8zM240.8 302.0h1.5v1.5h-1.5zM237.6 289.8h1.4v1.4h-1.4zM301.2 308.8h1.8v1.8h-1.8zM264.4 308.2h1.7v1.7h-1.7zM236.6 302.5h1.6v1.6h-1.6zM210.9 302.5h2.0v2.0h-2.0zM219.5 286.7h2.3v2.3h-2.3zM294.2 291.8h1.5v1.5h-1.5zM267.1 281.8h1.9v1.9h-1.9zM250.3 295.4h2.0v2.0h-2.0zM324.1 305.9h2.1v2.1h-2.1zM249.0 309.2h1.8v1.8h-1.8zM229.3 292.2h2.1v2.1h-2.1zM238.8 310.4h2.0v2.0h-2.0zM276.5 288.9h1.5v1.5h-1.5zM221.2 298.5h2.1v2.1h-2.1zM235.9 304.2h2.2v2.2h-2.2zM251.0 298.0h1.7v1.7h-1.7zM285.3 287.7h1.8v1.8h-1.8zM206.4 302.0h1.5v1.5h-1.5zM320.9 298.6h1.7v1.7h-1.7zM272.4 307.7h1.5v1.5h-1.5zM264.6 287.0h1.6v1.6h-1.6zM290.1 281.4h2.1v2.1h-2.1zM311.3 291.6h2.2v2.2h-2.2zM287.9 293.9h1.8v1.8h-1.8zM306.1 295.9h1.5v1.5h-1.5zM329.1 294.3h2.2v2.2h-2.2zM226.7 298.8h2.0v2.0h-2.0zM278.5 287.6h1.8v1.8h-1.8zM253.7 285.2h2.0v2.0h-2.0zM290.2 288.7h1.6v1.6h-1.6zM306.9 296.7h1.5v1.5h-1.5zM232.2 296.0h1.8v1.8h-1.8zM294.6 280.5h1.5v1.5h-1.5zM263.7 284.7h1.7v1.7h-1.7zM235.6 290.5h1.9v1.9h-1.9zM206.2 295.2h2.1v2.1h-2.1zM286.9 311.0h1.5v1.5h-1.5zM327.8 298.6h2.1v2.1h-2.1zM239.5 304.6h1.8v1.8h-1.8zM288.4 289.3h1.5v1.5h-1.5zM296.8 288.7h2.3v2.3h-2.3zM278.8 283.6h1.9v1.9h-1.9zM261.3 304.2h2.1v2.1h-2.1zM298.9 294.7h2.3v2.3h-2.3zM301.5 300.1h1.9v1.9h-1.9zM302.3 298.6h2.2v2.2h-2.2zM223.6 286.6h1.6v1.6h-1.6zM248.4 305.3h1.4v1.4h-1.4zM306.5 313.2h1.6v1.6h-1.6zM227.7 291.6h1.5v1.5h-1.5zM297.4 300.3h1.6v1.6h-1.6zM263.9 310.9h1.9v1.9h-1.9zM252.9 292.9h1.9v1.9h-1.9zM260.5 296.8h2.2v2.2h-2.2zM233.1 306.5h1.5v1.5h-1.5zM215.8 291.1h1.5v1.5h-1.5zM214.0 300.8h2.2v2.2h-2.2zM300.0 313.5h1.9v1.9h-1.9zM310.1 282.5h2.2v2.2h-2.2zM257.5 309.9h2.0v2.0h-2.0zM226.9 311.2h2.3v2.3h-2.3zM241.3 288.0h2.0v2.0h-2.0zM223.0 310.4h2.0v2.0h-2.0zM213.1 307.2h2.0v2.0h-2.0zM227.3 293.2h1.5v1.5h-1.5zM285.2 287.9h2.3v2.3h-2.3zM286.1 305.0h2.3v2.3h-2.3zM299.9 308.2h2.1v2.1h-2.1zM319.5 291.8h1.5v1.5h-1.5zM283.5 307.6h2.3v2.3h-2.3zM303.2 303.1h2.0v2.0h-2.0zM303.2 284.4h1.4v1.4h-1.4zM300.1 295.1h2.3v2.3h-2.3zM263.9 295.2h1.8v1.8h-1.8zM320.5 306.0h2.0v2.0h-2.0zM330.6 292.0h2.3v2.3h-2.3zM326.3 296.4h1.9v1.9h-1.9zM268.4 292.0h1.7v1.7h-1.7zM296.5 286.2h1.6v1.6h-1.6zM264.5 291.7h2.1v2.1h-2.1zM248.1 280.2h1.7v1.7h-1.7zM258.4 284.3h1.8v1.8h-1.8zM205.9 303.9h1.7v1.7h-1.7zM284.4 285.2h1.9v1.9h-1.9zM246.2 280.0h2.1v2.1h-2.1zM317.1 293.2h1.7v1.7h-1.7zM314.2 297.5h2.0v2.0h-2.0zM210.8 297.9h1.6v1.6h-1.6zM266.0 280.5h2.3v2.3h-2.3zM297.0 289.3h2.0v2.0h-2.0zM255.1 314.1h1.6v1.6h-1.6zM292.1 286.2h2.0v2.0h-2.0zM310.1 302.3h2.0v2.0h-2.0zM216.3 298.2h2.3v2.3h-2.3zM300.4 287.5h1.4v1.4h-1.4zM227.3 307.0h1.6v1.6h-1.6zM257.0 301.8h2.0v2.0h-2.0zM251.8 311.7h2.3v2.3h-2.3zM205.5 292.0h1.4v1.4h-1.4zM297.4 284.0h2.2v2.2h-2.2zM263.7 283.4h2.2v2.2h-2.2zM312.3 286.0h2.1v2.1h-2.1zM220.3 306.6h1.9v1.9h-1.9zM278.6 288.4h2.1v2.1h-2.1zM278.7 282.1h1.5v1.5h-1.5zM271.5 300.2h2.0v2.0h-2.0zM219.2 306.5h2.3v2.3h-2.3zM212.9 287.8h1.7v1.7h-1.7zM228.4 292.1h2.0v2.0h-2.0zM226.4 305.8h1.7v1.7h-1.7zM267.6 298.1h2.0v2.0h-2.0zM330.8 298.2h1.9v1.9h-1.9zM319.5 309.1h1.7v1.7h-1.7zM300.5 314.1h2.1v2.1h-2.1zM208.3 293.0h2.1v2.1h-2.1zM238.1 294.1h1.9v1.9h-1.9zM297.2 290.3h2.1v2.1h-2.1zM289.0 286.1h1.7v1.7h-1.7zM275.6 287.5h2.2v2.2h-2.2zM300.8 293.1h2.0v2.0h-2.0zM307.5 302.6h1.6v1.6h-1.6zM318.9 292.5h2.2v2.2h-2.2zM323.8 303.0h2.2v2.2h-2.2zM257.8 308.3h1.7v1.7h-1.7zM249.0 310.2h2.2v2.2h-2.2zM302.4 297.4h1.4v1.4h-1.4zM292.8 311.3h1.9v1.9h-1.9zM332.0 299.5h1.9v1.9h-1.9zM223.2 301.9h1.8v1.8h-1.8zM240.3 301.5h2.2v2.2h-2.2zM252.6 286.7h1.7v1.7h-1.7zM223.2 292.2h2.1v2.1h-2.1zM228.4 302.4h2.1v2.1h-2.1zM273.6 287.3h2.1v2.1h-2.1zM206.3 297.7h1.5v1.5h-1.5zM228.5 284.6h2.0v2.0h-2.0zM319.5 294.1h2.1v2.1h-2.1zM246.4 295.6h2.1v2.1h-2.1zM216.6 288.6h1.9v1.9h-1.9zM240.7 310.1h1.8v1.8h-1.8zM288.4 280.9h1.5v1.5h-1.5zM212.9 290.5h2.0v2.0h-2.0zM219.6 310.7h2.1v2.1h-2.1zM242.2 281.2h1.9v1.9h-1.9zM239.8 284.4h1.7v1.7h-1.7zM295.6 296.3h1.7v1.7h-1.7zM237.8 280.9h2.0v2.0h-2.0zM296.7 311.8h2.1v2.1h-2.1zM236.4 291.5h1.7v1.7h-1.7zM218.9 293.2h2.3v2.3h-2.3zM265.7 306.7h2.3v2.3h-2.3zM241.0 285.9h1.5v1.5h-1.5zM291.2 285.7h2.1v2.1h-2.1zM236.5 305.0h1.5v1.5h-1.5zM280.7 286.6h2.1v2.1h-2.1zM295.4 297.4h1.4v1.4h-1.4zM254.2 305.4h2.0v2.0h-2.0zM284.3 291.7h2.0v2.0h-2.0zM226.9 307.3h1.6v1.6h-1.6zM237.2 287.8h2.0v2.0h-2.0zM283.5 308.8h1.9v1.9h-1.9zM286.4 307.3h2.2v2.2h-2.2zM296.9 282.4h2.2v2.2h-2.2zM242.3 291.0h1.9v1.9h-1.9zM245.3 285.0h1.5v1.5h-1.5zM314.0 307.0h1.4v1.4h-1.4zM278.5 305.9h1.9v1.9h-1.9zM241.9 282.1h2.0v2.0h-2.0zM261.8 294.6h1.6v1.6h-1.6zM218.6 291.7h1.5v1.5h-1.5zM233.7 289.2h1.8v1.8h-1.8zM234.1 289.1h1.9v1.9h-1.9zM273.9 310.9h1.6v1.6h-1.6zM282.8 283.7h2.1v2.1h-2.1zM208.4 294.3h1.6v1.6h-1.6zM315.6 283.2h1.9v1.9h-1.9zM305.1 300.7h1.6v1.6h-1.6zM314.9 290.0h2.0v2.0h-2.0zM244.9 286.8h1.6v1.6h-1.6zM295.6 291.1h2.1v2.1h-2.1zM230.5 304.7h1.9v1.9h-1.9zM206.7 297.3h2.2v2.2h-2.2zM331.0 289.7h2.1v2.1h-2.1zM303.7 283.0h2.1v2.1h-2.1zM259.3 289.0h1.7v1.7h-1.7zM258.7 284.2h2.0v2.0h-2.0zM237.2 302.1h1.9v1.9h-1.9zM293.9 287.2h2.1v2.1h-2.1zM328.5 287.8h2.0v2.0h-2.0zM237.5 289.6h1.9v1.9h-1.9zM245.1 298.5h1.8v1.8h-1.8zM292.2 310.8h2.3v2.3h-2.3zM219.6 283.7h1.6v1.6h-1.6zM216.1 302.7h1.5v1.5h-1.5zM263.5 312.6h2.2v2.2h-2.2zM320.2 307.8h1.6v1.6h-1.6zM271.0 314.3h1.7v1.7h-1.7zM332.5 302.8h2.1v2.1h-2.1zM238.6 313.5h1.8v1.8h-1.8zM229.4 286.2h1.9v1.9h-1.9zM306.0 298.1h2.1v2.1h-2.1zM260.0 288.6h1.8v1.8h-1.8zM247.8 298.0h2.0v2.0h-2.0zM304.8 300.0h1.7v1.7h-1.7zM316.1 291.4h2.3v2.3h-2.3zM323.1 288.2h1.7v1.7h-1.7zM247.1 312.1h1.4v1.4h-1.4zM217.7 295.9h2.3v2.3h-2.3zM291.3 297.8h1.9v1.9h-1.9zM279.8 313.8h1.4v1.4h-1.4zM266.9 291.1h2.0v2.0h-2.0zM250.0 301.1h1.5v1.5h-1.5zM224.9 302.1h2.0v2.0h-2.0z" fill="#8f8e9f"/><path d="M217.8 294.6h1.8v1.8h-1.8zM249.3 306.5h2.2v2.2h-2.2zM301.7 282.3h2.1v2.1h-2.1zM295.9 288.8h1.4v1.4h-1.4zM302.0 311.0h2.0v2.0h-2.0zM277.9 301.0h2.0v2.0h-2.0zM319.2 296.4h1.6v1.6h-1.6zM255.3 296.7h2.2v2.2h-2.2zM237.4 286.9h2.1v2.1h-2.1zM232.5 289.7h1.5v1.5h-1.5zM285.7 294.3h1.8v1.8h-1.8zM309.4 312.8h1.9v1.9h-1.9zM226.1 284.1h1.9v1.9h-1.9zM302.5 300.5h1.7v1.7h-1.7zM296.7 304.9h1.5v1.5h-1.5zM330.0 302.9h1.6v1.6h-1.6zM219.7 305.6h2.3v2.3h-2.3zM302.8 284.4h2.3v2.3h-2.3zM236.5 308.8h1.7v1.7h-1.7zM270.1 285.9h2.0v2.0h-2.0zM304.9 295.1h2.0v2.0h-2.0zM303.5 288.3h2.3v2.3h-2.3zM290.8 313.3h1.7v1.7h-1.7zM271.1 314.3h1.6v1.6h-1.6zM241.8 313.9h2.1v2.1h-2.1zM212.2 289.4h2.3v2.3h-2.3zM304.3 313.4h1.6v1.6h-1.6zM289.8 281.5h1.7v1.7h-1.7zM324.1 290.1h1.9v1.9h-1.9zM257.6 301.6h1.9v1.9h-1.9zM276.5 309.5h1.6v1.6h-1.6zM214.6 295.9h2.1v2.1h-2.1zM325.4 295.0h2.0v2.0h-2.0zM289.7 312.2h1.9v1.9h-1.9zM271.9 302.0h1.7v1.7h-1.7zM317.1 300.1h1.6v1.6h-1.6zM253.6 293.4h1.6v1.6h-1.6zM265.9 304.2h2.2v2.2h-2.2zM282.5 296.5h2.0v2.0h-2.0zM224.9 283.8h2.0v2.0h-2.0zM301.7 314.0h1.7v1.7h-1.7zM233.8 293.1h1.9v1.9h-1.9zM267.8 285.4h1.5v1.5h-1.5zM212.2 299.0h1.6v1.6h-1.6zM272.7 301.2h1.9v1.9h-1.9zM222.1 302.1h1.4v1.4h-1.4zM241.8 283.4h2.2v2.2h-2.2zM296.2 292.6h1.4v1.4h-1.4zM221.9 311.1h1.9v1.9h-1.9zM219.9 291.9h2.2v2.2h-2.2zM265.4 280.0h2.2v2.2h-2.2zM229.1 296.1h1.5v1.5h-1.5zM268.1 279.1h1.5v1.5h-1.5zM294.9 295.2h2.2v2.2h-2.2zM260.2 303.9h2.0v2.0h-2.0zM250.7 306.5h1.6v1.6h-1.6zM301.9 284.4h1.8v1.8h-1.8zM273.0 311.5h2.2v2.2h-2.2zM247.8 304.0h1.7v1.7h-1.7zM302.4 283.1h1.7v1.7h-1.7zM286.7 294.6h1.6v1.6h-1.6zM260.3 316.1h1.4v1.4h-1.4zM258.2 307.1h1.8v1.8h-1.8zM227.5 303.2h1.7v1.7h-1.7z" fill="#45444b"/><path d="M256.1 280.4h1.7v1.7h-1.7zM263.3 308.5h2.0v2.0h-2.0zM313.2 299.7h2.3v2.3h-2.3zM240.4 289.4h1.9v1.9h-1.9zM211.9 301.9h2.2v2.2h-2.2zM216.2 304.1h1.9v1.9h-1.9zM286.7 299.0h1.7v1.7h-1.7zM254.6 295.9h2.0v2.0h-2.0zM237.7 288.0h1.8v1.8h-1.8zM204.5 299.8h1.5v1.5h-1.5zM209.2 291.4h1.5v1.5h-1.5zM256.9 307.2h2.1v2.1h-2.1zM270.9 297.2h1.5v1.5h-1.5zM204.7 298.3h1.6v1.6h-1.6zM247.0 307.0h1.5v1.5h-1.5zM312.7 306.7h1.7v1.7h-1.7zM241.1 288.1h2.2v2.2h-2.2zM281.3 297.9h2.3v2.3h-2.3zM322.0 284.8h2.1v2.1h-2.1zM333.8 298.1h2.1v2.1h-2.1zM309.8 282.9h1.8v1.8h-1.8zM242.7 282.4h1.5v1.5h-1.5zM231.9 306.7h1.9v1.9h-1.9zM315.4 310.2h2.2v2.2h-2.2zM263.9 307.4h1.9v1.9h-1.9zM261.6 291.5h1.7v1.7h-1.7zM262.0 293.1h2.1v2.1h-2.1zM281.6 279.1h1.7v1.7h-1.7zM288.9 286.9h1.7v1.7h-1.7zM262.9 309.7h1.4v1.4h-1.4zM252.4 289.0h1.7v1.7h-1.7zM266.0 304.0h1.6v1.6h-1.6zM331.8 290.9h1.9v1.9h-1.9zM238.2 304.5h1.9v1.9h-1.9zM254.4 312.7h1.8v1.8h-1.8zM246.8 286.8h2.2v2.2h-2.2zM237.5 304.9h1.8v1.8h-1.8zM299.0 306.4h1.5v1.5h-1.5zM306.3 285.3h2.0v2.0h-2.0zM234.6 281.6h1.8v1.8h-1.8zM231.9 289.5h1.9v1.9h-1.9zM287.6 286.9h1.9v1.9h-1.9zM265.9 293.9h1.6v1.6h-1.6zM275.3 290.8h2.0v2.0h-2.0zM298.8 299.9h2.0v2.0h-2.0zM283.1 294.2h1.5v1.5h-1.5zM275.1 291.0h2.1v2.1h-2.1zM282.1 290.6h2.3v2.3h-2.3zM279.3 282.9h2.0v2.0h-2.0zM272.6 300.0h2.0v2.0h-2.0zM323.8 286.5h1.7v1.7h-1.7zM264.9 305.7h1.6v1.6h-1.6zM245.5 304.7h1.7v1.7h-1.7zM296.1 307.4h1.4v1.4h-1.4zM273.6 291.8h2.1v2.1h-2.1zM263.9 287.3h1.9v1.9h-1.9zM286.8 306.0h1.9v1.9h-1.9zM260.5 310.4h1.7v1.7h-1.7z" fill="#b8b7c3"/><path d="M299.9 292.1h2.4v2.4h-2.4zM295.9 295.1h1.9v1.9h-1.9zM305.7 296.3h2.2v2.2h-2.2zM296.1 292.0h1.7v1.7h-1.7zM300.5 292.0h1.7v1.7h-1.7zM312.4 297.1h2.2v2.2h-2.2zM310.0 289.2h1.9v1.9h-1.9zM298.0 295.3h2.1v2.1h-2.1zM296.3 290.2h2.2v2.2h-2.2z" fill="#2e2d33"/><path d="M294.8 295.1h1.6v1.6h-1.6zM294.2 300.0h2.4v2.4h-2.4zM307.6 296.2h2.1v2.1h-2.1zM317.5 292.6h1.8v1.8h-1.8zM303.9 294.0h1.7v1.7h-1.7zM290.8 291.6h2.1v2.1h-2.1zM287.6 291.7h2.1v2.1h-2.1zM299.4 293.1h2.1v2.1h-2.1zM307.0 290.9h2.0v2.0h-2.0zM316.4 297.8h2.2v2.2h-2.2zM301.9 292.7h2.2v2.2h-2.2zM296.1 297.4h1.7v1.7h-1.7zM310.1 296.0h2.3v2.3h-2.3z" fill="#55545b"/><path d="M295.1 294.1h2.4v2.4h-2.4zM310.8 291.9h2.4v2.4h-2.4zM312.0 287.4h1.9v1.9h-1.9zM304.0 294.2h2.3v2.3h-2.3zM304.8 290.0h2.2v2.2h-2.2zM286.1 300.3h1.8v1.8h-1.8zM305.6 297.9h1.7v1.7h-1.7zM314.1 312.4h1.6v1.6h-1.6zM331.4 302.9h1.9v1.9h-1.9zM225.1 310.9h1.9v1.9h-1.9zM260.9 319.2h1.8v1.8h-1.8zM230.9 316.0h2.0v2.0h-2.0zM317.8 312.2h2.0v2.0h-2.0zM282.7 315.9h1.6v1.6h-1.6zM285.2 318.0h1.6v1.6h-1.6zM252.0 316.9h1.8v1.8h-1.8zM322.7 311.6h2.2v2.2h-2.2zM297.2 316.2h1.9v1.9h-1.9zM267.8 320.0h1.7v1.7h-1.7zM319.3 312.2h1.6v1.6h-1.6zM214.4 308.5h1.6v1.6h-1.6zM294.9 318.0h2.0v2.0h-2.0zM298.0 316.8h1.6v1.6h-1.6zM319.8 321.8h2.8v2.8h-2.8zM330.9 319.7h2.0v2.0h-2.0zM334.8 306.2h2.0v2.0h-2.0zM333.6 315.4h2.0v2.0h-2.0zM333.7 315.4h2.0v2.0h-2.0zM334.9 307.0h2.0v2.0h-2.0zM329.8 320.8h2.0v2.0h-2.0zM334.9 307.4h2.0v2.0h-2.0zM332.3 317.8h2.0v2.0h-2.0z" fill="#4a4950"/><path d="M312.5 296.1h2.1v2.1h-2.1zM300.2 292.4h2.0v2.0h-2.0zM301.3 288.4h2.4v2.4h-2.4zM284.7 293.2h2.1v2.1h-2.1zM293.7 298.1h2.1v2.1h-2.1zM299.0 288.9h2.2v2.2h-2.2zM306.5 287.9h2.2v2.2h-2.2zM282.0 288.9h1.9v1.9h-1.9zM306.3 294.3h2.2v2.2h-2.2zM267.4 315.4h2.5v2.5h-2.5zM328.4 321.9h2.0v2.0h-2.0zM333.5 315.7h2.0v2.0h-2.0zM334.9 307.5h2.0v2.0h-2.0zM334.3 313.7h2.0v2.0h-2.0z" fill="#3c3b42"/><path d="M306.1 299.5h1.7v1.7h-1.7zM304.9 293.4h2.0v2.0h-2.0zM300.2 293.7h1.7v1.7h-1.7zM296.5 294.1h2.4v2.4h-2.4zM315.8 289.0h1.6v1.6h-1.6zM304.7 292.1h2.2v2.2h-2.2zM310.7 291.7h1.9v1.9h-1.9zM300.4 297.5h2.1v2.1h-2.1zM295.9 293.2h2.2v2.2h-2.2zM301.2 295.8h2.1v2.1h-2.1zM303.9 292.0h2.3v2.3h-2.3zM303.9 299.0h2.0v2.0h-2.0zM284.0 292.5h2.4v2.4h-2.4zM305.3 299.6h2.0v2.0h-2.0zM303.1 292.7h1.9v1.9h-1.9zM284.0 298.2h1.7v1.7h-1.7zM297.6 294.3h2.0v2.0h-2.0z" fill="#66656d"/><path d="M245.1 285.7h2.1v2.1h-2.1zM250.4 281.8h2.0v2.0h-2.0zM236.2 284.8h2.3v2.3h-2.3zM240.8 285.9h2.4v2.4h-2.4zM236.8 288.1h2.2v2.2h-2.2zM240.3 283.6h2.3v2.3h-2.3zM242.0 280.0h2.1v2.1h-2.1zM234.1 283.9h2.4v2.4h-2.4zM242.3 281.1h2.2v2.2h-2.2zM229.0 283.2h2.2v2.2h-2.2zM261.9 283.3h2.4v2.4h-2.4zM248.0 285.7h1.9v1.9h-1.9zM234.3 281.9h2.3v2.3h-2.3zM227.3 311.5h1.7v1.7h-1.7zM329.8 301.4h2.1v2.1h-2.1zM285.3 318.7h1.8v1.8h-1.8zM244.6 318.0h1.8v1.8h-1.8zM222.3 311.9h2.2v2.2h-2.2zM292.6 316.9h1.7v1.7h-1.7zM299.8 313.9h1.8v1.8h-1.8zM243.0 316.7h1.8v1.8h-1.8zM273.1 317.7h2.1v2.1h-2.1zM212.2 304.6h2.1v2.1h-2.1zM300.5 316.5h1.6v1.6h-1.6zM239.3 316.6h1.9v1.9h-1.9zM298.5 317.4h1.7v1.7h-1.7zM305.4 313.3h2.1v2.1h-2.1zM244.5 315.6h2.1v2.1h-2.1zM297.3 314.4h1.8v1.8h-1.8zM324.2 307.2h1.6v1.6h-1.6zM204.1 299.2h1.7v1.7h-1.7zM311.7 310.8h1.9v1.9h-1.9zM232.0 313.7h2.0v2.0h-2.0zM307.6 315.9h1.5v1.5h-1.5zM255.2 316.0h2.0v2.0h-2.0zM283.6 316.1h1.7v1.7h-1.7zM286.9 318.3h2.0v2.0h-2.0zM331.0 317.0h2.4v2.4h-2.4zM322.2 337.4h2.9v2.9h-2.9z" fill="#77767f"/><path d="M249.9 285.5h2.4v2.4h-2.4zM228.4 286.5h2.1v2.1h-2.1zM263.2 287.0h2.4v2.4h-2.4zM232.4 284.9h1.6v1.6h-1.6zM238.6 286.7h2.3v2.3h-2.3zM265.5 287.2h2.1v2.1h-2.1zM248.7 286.1h1.7v1.7h-1.7zM253.7 282.1h1.7v1.7h-1.7zM261.0 279.3h1.8v1.8h-1.8zM227.4 312.0h1.8v1.8h-1.8zM327.5 303.0h1.9v1.9h-1.9zM204.4 300.1h2.1v2.1h-2.1zM332.5 300.9h2.0v2.0h-2.0zM306.5 315.7h1.7v1.7h-1.7zM318.7 308.9h1.8v1.8h-1.8zM316.7 310.6h2.0v2.0h-2.0zM229.4 313.4h1.5v1.5h-1.5zM306.1 315.7h1.9v1.9h-1.9zM247.8 317.1h1.9v1.9h-1.9zM236.3 313.9h1.5v1.5h-1.5zM205.8 300.0h1.8v1.8h-1.8zM324.6 307.2h1.6v1.6h-1.6zM208.3 302.9h2.2v2.2h-2.2zM298.0 317.7h2.0v2.0h-2.0zM297.9 317.0h2.1v2.1h-2.1zM211.0 305.9h1.6v1.6h-1.6zM245.1 317.2h1.9v1.9h-1.9zM233.9 315.7h1.6v1.6h-1.6zM306.4 312.3h1.8v1.8h-1.8zM304.5 313.8h1.9v1.9h-1.9zM230.0 315.8h1.6v1.6h-1.6zM288.2 349.8h2.2v2.2h-2.2zM285.3 344.2h2.2v2.2h-2.2zM256.6 320.2h2.3v2.3h-2.3zM242.1 326.0h3.0v3.0h-3.0zM215.4 346.6h2.5v2.5h-2.5z" fill="#8a8996"/><path d="M244.5 279.9h2.4v2.4h-2.4zM255.7 284.3h2.1v2.1h-2.1zM229.7 284.7h1.7v1.7h-1.7zM252.0 283.9h2.0v2.0h-2.0zM252.6 286.4h2.1v2.1h-2.1zM262.5 279.1h1.6v1.6h-1.6zM267.5 285.0h2.2v2.2h-2.2zM248.3 281.7h2.0v2.0h-2.0zM247.6 283.4h2.0v2.0h-2.0zM255.0 284.3h1.6v1.6h-1.6zM248.1 282.1h1.8v1.8h-1.8zM209.4 306.5h1.6v1.6h-1.6zM212.0 306.7h2.1v2.1h-2.1zM330.0 304.4h1.6v1.6h-1.6zM235.7 317.0h1.7v1.7h-1.7zM231.5 312.0h1.6v1.6h-1.6zM250.4 315.8h1.9v1.9h-1.9zM325.1 306.5h2.2v2.2h-2.2zM276.5 319.8h1.8v1.8h-1.8zM294.2 317.8h2.1v2.1h-2.1zM242.9 317.7h1.6v1.6h-1.6zM275.1 316.4h2.2v2.2h-2.2zM208.6 300.7h1.9v1.9h-1.9zM252.7 317.3h2.0v2.0h-2.0zM284.2 319.0h1.6v1.6h-1.6zM290.4 316.1h1.8v1.8h-1.8zM217.3 311.7h1.8v1.8h-1.8zM324.7 306.5h1.6v1.6h-1.6zM311.9 315.3h1.6v1.6h-1.6zM220.4 309.8h1.5v1.5h-1.5zM305.2 315.2h1.7v1.7h-1.7zM215.4 309.6h2.0v2.0h-2.0zM333.1 299.0h1.9v1.9h-1.9zM233.1 316.5h1.9v1.9h-1.9zM323.0 306.4h1.8v1.8h-1.8zM271.0 318.6h1.7v1.7h-1.7zM236.2 313.8h1.6v1.6h-1.6zM307.6 334.7h2.6v2.6h-2.6zM215.2 323.6h2.6v2.6h-2.6zM316.2 325.6h2.2v2.2h-2.2zM334.5 304.9h2.0v2.0h-2.0zM332.3 317.9h2.0v2.0h-2.0zM334.8 311.5h2.0v2.0h-2.0zM335.0 307.8h2.0v2.0h-2.0z" fill="#5d5c63"/><path d="M259.6 285.6h2.1v2.1h-2.1zM230.4 281.9h1.7v1.7h-1.7zM247.8 286.2h2.1v2.1h-2.1zM236.1 287.5h2.0v2.0h-2.0zM245.3 283.9h2.4v2.4h-2.4zM226.7 283.8h2.0v2.0h-2.0zM264.1 281.8h2.2v2.2h-2.2z" fill="#6a6971"/><path d="M311.2 291.7h1.9v1.9h-1.9zM311.9 296.1h2.3v2.3h-2.3zM312.1 295.6h2.4v2.4h-2.4zM309.5 294.2h2.0v2.0h-2.0z" fill="#a86a64"/><path d="M309.2 291.5h2.6v2.6h-2.6zM305.8 291.2h2.3v2.3h-2.3zM309.5 284.3h2.6v2.6h-2.6z" fill="#b87a70"/><path d="M313.3 296.0h2.2v2.2h-2.2zM308.0 288.8h2.0v2.0h-2.0zM306.7 289.2h2.1v2.1h-2.1zM312.5 285.0h2.3v2.3h-2.3zM308.8 286.3h2.6v2.6h-2.6zM308.5 288.8h2.2v2.2h-2.2z" fill="#94605c"/><path d="M311.8 292.3h2.0v2.0h-2.0z" fill="#8a4a46"/><path d="M296.4 317.4h2.0v2.0h-2.0zM324.0 309.2h1.7v1.7h-1.7zM217.6 310.3h1.9v1.9h-1.9zM262.1 318.8h2.2v2.2h-2.2zM289.7 316.1h1.6v1.6h-1.6zM209.9 303.2h2.0v2.0h-2.0zM237.6 313.3h1.5v1.5h-1.5zM235.4 314.4h2.2v2.2h-2.2zM330.1 303.9h2.1v2.1h-2.1zM326.9 305.9h1.8v1.8h-1.8zM243.4 315.0h1.6v1.6h-1.6zM328.8 302.2h1.8v1.8h-1.8zM230.0 312.8h2.1v2.1h-2.1zM211.7 305.8h1.9v1.9h-1.9zM327.8 302.2h1.9v1.9h-1.9zM216.3 309.8h2.0v2.0h-2.0zM245.9 315.1h2.0v2.0h-2.0zM278.7 317.8h1.8v1.8h-1.8zM235.1 316.5h1.7v1.7h-1.7zM276.4 317.9h1.6v1.6h-1.6zM326.6 307.4h1.5v1.5h-1.5zM305.4 316.0h2.1v2.1h-2.1z" fill="#9d9cab"/><path d="M238.9 348.7h2.7v2.7h-2.7zM296.2 347.0h3.0v3.0h-3.0zM269.9 336.2h2.9v2.9h-2.9zM241.4 330.8h2.8v2.8h-2.8zM305.6 340.4h2.4v2.4h-2.4zM253.0 337.1h2.6v2.6h-2.6zM329.6 336.5h2.1v2.1h-2.1zM243.7 343.3h2.4v2.4h-2.4z" fill="#050505"/></g><g filter="url(#bl)"><path d="M255.2 136.6h2.7v2.7h-2.7zM256.3 220.9h2.2v2.2h-2.2zM256.4 184.7h2.5v2.5h-2.5zM282.0 149.4h2.9v2.9h-2.9zM242.5 113.2h2.2v2.2h-2.2zM255.4 167.9h2.3v2.3h-2.3zM277.4 239.7h2.3v2.3h-2.3zM277.3 126.4h2.9v2.9h-2.9zM277.1 122.2h2.1v2.1h-2.1zM282.5 187.3h2.9v2.9h-2.9zM256.4 175.7h2.5v2.5h-2.5zM276.3 122.1h2.8v2.8h-2.8zM253.3 236.0h2.6v2.6h-2.6zM280.4 104.4h2.4v2.4h-2.4zM297.2 127.3h2.8v2.8h-2.8zM296.5 114.6h2.8v2.8h-2.8zM253.4 197.8h2.6v2.6h-2.6zM279.5 126.2h2.5v2.5h-2.5zM248.1 84.9h2.5v2.5h-2.5zM300.4 95.1h3.0v3.0h-3.0zM292.4 128.6h3.2v3.2h-3.2zM243.4 100.5h3.1v3.1h-3.1zM284.1 133.2h2.8v2.8h-2.8zM243.9 195.0h2.9v2.9h-2.9zM243.8 182.3h2.2v2.2h-2.2zM292.2 229.4h2.9v2.9h-2.9zM266.5 176.3h2.7v2.7h-2.7zM282.2 125.6h2.5v2.5h-2.5zM237.9 193.9h2.1v2.1h-2.1zM283.9 206.1h2.1v2.1h-2.1zM269.4 128.0h3.1v3.1h-3.1zM301.1 114.5h2.6v2.6h-2.6zM252.0 129.9h2.9v2.9h-2.9zM284.4 185.2h1.9v1.9h-1.9zM277.0 121.1h2.4v2.4h-2.4zM297.9 188.2h2.9v2.9h-2.9zM244.6 190.1h2.1v2.1h-2.1zM291.3 102.3h2.5v2.5h-2.5zM273.2 197.7h2.8v2.8h-2.8zM276.5 230.1h2.7v2.7h-2.7zM301.9 99.9h3.0v3.0h-3.0zM291.7 172.9h2.1v2.1h-2.1zM298.9 227.7h2.3v2.3h-2.3zM282.1 91.5h3.1v3.1h-3.1zM285.3 205.8h2.6v2.6h-2.6zM273.0 192.7h2.5v2.5h-2.5zM280.6 79.3h2.3v2.3h-2.3zM270.0 135.7h2.4v2.4h-2.4zM273.2 112.4h3.1v3.1h-3.1zM283.0 101.8h2.1v2.1h-2.1zM262.7 192.3h2.9v2.9h-2.9zM260.8 184.7h2.5v2.5h-2.5zM271.9 173.3h1.9v1.9h-1.9zM281.9 218.8h2.4v2.4h-2.4zM239.8 207.7h1.9v1.9h-1.9zM273.2 146.4h2.6v2.6h-2.6zM281.8 91.5h2.8v2.8h-2.8zM247.2 255.0h2.6v2.6h-2.6zM284.5 142.3h3.1v3.1h-3.1zM256.5 203.8h2.3v2.3h-2.3zM250.2 178.9h2.9v2.9h-2.9zM266.3 197.2h2.5v2.5h-2.5zM297.3 189.8h2.0v2.0h-2.0zM276.9 89.6h2.3v2.3h-2.3zM289.5 89.9h2.3v2.3h-2.3zM255.6 177.7h2.7v2.7h-2.7zM267.6 213.7h2.3v2.3h-2.3zM276.7 134.4h2.9v2.9h-2.9zM273.6 146.2h2.4v2.4h-2.4zM249.0 223.2h2.0v2.0h-2.0zM262.4 133.4h2.0v2.0h-2.0zM278.8 149.0h2.5v2.5h-2.5zM264.2 137.6h2.2v2.2h-2.2z" fill="#6a2a26"/><path d="M282.0 198.1h2.4v2.4h-2.4zM294.8 191.9h2.9v2.9h-2.9zM231.2 88.2h3.0v3.0h-3.0zM293.6 107.9h3.2v3.2h-3.2zM243.5 204.4h1.9v1.9h-1.9zM275.9 184.1h2.6v2.6h-2.6zM283.3 244.1h2.2v2.2h-2.2zM242.1 208.9h2.9v2.9h-2.9zM238.9 101.7h2.3v2.3h-2.3zM268.7 142.7h2.9v2.9h-2.9zM253.1 149.1h2.8v2.8h-2.8zM248.0 254.9h2.4v2.4h-2.4zM277.3 128.5h3.3v3.3h-3.3zM250.7 173.8h2.3v2.3h-2.3zM281.6 181.2h2.1v2.1h-2.1zM275.9 217.1h2.7v2.7h-2.7zM273.6 104.6h2.4v2.4h-2.4zM250.5 209.8h2.9v2.9h-2.9zM255.3 270.9h2.4v2.4h-2.4zM282.8 171.5h2.3v2.3h-2.3zM261.9 150.4h2.9v2.9h-2.9zM249.5 228.5h1.9v1.9h-1.9zM264.2 157.0h2.0v2.0h-2.0zM298.1 97.8h2.4v2.4h-2.4zM298.5 136.2h3.1v3.1h-3.1zM233.3 77.4h2.7v2.7h-2.7zM275.8 158.0h2.9v2.9h-2.9zM245.6 197.1h2.1v2.1h-2.1zM260.6 136.9h2.8v2.8h-2.8zM286.1 128.9h2.5v2.5h-2.5zM306.3 117.3h2.4v2.4h-2.4zM294.8 98.2h2.2v2.2h-2.2zM291.6 120.3h2.3v2.3h-2.3zM301.8 124.5h2.2v2.2h-2.2zM262.3 213.5h2.3v2.3h-2.3zM284.6 218.6h2.4v2.4h-2.4zM252.2 186.2h2.7v2.7h-2.7zM241.0 251.2h2.2v2.2h-2.2zM242.8 173.8h2.7v2.7h-2.7zM291.7 185.8h2.5v2.5h-2.5zM290.8 243.0h2.2v2.2h-2.2zM284.5 210.4h2.1v2.1h-2.1zM295.7 209.2h1.8v1.8h-1.8zM293.5 98.1h2.6v2.6h-2.6zM249.3 209.0h2.3v2.3h-2.3zM258.7 163.1h1.9v1.9h-1.9zM257.3 197.4h2.4v2.4h-2.4zM296.5 206.3h1.9v1.9h-1.9zM248.7 271.3h2.2v2.2h-2.2zM285.8 115.1h2.2v2.2h-2.2zM296.8 200.9h2.0v2.0h-2.0zM295.0 123.1h2.2v2.2h-2.2zM275.7 117.0h2.3v2.3h-2.3z" fill="#c05856"/><path d="M251.7 131.4h2.6v2.6h-2.6zM285.7 119.4h2.4v2.4h-2.4zM292.9 141.2h3.1v3.1h-3.1zM237.4 220.8h1.9v1.9h-1.9zM243.9 235.5h2.3v2.3h-2.3zM282.8 144.1h2.3v2.3h-2.3zM258.4 134.1h2.0v2.0h-2.0zM279.3 142.9h2.2v2.2h-2.2zM288.8 115.9h2.5v2.5h-2.5zM277.1 124.9h2.7v2.7h-2.7zM269.7 125.5h2.8v2.8h-2.8zM276.1 179.5h1.9v1.9h-1.9zM297.7 216.6h2.9v2.9h-2.9zM240.0 181.1h2.3v2.3h-2.3zM262.0 188.6h2.9v2.9h-2.9zM276.6 125.1h2.3v2.3h-2.3zM261.4 81.6h2.3v2.3h-2.3zM269.4 88.8h2.9v2.9h-2.9zM285.4 102.3h2.1v2.1h-2.1zM271.8 123.2h3.0v3.0h-3.0zM265.0 102.9h2.2v2.2h-2.2zM239.6 219.4h2.0v2.0h-2.0zM266.9 123.9h2.2v2.2h-2.2zM258.3 163.5h2.1v2.1h-2.1zM293.6 212.6h2.1v2.1h-2.1zM224.7 84.6h2.3v2.3h-2.3zM248.7 225.6h2.3v2.3h-2.3zM279.7 123.8h2.8v2.8h-2.8zM271.7 133.7h2.7v2.7h-2.7zM268.6 115.4h2.8v2.8h-2.8zM268.3 254.6h2.5v2.5h-2.5zM282.7 125.9h3.0v3.0h-3.0zM249.3 186.3h2.9v2.9h-2.9zM296.3 201.6h2.1v2.1h-2.1zM287.6 179.6h2.0v2.0h-2.0zM260.3 191.5h2.6v2.6h-2.6zM263.4 87.0h2.4v2.4h-2.4zM270.7 157.3h2.6v2.6h-2.6zM285.0 81.5h3.1v3.1h-3.1zM267.4 168.4h1.9v1.9h-1.9zM285.3 153.2h2.0v2.0h-2.0zM295.0 187.5h2.2v2.2h-2.2zM304.6 114.9h3.1v3.1h-3.1zM292.7 186.8h2.3v2.3h-2.3zM269.7 193.9h2.0v2.0h-2.0zM293.6 108.0h2.7v2.7h-2.7zM285.1 104.7h2.1v2.1h-2.1zM269.9 203.4h2.8v2.8h-2.8zM263.4 79.3h3.0v3.0h-3.0zM264.5 184.4h2.3v2.3h-2.3zM272.3 122.5h2.4v2.4h-2.4zM282.4 154.5h2.0v2.0h-2.0zM265.1 202.2h1.9v1.9h-1.9zM270.5 119.4h2.7v2.7h-2.7zM274.7 193.5h2.5v2.5h-2.5zM278.1 76.0h2.3v2.3h-2.3zM269.9 84.2h3.2v3.2h-3.2zM283.9 202.2h2.2v2.2h-2.2zM263.9 192.8h1.9v1.9h-1.9zM279.5 119.5h2.7v2.7h-2.7zM279.4 125.2h3.0v3.0h-3.0zM247.7 92.1h2.6v2.6h-2.6z" fill="#4a1a18"/><path d="M253.1 274.7h2.3v2.3h-2.3zM306.8 127.2h2.7v2.7h-2.7zM294.5 236.6h2.4v2.4h-2.4zM294.3 253.4h2.2v2.2h-2.2zM297.2 102.5h2.6v2.6h-2.6zM294.1 215.3h2.6v2.6h-2.6zM294.6 129.0h3.0v3.0h-3.0zM257.7 213.3h2.2v2.2h-2.2zM278.9 189.0h2.3v2.3h-2.3zM290.9 117.2h2.8v2.8h-2.8zM300.4 131.1h3.0v3.0h-3.0zM289.6 94.5h2.8v2.8h-2.8zM227.4 83.2h1.9v1.9h-1.9zM303.6 101.0h2.3v2.3h-2.3zM288.1 96.7h2.8v2.8h-2.8zM288.7 118.3h3.1v3.1h-3.1zM242.8 211.0h2.0v2.0h-2.0zM307.4 117.8h2.1v2.1h-2.1zM253.9 211.3h2.6v2.6h-2.6zM299.4 125.1h2.7v2.7h-2.7zM290.2 223.9h2.0v2.0h-2.0zM246.4 242.8h2.8v2.8h-2.8zM301.0 125.7h2.2v2.2h-2.2zM281.8 148.3h3.2v3.2h-3.2zM283.0 215.5h2.2v2.2h-2.2zM297.4 137.7h3.1v3.1h-3.1zM275.4 199.3h2.7v2.7h-2.7zM245.9 162.2h2.8v2.8h-2.8zM264.9 127.6h3.2v3.2h-3.2zM243.5 124.1h2.7v2.7h-2.7zM275.4 242.6h2.7v2.7h-2.7zM302.6 103.6h2.5v2.5h-2.5z" fill="#cc6660"/><path d="M273.9 147.9h2.8v2.8h-2.8zM269.8 173.9h2.2v2.2h-2.2zM277.5 237.6h2.8v2.8h-2.8zM267.8 144.5h3.0v3.0h-3.0zM294.2 189.3h2.5v2.5h-2.5zM255.1 235.5h2.6v2.6h-2.6zM285.0 130.6h2.7v2.7h-2.7zM261.9 131.6h2.8v2.8h-2.8zM290.3 268.8h2.4v2.4h-2.4zM291.4 176.5h2.2v2.2h-2.2zM253.5 266.8h2.8v2.8h-2.8zM238.4 228.7h2.6v2.6h-2.6zM270.2 117.2h2.7v2.7h-2.7zM278.9 117.0h3.1v3.1h-3.1zM299.1 193.0h2.1v2.1h-2.1zM243.3 264.7h2.3v2.3h-2.3zM299.4 217.8h2.0v2.0h-2.0zM249.7 230.0h2.5v2.5h-2.5zM285.7 182.7h2.1v2.1h-2.1zM295.5 231.3h2.6v2.6h-2.6zM249.8 248.8h2.9v2.9h-2.9zM286.3 220.8h2.7v2.7h-2.7zM251.3 169.0h2.3v2.3h-2.3zM275.4 204.1h2.5v2.5h-2.5zM251.4 182.7h2.6v2.6h-2.6zM241.1 202.6h2.3v2.3h-2.3zM277.3 166.9h2.2v2.2h-2.2zM288.5 155.1h2.4v2.4h-2.4zM272.5 137.3h2.3v2.3h-2.3zM251.8 250.7h2.8v2.8h-2.8zM270.3 108.9h3.0v3.0h-3.0zM282.1 88.4h3.2v3.2h-3.2zM244.2 172.0h2.5v2.5h-2.5zM237.7 222.0h2.2v2.2h-2.2zM286.2 222.0h2.5v2.5h-2.5zM253.3 191.1h2.9v2.9h-2.9zM275.0 122.2h2.4v2.4h-2.4zM268.9 117.3h2.2v2.2h-2.2zM257.9 133.9h2.5v2.5h-2.5zM274.6 142.8h2.9v2.9h-2.9zM255.0 152.2h1.9v1.9h-1.9zM283.2 266.0h2.4v2.4h-2.4zM280.4 115.4h2.5v2.5h-2.5zM276.2 116.3h2.4v2.4h-2.4zM276.5 164.2h2.7v2.7h-2.7zM281.9 180.3h2.3v2.3h-2.3zM275.2 127.1h2.7v2.7h-2.7zM254.5 179.4h2.8v2.8h-2.8zM245.3 80.4h2.7v2.7h-2.7zM277.6 120.3h3.2v3.2h-3.2zM250.4 180.7h2.7v2.7h-2.7zM262.3 220.5h2.5v2.5h-2.5zM257.6 167.6h2.5v2.5h-2.5zM284.6 151.0h2.7v2.7h-2.7zM297.1 185.4h2.7v2.7h-2.7zM237.4 220.7h2.5v2.5h-2.5zM285.1 90.9h3.0v3.0h-3.0zM258.9 151.8h2.6v2.6h-2.6zM244.0 273.5h2.2v2.2h-2.2zM291.9 208.3h2.0v2.0h-2.0zM263.2 153.2h2.3v2.3h-2.3zM300.3 248.1h2.6v2.6h-2.6z" fill="#5a2420"/><path d="M247.8 184.5h2.0v2.0h-2.0zM278.9 142.0h2.7v2.7h-2.7zM282.1 119.7h2.7v2.7h-2.7zM277.6 104.6h3.0v3.0h-3.0zM288.3 126.7h2.7v2.7h-2.7zM286.2 93.0h2.7v2.7h-2.7zM295.4 108.0h2.4v2.4h-2.4zM240.8 94.8h2.8v2.8h-2.8zM264.7 100.8h3.0v3.0h-3.0zM254.2 161.2h2.9v2.9h-2.9zM233.6 107.1h2.9v2.9h-2.9zM283.0 139.3h2.1v2.1h-2.1zM252.4 121.8h2.9v2.9h-2.9zM247.4 205.6h2.2v2.2h-2.2zM294.2 121.8h2.5v2.5h-2.5zM285.1 111.4h2.3v2.3h-2.3zM241.2 183.7h1.9v1.9h-1.9zM276.9 191.4h2.8v2.8h-2.8zM274.7 163.2h2.5v2.5h-2.5zM281.3 82.5h2.8v2.8h-2.8zM298.0 133.0h2.5v2.5h-2.5zM282.8 149.8h2.0v2.0h-2.0zM296.3 126.4h2.1v2.1h-2.1zM272.3 146.6h2.1v2.1h-2.1zM265.3 170.8h2.5v2.5h-2.5zM247.4 229.9h2.0v2.0h-2.0zM303.0 103.0h2.2v2.2h-2.2zM257.0 154.8h2.1v2.1h-2.1zM243.0 251.4h2.3v2.3h-2.3zM280.1 200.5h2.3v2.3h-2.3zM284.5 236.3h2.9v2.9h-2.9zM270.6 133.2h2.3v2.3h-2.3zM275.3 270.5h2.9v2.9h-2.9zM276.2 222.7h2.1v2.1h-2.1zM280.6 234.5h2.8v2.8h-2.8zM281.6 129.8h3.3v3.3h-3.3zM292.1 104.2h3.1v3.1h-3.1zM263.7 181.9h2.9v2.9h-2.9zM251.9 270.6h2.7v2.7h-2.7zM278.3 216.7h2.4v2.4h-2.4zM296.4 229.0h2.7v2.7h-2.7zM276.3 215.3h2.0v2.0h-2.0zM285.2 163.3h1.9v1.9h-1.9zM306.4 132.3h2.9v2.9h-2.9zM282.7 85.2h2.3v2.3h-2.3z" fill="#2a1010"/><path d="M283.4 141.2h2.6v2.6h-2.6zM243.1 178.6h2.6v2.6h-2.6zM283.0 143.4h2.3v2.3h-2.3zM280.9 115.4h3.1v3.1h-3.1zM245.8 82.9h2.8v2.8h-2.8zM254.4 204.4h2.1v2.1h-2.1zM271.6 119.3h3.1v3.1h-3.1zM275.7 267.3h2.1v2.1h-2.1zM272.3 128.5h3.2v3.2h-3.2zM275.8 122.8h2.6v2.6h-2.6zM258.7 211.5h2.9v2.9h-2.9zM280.8 170.7h2.8v2.8h-2.8zM238.2 239.8h2.6v2.6h-2.6zM290.3 244.6h2.2v2.2h-2.2zM288.9 196.3h2.5v2.5h-2.5zM252.2 179.7h2.1v2.1h-2.1zM267.4 124.2h2.9v2.9h-2.9zM286.9 200.5h2.7v2.7h-2.7zM240.4 202.6h2.7v2.7h-2.7zM244.9 82.7h2.2v2.2h-2.2zM276.1 122.6h2.7v2.7h-2.7zM274.7 148.8h2.0v2.0h-2.0zM295.9 231.4h2.2v2.2h-2.2zM261.2 148.3h2.1v2.1h-2.1zM282.4 109.3h2.4v2.4h-2.4zM269.8 149.3h2.8v2.8h-2.8zM262.8 135.1h2.3v2.3h-2.3zM251.9 218.8h2.2v2.2h-2.2zM250.9 159.2h1.9v1.9h-1.9zM264.0 154.5h2.2v2.2h-2.2zM260.1 243.8h2.0v2.0h-2.0zM269.9 134.8h2.6v2.6h-2.6zM274.2 201.9h2.1v2.1h-2.1zM254.1 240.8h2.2v2.2h-2.2zM280.5 219.0h2.9v2.9h-2.9zM298.3 268.4h1.9v1.9h-1.9zM225.5 87.2h2.7v2.7h-2.7zM269.9 131.8h2.2v2.2h-2.2zM275.7 142.1h3.2v3.2h-3.2zM276.7 203.6h2.6v2.6h-2.6zM300.2 261.6h1.8v1.8h-1.8zM268.2 125.1h3.3v3.3h-3.3zM266.8 200.2h2.3v2.3h-2.3zM288.8 147.0h3.2v3.2h-3.2zM245.7 187.7h2.4v2.4h-2.4zM278.5 157.1h2.5v2.5h-2.5zM261.1 188.2h2.0v2.0h-2.0zM239.0 238.2h2.1v2.1h-2.1zM285.3 137.9h3.0v3.0h-3.0zM268.7 147.6h2.7v2.7h-2.7zM273.4 211.9h2.2v2.2h-2.2zM272.9 105.2h3.0v3.0h-3.0zM289.1 236.3h2.4v2.4h-2.4zM279.7 112.9h3.2v3.2h-3.2zM261.4 181.2h2.8v2.8h-2.8zM263.1 177.2h2.4v2.4h-2.4z" fill="#4a1c1a"/><path d="M289.4 235.3h2.1v2.1h-2.1zM282.5 203.8h2.0v2.0h-2.0zM270.2 195.0h2.4v2.4h-2.4zM255.8 177.0h2.3v2.3h-2.3zM285.4 102.7h2.9v2.9h-2.9zM268.3 138.3h2.7v2.7h-2.7zM282.3 197.9h2.6v2.6h-2.6zM252.7 121.8h2.8v2.8h-2.8zM248.1 78.3h2.6v2.6h-2.6zM248.1 180.2h2.3v2.3h-2.3zM276.0 186.2h1.9v1.9h-1.9zM292.4 199.1h2.7v2.7h-2.7zM247.1 233.7h2.0v2.0h-2.0zM294.2 230.3h2.1v2.1h-2.1zM300.9 131.8h3.1v3.1h-3.1zM286.9 193.0h2.9v2.9h-2.9zM258.7 118.1h2.0v2.0h-2.0zM241.7 201.1h2.1v2.1h-2.1zM284.9 118.9h2.2v2.2h-2.2zM292.1 197.0h2.3v2.3h-2.3zM276.4 100.0h2.7v2.7h-2.7zM255.9 167.1h2.2v2.2h-2.2zM264.1 201.6h2.3v2.3h-2.3zM292.9 175.7h2.1v2.1h-2.1zM254.4 188.6h2.1v2.1h-2.1zM262.4 180.8h2.3v2.3h-2.3zM288.2 177.8h1.9v1.9h-1.9zM272.6 217.7h2.6v2.6h-2.6zM264.6 169.4h2.9v2.9h-2.9zM229.4 81.9h2.2v2.2h-2.2zM251.0 201.3h2.1v2.1h-2.1zM272.7 133.7h2.4v2.4h-2.4zM287.2 245.8h2.0v2.0h-2.0zM277.0 204.7h2.6v2.6h-2.6zM263.3 168.7h2.5v2.5h-2.5zM245.9 204.0h1.9v1.9h-1.9zM279.2 218.4h2.0v2.0h-2.0zM286.9 189.4h2.7v2.7h-2.7zM292.0 106.0h2.1v2.1h-2.1zM269.2 98.3h2.5v2.5h-2.5zM286.9 111.8h2.6v2.6h-2.6zM271.0 130.1h2.9v2.9h-2.9zM301.0 109.9h2.2v2.2h-2.2zM256.6 156.2h2.8v2.8h-2.8zM282.3 97.6h2.3v2.3h-2.3zM271.3 208.2h2.6v2.6h-2.6zM255.2 177.5h2.8v2.8h-2.8zM297.3 241.1h2.6v2.6h-2.6zM270.2 98.6h2.4v2.4h-2.4zM278.9 207.9h2.3v2.3h-2.3zM276.5 164.8h2.8v2.8h-2.8zM243.8 238.5h2.3v2.3h-2.3zM245.1 247.1h2.8v2.8h-2.8zM277.7 237.6h2.2v2.2h-2.2zM292.0 215.8h2.1v2.1h-2.1zM290.6 106.0h2.6v2.6h-2.6zM290.0 122.5h2.1v2.1h-2.1zM271.7 240.9h1.9v1.9h-1.9zM290.1 235.2h1.9v1.9h-1.9zM286.4 203.8h2.6v2.6h-2.6zM269.0 135.4h2.4v2.4h-2.4zM285.2 92.1h2.6v2.6h-2.6zM237.1 204.6h2.3v2.3h-2.3zM255.5 238.4h2.4v2.4h-2.4zM250.3 190.3h2.5v2.5h-2.5zM238.2 188.3h2.7v2.7h-2.7zM297.0 100.9h2.3v2.3h-2.3zM265.8 151.4h2.3v2.3h-2.3zM266.9 206.1h1.9v1.9h-1.9z" fill="#a43432"/><path d="M134.7 227.3h2.6v2.6h-2.6zM212.7 194.7h3.3v3.3h-3.3zM153.8 220.1h2.6v2.6h-2.6zM153.4 220.5h2.6v2.6h-2.6zM160.9 216.2h3.0v3.0h-3.0zM213.5 197.6h2.4v2.4h-2.4zM209.0 197.8h2.9v2.9h-2.9zM172.2 210.3h2.9v2.9h-2.9zM202.1 201.9h2.5v2.5h-2.5zM128.0 233.0h2.5v2.5h-2.5zM219.5 194.2h2.4v2.4h-2.4zM165.0 213.7h2.7v2.7h-2.7zM165.7 215.4h2.3v2.3h-2.3zM129.9 233.1h2.6v2.6h-2.6zM134.9 229.6h2.8v2.8h-2.8zM212.8 196.0h3.0v3.0h-3.0zM150.2 220.4h2.4v2.4h-2.4zM194.2 205.3h2.9v2.9h-2.9zM153.0 220.9h2.5v2.5h-2.5zM218.0 198.4h2.5v2.5h-2.5zM171.5 210.6h2.8v2.8h-2.8z" fill="#ee6a58"/><path d="M276.2 99.7h2.4v2.4h-2.4zM272.8 79.5h2.4v2.4h-2.4zM269.4 194.3h2.4v2.4h-2.4zM233.3 98.4h3.3v3.3h-3.3zM223.8 80.3h2.1v2.1h-2.1zM281.4 189.9h2.8v2.8h-2.8zM287.5 186.1h2.3v2.3h-2.3zM251.5 163.4h1.9v1.9h-1.9zM251.8 113.0h2.8v2.8h-2.8zM277.3 129.7h3.0v3.0h-3.0zM252.0 115.6h2.6v2.6h-2.6zM289.2 237.1h2.1v2.1h-2.1zM247.9 254.3h2.1v2.1h-2.1zM274.1 100.2h2.9v2.9h-2.9zM276.9 197.7h2.3v2.3h-2.3zM248.8 108.5h2.6v2.6h-2.6zM253.1 261.7h2.9v2.9h-2.9zM247.1 225.7h2.1v2.1h-2.1zM275.1 176.6h2.0v2.0h-2.0zM253.9 156.6h2.2v2.2h-2.2zM269.9 177.4h2.4v2.4h-2.4zM252.8 242.2h2.7v2.7h-2.7zM224.2 80.2h2.7v2.7h-2.7zM242.4 269.5h2.2v2.2h-2.2zM266.2 187.5h2.3v2.3h-2.3zM255.4 180.4h2.9v2.9h-2.9z" fill="#c08c88"/><path d="M196.6 203.5h2.3v2.3h-2.3zM167.6 212.2h3.0v3.0h-3.0zM138.2 229.1h3.2v3.2h-3.2zM142.9 225.7h2.8v2.8h-2.8zM168.1 213.7h2.5v2.5h-2.5zM175.3 209.2h2.4v2.4h-2.4zM202.0 199.8h2.5v2.5h-2.5zM169.9 210.2h2.7v2.7h-2.7zM200.7 198.0h3.0v3.0h-3.0zM181.8 207.0h3.3v3.3h-3.3zM216.8 195.8h2.8v2.8h-2.8zM135.2 228.9h2.8v2.8h-2.8zM130.4 235.4h2.6v2.6h-2.6zM228.2 193.5h2.8v2.8h-2.8z" fill="#e86050"/><path d="M285.7 90.9h2.4v2.4h-2.4zM285.3 135.1h2.4v2.4h-2.4zM248.2 196.9h2.2v2.2h-2.2zM302.1 111.8h2.0v2.0h-2.0zM289.6 229.3h2.3v2.3h-2.3zM238.2 202.4h2.0v2.0h-2.0zM238.1 226.1h2.3v2.3h-2.3zM242.2 262.1h1.9v1.9h-1.9zM247.6 163.8h2.8v2.8h-2.8zM296.9 94.8h2.6v2.6h-2.6zM292.6 204.0h2.9v2.9h-2.9zM252.7 149.0h2.4v2.4h-2.4zM281.2 124.9h2.4v2.4h-2.4zM242.0 195.1h2.1v2.1h-2.1zM238.9 229.0h2.7v2.7h-2.7zM283.5 221.8h2.8v2.8h-2.8zM288.6 161.2h2.2v2.2h-2.2zM277.0 150.6h2.0v2.0h-2.0zM307.5 115.3h2.5v2.5h-2.5zM290.2 107.6h3.1v3.1h-3.1zM254.2 252.9h2.8v2.8h-2.8zM294.7 183.3h2.6v2.6h-2.6zM264.7 189.8h2.7v2.7h-2.7zM255.0 249.3h2.0v2.0h-2.0zM299.1 244.8h2.6v2.6h-2.6zM268.9 92.1h2.4v2.4h-2.4zM277.6 147.1h2.9v2.9h-2.9zM300.5 124.6h2.8v2.8h-2.8zM276.5 145.5h2.1v2.1h-2.1zM283.1 113.8h2.7v2.7h-2.7zM251.8 180.6h2.4v2.4h-2.4zM285.3 133.8h3.0v3.0h-3.0zM224.8 77.9h2.8v2.8h-2.8zM272.3 113.7h3.0v3.0h-3.0zM266.0 168.0h2.7v2.7h-2.7zM245.2 256.8h2.6v2.6h-2.6zM254.3 154.9h2.0v2.0h-2.0zM294.1 120.0h2.4v2.4h-2.4zM284.6 149.7h2.2v2.2h-2.2zM287.0 101.9h3.2v3.2h-3.2zM263.3 187.4h2.5v2.5h-2.5zM289.3 120.8h2.5v2.5h-2.5zM281.6 200.3h2.7v2.7h-2.7zM267.8 263.4h2.3v2.3h-2.3zM238.2 91.9h3.2v3.2h-3.2zM246.8 161.8h2.4v2.4h-2.4zM294.3 177.6h1.9v1.9h-1.9zM306.5 129.2h2.9v2.9h-2.9zM288.4 210.0h2.8v2.8h-2.8zM266.5 223.1h1.9v1.9h-1.9zM232.9 78.0h2.9v2.9h-2.9zM274.7 127.2h2.7v2.7h-2.7zM245.7 250.9h2.9v2.9h-2.9zM267.2 137.8h2.0v2.0h-2.0zM239.9 209.2h2.0v2.0h-2.0zM253.7 194.7h2.4v2.4h-2.4zM304.4 129.7h2.1v2.1h-2.1zM295.7 121.4h2.2v2.2h-2.2zM284.1 111.0h3.0v3.0h-3.0zM285.0 108.7h3.0v3.0h-3.0zM255.8 188.5h2.6v2.6h-2.6zM244.4 271.2h2.6v2.6h-2.6zM277.8 151.3h2.4v2.4h-2.4zM272.8 120.1h2.4v2.4h-2.4zM272.3 111.7h2.8v2.8h-2.8zM288.7 202.0h2.1v2.1h-2.1zM280.9 152.9h2.8v2.8h-2.8z" fill="#681f22"/><path d="M273.2 98.0h3.2v3.2h-3.2zM279.6 208.4h2.3v2.3h-2.3zM249.8 199.3h2.7v2.7h-2.7zM239.6 195.2h2.3v2.3h-2.3zM262.3 199.4h1.9v1.9h-1.9zM228.6 73.5h2.1v2.1h-2.1zM264.1 185.3h2.1v2.1h-2.1zM245.7 179.8h2.2v2.2h-2.2zM262.5 161.8h1.9v1.9h-1.9zM278.4 126.4h2.9v2.9h-2.9zM268.9 138.5h2.5v2.5h-2.5zM256.6 188.5h2.2v2.2h-2.2zM267.4 180.2h2.5v2.5h-2.5zM277.8 175.9h2.0v2.0h-2.0zM237.5 240.8h2.4v2.4h-2.4zM246.8 194.7h2.7v2.7h-2.7zM274.0 146.9h2.7v2.7h-2.7zM254.3 152.3h2.3v2.3h-2.3zM267.3 258.6h2.8v2.8h-2.8zM285.3 217.2h2.8v2.8h-2.8zM283.5 135.1h2.9v2.9h-2.9zM249.6 227.9h2.3v2.3h-2.3zM284.6 123.8h2.6v2.6h-2.6zM255.3 205.0h2.7v2.7h-2.7zM263.4 155.0h2.6v2.6h-2.6zM270.2 120.3h2.2v2.2h-2.2zM275.1 230.8h2.4v2.4h-2.4zM262.6 169.7h2.2v2.2h-2.2zM280.7 219.6h2.5v2.5h-2.5zM241.3 229.9h2.2v2.2h-2.2zM246.1 194.0h2.8v2.8h-2.8zM267.8 222.4h2.0v2.0h-2.0zM257.5 223.2h2.4v2.4h-2.4zM274.2 188.4h2.0v2.0h-2.0zM266.6 270.6h2.6v2.6h-2.6zM280.4 110.7h2.4v2.4h-2.4zM260.7 192.5h2.4v2.4h-2.4zM281.5 127.9h2.7v2.7h-2.7zM280.6 96.8h3.0v3.0h-3.0zM257.6 180.8h2.1v2.1h-2.1zM273.3 132.0h2.8v2.8h-2.8zM242.8 252.7h2.2v2.2h-2.2zM247.6 203.7h2.9v2.9h-2.9zM282.3 210.6h2.8v2.8h-2.8zM223.9 74.4h2.3v2.3h-2.3zM259.0 159.9h2.0v2.0h-2.0zM269.8 135.1h2.3v2.3h-2.3zM252.1 137.2h2.3v2.3h-2.3zM285.2 180.3h2.2v2.2h-2.2zM300.1 197.8h2.0v2.0h-2.0z" fill="#622825"/><path d="M268.1 152.5h2.6v2.6h-2.6zM289.0 165.2h2.9v2.9h-2.9zM259.6 216.4h2.2v2.2h-2.2zM248.3 88.7h1.9v1.9h-1.9zM245.4 174.9h2.2v2.2h-2.2zM282.6 151.4h2.5v2.5h-2.5zM279.1 130.2h2.3v2.3h-2.3zM289.5 115.2h2.2v2.2h-2.2zM298.0 262.2h2.4v2.4h-2.4zM253.2 253.4h2.4v2.4h-2.4zM241.0 104.9h2.3v2.3h-2.3zM285.2 205.0h2.8v2.8h-2.8zM276.7 208.9h2.0v2.0h-2.0zM257.1 233.2h2.3v2.3h-2.3zM302.6 133.5h3.0v3.0h-3.0zM240.2 112.2h3.0v3.0h-3.0zM300.1 119.2h3.2v3.2h-3.2zM275.4 180.1h2.8v2.8h-2.8zM239.3 250.5h2.5v2.5h-2.5zM271.2 125.2h2.5v2.5h-2.5zM275.4 152.4h2.7v2.7h-2.7zM255.2 263.7h2.0v2.0h-2.0zM293.7 125.1h3.2v3.2h-3.2zM284.2 130.0h3.1v3.1h-3.1zM287.2 198.5h2.0v2.0h-2.0zM303.0 110.7h2.9v2.9h-2.9zM299.1 191.3h2.4v2.4h-2.4zM289.1 182.0h1.9v1.9h-1.9zM281.1 158.6h1.8v1.8h-1.8zM292.3 173.1h2.9v2.9h-2.9zM291.1 120.0h2.4v2.4h-2.4zM269.4 219.5h2.2v2.2h-2.2zM270.0 145.2h2.6v2.6h-2.6zM271.0 113.2h3.0v3.0h-3.0zM280.2 127.2h2.2v2.2h-2.2zM275.5 214.2h1.9v1.9h-1.9zM292.4 184.4h2.4v2.4h-2.4zM282.0 95.9h2.8v2.8h-2.8zM250.5 198.0h2.1v2.1h-2.1zM274.4 128.1h2.6v2.6h-2.6zM266.5 107.3h2.4v2.4h-2.4zM269.5 144.8h2.7v2.7h-2.7zM252.3 243.8h2.6v2.6h-2.6zM283.3 148.9h2.2v2.2h-2.2zM294.6 191.7h2.3v2.3h-2.3zM255.0 199.7h1.8v1.8h-1.8zM285.7 108.0h2.1v2.1h-2.1zM250.1 203.0h2.4v2.4h-2.4zM257.6 134.0h2.8v2.8h-2.8zM286.9 116.4h2.4v2.4h-2.4zM266.5 185.0h2.9v2.9h-2.9z" fill="#3a1514"/><path d="M269.4 202.0h2.7v2.7h-2.7zM281.1 97.2h2.3v2.3h-2.3zM292.9 127.2h2.7v2.7h-2.7zM227.8 76.7h2.6v2.6h-2.6zM276.9 151.5h2.1v2.1h-2.1zM286.9 96.6h2.2v2.2h-2.2zM262.6 145.4h3.0v3.0h-3.0zM265.2 140.6h3.0v3.0h-3.0zM284.6 131.3h2.3v2.3h-2.3zM260.0 250.5h1.8v1.8h-1.8zM243.7 244.7h2.4v2.4h-2.4zM298.8 132.4h2.6v2.6h-2.6zM245.5 181.1h2.5v2.5h-2.5zM293.8 201.2h2.3v2.3h-2.3zM301.2 101.9h2.1v2.1h-2.1zM254.4 152.6h2.6v2.6h-2.6zM302.3 130.4h3.2v3.2h-3.2zM236.4 232.2h2.9v2.9h-2.9zM274.6 100.8h2.8v2.8h-2.8zM239.6 260.7h2.8v2.8h-2.8zM254.3 230.6h2.8v2.8h-2.8zM252.4 157.1h1.9v1.9h-1.9zM298.3 230.3h2.0v2.0h-2.0zM294.3 241.1h2.2v2.2h-2.2zM275.4 215.4h2.7v2.7h-2.7zM253.1 147.6h2.5v2.5h-2.5zM253.0 240.3h2.0v2.0h-2.0zM290.5 101.3h2.2v2.2h-2.2zM248.1 158.5h2.3v2.3h-2.3zM295.1 125.9h2.7v2.7h-2.7zM286.5 150.6h2.2v2.2h-2.2zM278.0 170.6h2.8v2.8h-2.8zM241.2 245.7h2.1v2.1h-2.1zM266.0 198.6h2.3v2.3h-2.3zM259.8 155.9h2.3v2.3h-2.3zM286.5 98.0h2.6v2.6h-2.6zM299.2 111.6h3.0v3.0h-3.0zM288.3 165.4h2.7v2.7h-2.7zM260.4 238.3h2.8v2.8h-2.8zM291.6 200.4h2.5v2.5h-2.5zM245.9 272.1h2.9v2.9h-2.9zM251.6 135.5h2.6v2.6h-2.6zM277.1 153.1h2.2v2.2h-2.2zM243.7 234.9h2.5v2.5h-2.5zM274.6 215.7h2.8v2.8h-2.8zM307.6 113.0h2.2v2.2h-2.2zM247.3 159.4h2.9v2.9h-2.9zM262.0 133.1h2.5v2.5h-2.5zM289.4 90.0h2.6v2.6h-2.6zM256.8 169.6h2.0v2.0h-2.0zM258.2 274.8h2.1v2.1h-2.1zM264.2 206.0h2.5v2.5h-2.5zM272.6 165.0h2.4v2.4h-2.4zM247.9 219.6h2.0v2.0h-2.0zM238.0 223.6h2.7v2.7h-2.7zM285.7 110.4h2.5v2.5h-2.5zM281.2 239.3h2.9v2.9h-2.9zM255.6 178.1h2.7v2.7h-2.7zM272.0 138.7h3.2v3.2h-3.2zM261.9 171.3h2.3v2.3h-2.3zM289.9 159.0h2.6v2.6h-2.6zM283.5 166.5h2.1v2.1h-2.1zM298.3 104.7h2.0v2.0h-2.0zM304.5 102.8h2.9v2.9h-2.9zM294.8 242.4h2.0v2.0h-2.0zM267.5 151.4h2.4v2.4h-2.4zM289.4 112.4h2.9v2.9h-2.9zM300.1 115.0h2.9v2.9h-2.9zM292.9 124.5h2.8v2.8h-2.8zM297.8 114.7h3.1v3.1h-3.1zM260.6 154.4h2.6v2.6h-2.6zM244.0 253.6h1.9v1.9h-1.9zM263.2 259.7h2.6v2.6h-2.6zM245.0 165.5h2.8v2.8h-2.8zM294.6 120.9h2.1v2.1h-2.1zM298.3 223.4h2.9v2.9h-2.9zM245.2 265.2h2.8v2.8h-2.8zM271.6 216.8h2.1v2.1h-2.1zM299.9 116.9h2.6v2.6h-2.6z" fill="#a84040"/><path d="M273.9 147.3h2.0v2.0h-2.0zM287.9 147.1h2.7v2.7h-2.7zM252.3 193.2h2.8v2.8h-2.8zM263.5 93.7h2.9v2.9h-2.9zM285.6 210.8h2.7v2.7h-2.7zM282.4 88.9h2.9v2.9h-2.9zM241.2 102.1h2.9v2.9h-2.9zM267.4 126.0h2.7v2.7h-2.7zM250.7 246.7h2.5v2.5h-2.5zM253.9 273.5h2.7v2.7h-2.7zM252.4 160.2h2.3v2.3h-2.3zM267.8 161.3h2.1v2.1h-2.1zM261.9 240.0h2.4v2.4h-2.4zM271.7 151.2h2.6v2.6h-2.6zM276.5 148.2h2.8v2.8h-2.8zM254.8 179.9h1.9v1.9h-1.9zM264.5 187.7h2.0v2.0h-2.0zM244.8 117.5h3.1v3.1h-3.1zM275.5 147.9h2.9v2.9h-2.9zM296.5 232.6h2.0v2.0h-2.0zM277.2 97.7h2.2v2.2h-2.2zM275.9 116.9h2.2v2.2h-2.2zM271.3 180.2h2.3v2.3h-2.3zM251.4 129.2h2.7v2.7h-2.7zM269.8 80.8h2.2v2.2h-2.2zM284.0 82.7h2.9v2.9h-2.9zM254.6 131.8h2.5v2.5h-2.5zM244.3 176.4h2.3v2.3h-2.3zM238.3 95.2h2.4v2.4h-2.4zM277.7 182.6h2.5v2.5h-2.5zM270.5 215.8h2.8v2.8h-2.8zM281.4 92.2h2.8v2.8h-2.8zM246.0 247.6h2.9v2.9h-2.9zM229.4 85.8h2.2v2.2h-2.2zM255.8 184.4h2.9v2.9h-2.9zM252.3 195.9h2.5v2.5h-2.5zM253.0 129.4h2.5v2.5h-2.5zM238.0 104.1h2.1v2.1h-2.1zM296.7 225.3h2.7v2.7h-2.7zM297.2 186.8h1.9v1.9h-1.9zM262.3 86.5h2.6v2.6h-2.6zM266.5 128.5h2.0v2.0h-2.0zM256.5 122.1h3.0v3.0h-3.0z" fill="#aca6af"/><path d="M242.5 105.9h2.7v2.7h-2.7zM274.7 114.5h2.7v2.7h-2.7zM266.7 168.1h2.2v2.2h-2.2zM262.0 240.3h2.0v2.0h-2.0zM258.6 125.1h2.8v2.8h-2.8zM281.2 191.4h1.9v1.9h-1.9zM248.6 193.9h2.3v2.3h-2.3zM261.0 189.4h2.0v2.0h-2.0zM272.1 177.0h2.3v2.3h-2.3zM252.7 157.2h2.9v2.9h-2.9zM258.0 145.6h2.9v2.9h-2.9zM247.2 181.1h2.9v2.9h-2.9zM263.6 186.9h2.2v2.2h-2.2zM292.9 179.5h2.7v2.7h-2.7zM266.9 79.9h2.2v2.2h-2.2zM265.2 180.6h2.7v2.7h-2.7zM295.1 234.3h2.0v2.0h-2.0zM254.4 130.4h1.9v1.9h-1.9zM247.4 205.3h2.1v2.1h-2.1zM269.4 92.9h2.8v2.8h-2.8zM238.3 217.5h2.5v2.5h-2.5zM255.8 140.0h2.3v2.3h-2.3zM294.8 119.4h2.9v2.9h-2.9zM273.5 213.0h2.2v2.2h-2.2zM289.5 220.6h2.2v2.2h-2.2zM264.6 146.5h2.8v2.8h-2.8zM250.9 135.7h2.4v2.4h-2.4zM291.7 117.1h3.2v3.2h-3.2zM229.8 77.6h1.9v1.9h-1.9zM265.3 146.8h2.2v2.2h-2.2zM249.4 113.7h3.0v3.0h-3.0zM284.4 173.4h2.7v2.7h-2.7zM265.4 154.6h2.5v2.5h-2.5zM248.3 129.7h2.8v2.8h-2.8zM290.5 117.5h2.9v2.9h-2.9zM298.7 198.4h2.2v2.2h-2.2zM247.2 166.8h2.0v2.0h-2.0zM227.7 77.2h2.6v2.6h-2.6zM262.5 172.7h2.6v2.6h-2.6z" fill="#7d7780"/><path d="M255.1 200.4h2.3v2.3h-2.3zM275.9 200.5h2.4v2.4h-2.4zM261.1 212.1h2.3v2.3h-2.3zM294.3 146.7h2.6v2.6h-2.6zM282.6 144.3h2.7v2.7h-2.7zM243.3 266.2h1.9v1.9h-1.9zM301.4 103.6h2.0v2.0h-2.0zM265.9 78.0h3.2v3.2h-3.2zM268.7 142.0h2.2v2.2h-2.2zM255.9 255.4h2.4v2.4h-2.4zM280.2 129.3h3.0v3.0h-3.0zM275.2 207.4h2.2v2.2h-2.2zM244.7 190.5h2.4v2.4h-2.4zM288.2 245.8h2.5v2.5h-2.5zM287.5 219.9h1.9v1.9h-1.9zM236.6 244.2h2.2v2.2h-2.2zM242.3 216.2h1.9v1.9h-1.9zM253.8 174.7h2.3v2.3h-2.3zM291.5 193.1h2.3v2.3h-2.3zM271.6 113.8h2.9v2.9h-2.9zM276.7 119.0h2.1v2.1h-2.1zM239.5 192.6h2.2v2.2h-2.2zM269.4 168.9h2.5v2.5h-2.5zM291.6 90.3h2.0v2.0h-2.0zM279.6 165.3h2.4v2.4h-2.4zM274.8 147.0h2.4v2.4h-2.4zM283.0 94.0h3.0v3.0h-3.0zM250.7 151.5h2.4v2.4h-2.4zM277.5 100.8h2.9v2.9h-2.9zM284.4 244.9h2.5v2.5h-2.5zM263.2 150.8h2.1v2.1h-2.1zM259.6 199.3h2.0v2.0h-2.0zM294.7 126.5h2.2v2.2h-2.2zM284.9 109.7h2.5v2.5h-2.5zM259.5 150.2h2.4v2.4h-2.4zM286.2 73.4h2.8v2.8h-2.8zM228.6 74.2h2.0v2.0h-2.0zM272.7 187.7h2.5v2.5h-2.5zM277.1 213.3h2.8v2.8h-2.8zM239.1 220.3h2.1v2.1h-2.1zM279.0 267.9h2.8v2.8h-2.8zM277.6 152.1h2.6v2.6h-2.6zM272.4 182.9h2.7v2.7h-2.7zM237.5 102.1h3.1v3.1h-3.1zM288.3 145.4h2.5v2.5h-2.5zM249.1 228.0h2.5v2.5h-2.5zM255.0 227.2h2.1v2.1h-2.1zM271.7 212.4h2.9v2.9h-2.9zM266.3 173.8h2.5v2.5h-2.5zM283.7 231.8h2.3v2.3h-2.3zM258.8 150.4h2.8v2.8h-2.8zM294.4 228.2h2.3v2.3h-2.3zM298.7 105.7h2.6v2.6h-2.6zM297.0 95.4h2.7v2.7h-2.7zM237.4 238.7h2.2v2.2h-2.2zM299.2 200.1h2.0v2.0h-2.0zM294.3 192.1h2.2v2.2h-2.2zM304.2 121.5h2.2v2.2h-2.2zM294.0 220.5h1.9v1.9h-1.9z" fill="#b84846"/><path d="M295.9 133.6h2.3v2.3h-2.3zM269.7 148.9h3.1v3.1h-3.1zM252.9 243.5h2.5v2.5h-2.5zM271.0 131.6h2.1v2.1h-2.1zM246.4 78.6h2.8v2.8h-2.8zM290.7 116.5h2.3v2.3h-2.3zM294.9 232.0h2.6v2.6h-2.6zM291.2 103.2h2.6v2.6h-2.6zM283.1 102.5h2.4v2.4h-2.4zM254.6 251.4h2.1v2.1h-2.1zM250.8 176.0h2.5v2.5h-2.5zM290.5 100.5h2.4v2.4h-2.4zM303.1 127.9h2.1v2.1h-2.1zM290.0 247.6h2.6v2.6h-2.6zM292.4 129.5h3.1v3.1h-3.1zM271.8 194.6h2.0v2.0h-2.0zM292.7 119.3h2.8v2.8h-2.8zM294.0 123.4h2.8v2.8h-2.8zM245.7 250.8h2.4v2.4h-2.4zM271.0 148.7h2.0v2.0h-2.0zM284.6 151.7h2.8v2.8h-2.8zM296.6 103.7h2.7v2.7h-2.7zM285.5 169.4h2.0v2.0h-2.0zM270.7 180.9h2.2v2.2h-2.2zM278.9 222.3h2.5v2.5h-2.5zM271.6 191.0h2.2v2.2h-2.2zM242.8 110.4h3.3v3.3h-3.3zM268.4 180.6h2.3v2.3h-2.3zM299.0 137.1h2.6v2.6h-2.6zM269.5 221.5h2.3v2.3h-2.3zM265.8 137.5h3.1v3.1h-3.1zM267.4 206.5h2.0v2.0h-2.0zM287.8 118.0h2.9v2.9h-2.9zM299.0 210.3h2.1v2.1h-2.1zM271.9 173.1h2.1v2.1h-2.1zM269.6 260.4h2.5v2.5h-2.5zM264.6 216.9h2.0v2.0h-2.0zM250.4 114.6h2.7v2.7h-2.7zM291.7 108.0h2.8v2.8h-2.8zM290.2 108.4h2.9v2.9h-2.9zM278.9 217.3h2.0v2.0h-2.0zM247.2 186.6h2.7v2.7h-2.7zM279.8 190.3h2.0v2.0h-2.0zM257.8 116.7h2.0v2.0h-2.0zM296.9 189.1h2.5v2.5h-2.5zM254.8 224.0h2.9v2.9h-2.9zM288.1 90.3h2.9v2.9h-2.9zM284.7 72.8h2.4v2.4h-2.4zM261.8 256.5h2.8v2.8h-2.8zM263.7 136.5h2.7v2.7h-2.7zM284.4 92.1h2.2v2.2h-2.2zM298.9 109.6h2.1v2.1h-2.1zM256.4 222.0h2.1v2.1h-2.1zM254.3 151.3h2.1v2.1h-2.1zM269.8 205.4h2.5v2.5h-2.5zM285.9 237.9h2.8v2.8h-2.8zM294.4 119.6h2.7v2.7h-2.7zM232.7 84.5h1.9v1.9h-1.9z" fill="#b04644"/><path d="M284.9 106.2h2.8v2.8h-2.8zM269.7 115.8h2.3v2.3h-2.3zM269.4 149.9h2.3v2.3h-2.3zM267.4 141.2h3.1v3.1h-3.1zM243.5 170.3h1.9v1.9h-1.9zM275.0 133.7h3.0v3.0h-3.0zM287.3 120.0h3.2v3.2h-3.2zM275.8 180.9h2.0v2.0h-2.0zM295.9 196.0h2.7v2.7h-2.7zM266.4 123.2h3.1v3.1h-3.1zM281.9 181.5h2.5v2.5h-2.5zM280.1 137.1h2.8v2.8h-2.8zM275.3 142.3h2.0v2.0h-2.0zM250.8 153.9h2.6v2.6h-2.6zM291.1 193.3h2.8v2.8h-2.8zM269.5 150.7h2.1v2.1h-2.1zM274.2 143.7h2.2v2.2h-2.2zM296.1 222.6h2.0v2.0h-2.0zM238.0 202.7h2.2v2.2h-2.2zM281.8 97.7h2.6v2.6h-2.6zM259.4 164.0h1.9v1.9h-1.9zM270.2 118.8h2.9v2.9h-2.9zM283.8 190.8h2.2v2.2h-2.2zM292.7 241.9h2.8v2.8h-2.8zM264.3 166.9h2.5v2.5h-2.5zM254.6 187.8h1.9v1.9h-1.9zM242.5 216.6h2.8v2.8h-2.8zM286.8 233.7h1.8v1.8h-1.8zM293.1 210.2h2.0v2.0h-2.0zM261.2 184.7h1.9v1.9h-1.9zM277.5 132.6h2.7v2.7h-2.7zM261.6 133.0h3.1v3.1h-3.1zM269.5 139.6h2.4v2.4h-2.4zM257.8 273.7h2.2v2.2h-2.2zM270.5 134.6h2.3v2.3h-2.3zM282.8 90.0h2.4v2.4h-2.4zM261.4 256.5h2.2v2.2h-2.2zM288.2 129.0h3.1v3.1h-3.1zM269.4 148.6h3.1v3.1h-3.1zM249.3 86.8h2.4v2.4h-2.4zM245.7 273.4h2.6v2.6h-2.6zM272.2 118.9h2.9v2.9h-2.9zM246.6 178.1h2.7v2.7h-2.7zM288.1 144.3h3.1v3.1h-3.1zM293.6 211.7h2.3v2.3h-2.3z" fill="#823a34"/><path d="M228.5 99.0h2.7v2.7h-2.7zM288.9 239.9h2.5v2.5h-2.5zM265.6 122.1h2.2v2.2h-2.2zM298.8 230.8h2.5v2.5h-2.5zM265.4 82.0h2.3v2.3h-2.3zM246.2 251.5h2.0v2.0h-2.0zM249.1 133.8h2.8v2.8h-2.8zM251.7 131.6h3.1v3.1h-3.1zM285.9 116.9h2.6v2.6h-2.6zM257.4 126.9h2.2v2.2h-2.2zM293.4 145.4h2.3v2.3h-2.3zM262.7 137.4h3.0v3.0h-3.0zM288.3 246.7h2.5v2.5h-2.5zM270.6 105.4h2.8v2.8h-2.8zM238.8 241.3h1.9v1.9h-1.9zM262.1 167.1h2.0v2.0h-2.0zM265.9 88.5h2.6v2.6h-2.6zM239.5 265.1h2.0v2.0h-2.0zM274.7 149.1h2.1v2.1h-2.1zM263.1 188.1h2.7v2.7h-2.7zM296.3 198.3h2.0v2.0h-2.0zM272.0 158.6h2.0v2.0h-2.0zM239.5 111.1h2.9v2.9h-2.9zM236.9 95.8h2.2v2.2h-2.2zM271.2 194.8h2.9v2.9h-2.9zM261.3 160.5h2.9v2.9h-2.9zM265.8 208.0h2.8v2.8h-2.8zM256.4 214.6h1.9v1.9h-1.9zM279.2 117.5h3.0v3.0h-3.0zM267.4 135.4h2.0v2.0h-2.0zM273.9 80.2h2.8v2.8h-2.8zM266.2 207.8h2.9v2.9h-2.9zM299.4 253.4h2.3v2.3h-2.3z" fill="#9a8486"/><path d="M227.6 196.1h2.6v2.6h-2.6zM127.4 233.6h2.5v2.5h-2.5zM133.6 225.8h2.6v2.6h-2.6zM147.5 223.5h2.8v2.8h-2.8zM143.3 223.5h3.0v3.0h-3.0zM142.7 225.2h2.5v2.5h-2.5zM198.3 199.6h3.0v3.0h-3.0zM165.4 217.1h2.4v2.4h-2.4zM129.9 233.2h2.5v2.5h-2.5zM158.2 217.4h2.7v2.7h-2.7zM186.4 207.4h3.0v3.0h-3.0zM135.3 228.9h2.6v2.6h-2.6zM149.1 222.8h2.4v2.4h-2.4zM222.5 192.1h2.9v2.9h-2.9zM211.4 198.7h2.4v2.4h-2.4z" fill="#d05a4c"/><path d="M285.6 175.5h2.0v2.0h-2.0zM284.5 132.3h2.1v2.1h-2.1zM255.2 138.6h2.4v2.4h-2.4zM234.1 105.3h2.3v2.3h-2.3zM263.5 127.9h2.7v2.7h-2.7zM254.2 136.0h1.9v1.9h-1.9zM268.7 127.2h2.9v2.9h-2.9zM249.0 174.6h1.9v1.9h-1.9zM252.9 132.8h2.6v2.6h-2.6zM296.0 208.3h2.5v2.5h-2.5zM255.3 127.3h2.9v2.9h-2.9zM295.1 105.9h3.0v3.0h-3.0zM288.4 120.4h2.6v2.6h-2.6zM234.0 101.8h2.4v2.4h-2.4zM272.5 156.2h2.7v2.7h-2.7zM258.6 125.8h2.1v2.1h-2.1zM256.8 163.8h2.7v2.7h-2.7zM263.7 115.4h2.8v2.8h-2.8zM267.4 116.7h3.3v3.3h-3.3zM263.7 124.9h1.9v1.9h-1.9zM262.2 128.7h2.8v2.8h-2.8zM258.9 133.6h2.9v2.9h-2.9zM271.8 210.2h2.7v2.7h-2.7zM277.7 125.6h2.9v2.9h-2.9zM290.2 162.6h2.0v2.0h-2.0zM251.6 241.2h2.5v2.5h-2.5zM262.9 180.4h2.2v2.2h-2.2zM245.3 102.3h2.5v2.5h-2.5zM276.2 77.8h2.2v2.2h-2.2zM265.5 134.9h2.0v2.0h-2.0zM237.8 243.2h2.6v2.6h-2.6zM248.5 229.7h2.6v2.6h-2.6zM267.8 81.3h2.2v2.2h-2.2zM266.8 195.3h2.7v2.7h-2.7zM276.7 177.7h2.1v2.1h-2.1zM227.9 91.8h2.9v2.9h-2.9zM256.0 166.2h2.1v2.1h-2.1zM281.6 95.1h2.3v2.3h-2.3zM254.5 127.6h2.3v2.3h-2.3z" fill="#8a6f74"/><path d="M297.6 192.4h2.9v2.9h-2.9zM264.7 199.7h1.9v1.9h-1.9zM265.7 134.7h2.3v2.3h-2.3zM268.9 180.0h2.4v2.4h-2.4zM294.1 128.4h3.2v3.2h-3.2zM229.3 84.9h3.1v3.1h-3.1zM245.1 106.3h3.0v3.0h-3.0zM257.5 151.0h2.9v2.9h-2.9zM278.9 190.2h2.9v2.9h-2.9zM271.8 79.2h2.3v2.3h-2.3zM238.4 97.6h2.9v2.9h-2.9zM247.7 109.9h2.4v2.4h-2.4zM251.1 124.6h2.7v2.7h-2.7zM247.4 113.8h2.7v2.7h-2.7zM264.8 128.8h2.8v2.8h-2.8zM277.5 119.4h2.9v2.9h-2.9zM250.9 130.5h2.8v2.8h-2.8zM286.7 81.2h2.6v2.6h-2.6zM266.8 143.5h2.1v2.1h-2.1zM279.9 151.0h1.9v1.9h-1.9zM281.5 122.4h2.6v2.6h-2.6zM281.0 92.3h2.8v2.8h-2.8zM252.2 127.4h2.1v2.1h-2.1zM272.7 131.6h2.2v2.2h-2.2zM268.4 141.3h2.7v2.7h-2.7zM286.3 85.9h2.6v2.6h-2.6zM294.8 124.6h2.9v2.9h-2.9zM250.7 186.0h2.3v2.3h-2.3zM261.3 80.4h2.4v2.4h-2.4z" fill="#a19ba5"/><path d="M250.0 154.9h1.9v1.9h-1.9zM261.9 79.2h2.1v2.1h-2.1zM239.0 255.7h2.4v2.4h-2.4zM286.6 95.3h2.7v2.7h-2.7zM270.2 121.3h2.1v2.1h-2.1zM294.6 93.2h2.2v2.2h-2.2zM259.9 133.1h2.9v2.9h-2.9zM284.6 203.2h2.4v2.4h-2.4zM304.0 133.5h3.0v3.0h-3.0zM271.3 192.0h2.2v2.2h-2.2zM268.1 178.6h2.5v2.5h-2.5zM282.6 182.1h2.3v2.3h-2.3zM247.8 167.5h2.5v2.5h-2.5zM274.9 219.7h2.6v2.6h-2.6zM284.7 109.6h2.7v2.7h-2.7zM272.8 122.6h3.0v3.0h-3.0zM251.0 128.3h2.0v2.0h-2.0zM255.9 123.5h2.2v2.2h-2.2zM267.3 96.1h2.9v2.9h-2.9zM279.1 160.5h2.1v2.1h-2.1zM248.7 177.0h2.4v2.4h-2.4zM290.0 219.3h2.4v2.4h-2.4zM253.7 230.0h2.2v2.2h-2.2zM239.4 108.1h2.6v2.6h-2.6zM272.4 208.6h2.8v2.8h-2.8zM259.3 148.2h2.0v2.0h-2.0zM251.2 127.7h2.4v2.4h-2.4zM274.5 80.4h2.1v2.1h-2.1zM252.1 118.5h2.0v2.0h-2.0zM255.8 192.1h2.8v2.8h-2.8zM278.5 135.5h3.1v3.1h-3.1z" fill="#85797d"/><path d="M247.4 112.5h3.1v3.1h-3.1zM273.4 143.5h2.3v2.3h-2.3zM253.1 183.4h2.6v2.6h-2.6zM270.5 146.9h2.8v2.8h-2.8zM261.7 206.1h2.5v2.5h-2.5zM245.4 113.6h2.3v2.3h-2.3zM286.0 117.8h2.1v2.1h-2.1zM269.7 87.6h2.8v2.8h-2.8zM280.1 181.1h2.4v2.4h-2.4zM275.6 128.0h2.9v2.9h-2.9zM285.7 180.2h2.3v2.3h-2.3zM283.1 172.8h2.5v2.5h-2.5zM227.0 90.3h3.2v3.2h-3.2zM250.7 223.9h2.9v2.9h-2.9zM248.4 125.3h3.2v3.2h-3.2zM246.9 187.9h2.7v2.7h-2.7zM245.0 105.9h2.5v2.5h-2.5zM286.9 82.6h3.2v3.2h-3.2zM277.3 190.9h2.3v2.3h-2.3zM260.9 138.6h2.1v2.1h-2.1zM270.8 152.4h2.4v2.4h-2.4zM288.1 245.6h2.7v2.7h-2.7zM271.9 163.9h2.3v2.3h-2.3zM240.2 244.2h2.6v2.6h-2.6zM235.5 89.1h3.1v3.1h-3.1zM260.1 150.2h2.9v2.9h-2.9zM248.5 116.8h2.1v2.1h-2.1zM255.4 241.4h2.3v2.3h-2.3zM259.2 170.8h2.8v2.8h-2.8zM288.4 202.3h2.9v2.9h-2.9zM275.4 78.0h3.3v3.3h-3.3zM237.6 227.7h2.6v2.6h-2.6z" fill="#b88480"/><path d="M257.0 131.9h2.3v2.3h-2.3zM246.2 116.2h3.3v3.3h-3.3zM281.9 85.6h3.0v3.0h-3.0zM273.5 78.8h3.0v3.0h-3.0zM267.4 105.6h2.1v2.1h-2.1zM245.1 196.7h2.3v2.3h-2.3zM291.4 181.6h2.3v2.3h-2.3zM236.9 99.7h2.6v2.6h-2.6zM284.5 217.2h2.7v2.7h-2.7zM276.8 150.7h2.7v2.7h-2.7zM237.9 93.7h2.6v2.6h-2.6zM273.8 99.8h3.2v3.2h-3.2zM268.0 167.8h1.9v1.9h-1.9zM290.9 238.5h2.1v2.1h-2.1zM285.5 205.3h2.0v2.0h-2.0zM258.0 156.9h2.7v2.7h-2.7zM280.7 96.8h2.4v2.4h-2.4zM252.4 131.1h2.4v2.4h-2.4zM259.2 152.3h2.9v2.9h-2.9zM247.6 107.2h3.1v3.1h-3.1zM264.3 201.1h2.1v2.1h-2.1zM252.4 169.0h2.9v2.9h-2.9zM273.8 99.8h2.2v2.2h-2.2zM271.0 174.9h2.4v2.4h-2.4zM267.6 138.7h2.4v2.4h-2.4zM272.3 184.2h2.5v2.5h-2.5zM283.8 83.6h2.8v2.8h-2.8zM293.9 180.6h2.4v2.4h-2.4zM274.7 213.8h1.9v1.9h-1.9zM299.4 192.5h2.6v2.6h-2.6zM277.9 85.0h3.3v3.3h-3.3zM236.9 104.7h3.2v3.2h-3.2zM267.5 185.7h2.5v2.5h-2.5zM283.3 226.1h2.8v2.8h-2.8zM277.4 120.6h2.5v2.5h-2.5zM268.0 78.2h3.0v3.0h-3.0z" fill="#8c6068"/><path d="M257.3 138.7h2.5v2.5h-2.5zM260.2 129.6h2.9v2.9h-2.9zM262.8 128.7h2.1v2.1h-2.1zM257.1 137.3h2.3v2.3h-2.3zM256.5 121.3h2.7v2.7h-2.7zM255.4 137.4h2.6v2.6h-2.6zM266.4 128.3h2.4v2.4h-2.4zM256.8 137.5h2.8v2.8h-2.8zM267.4 128.5h1.9v1.9h-1.9zM253.5 125.3h2.4v2.4h-2.4zM261.6 127.4h1.9v1.9h-1.9zM252.6 122.9h2.6v2.6h-2.6zM260.8 132.1h2.6v2.6h-2.6zM255.0 131.7h2.5v2.5h-2.5z" fill="#a9a3b3"/><path d="M289.9 163.8h2.6v2.6h-2.6zM269.8 161.1h1.9v1.9h-1.9zM279.2 214.3h2.0v2.0h-2.0zM242.0 99.4h2.6v2.6h-2.6zM290.2 112.0h2.4v2.4h-2.4zM252.9 185.4h2.8v2.8h-2.8zM239.6 213.1h2.7v2.7h-2.7zM279.8 219.4h2.2v2.2h-2.2zM247.5 170.3h2.6v2.6h-2.6zM257.1 263.2h2.9v2.9h-2.9zM294.7 210.4h2.2v2.2h-2.2zM274.9 126.7h2.3v2.3h-2.3zM253.0 195.9h2.3v2.3h-2.3zM252.2 125.5h2.5v2.5h-2.5zM225.2 76.3h2.8v2.8h-2.8zM277.0 249.2h2.8v2.8h-2.8zM264.5 182.9h2.9v2.9h-2.9zM284.1 255.4h2.0v2.0h-2.0zM281.0 94.3h2.3v2.3h-2.3zM248.0 190.8h2.1v2.1h-2.1zM242.1 98.3h3.2v3.2h-3.2zM293.1 199.4h2.7v2.7h-2.7zM252.3 151.8h2.4v2.4h-2.4zM284.9 104.0h2.3v2.3h-2.3zM246.4 235.8h2.4v2.4h-2.4zM249.6 124.5h2.3v2.3h-2.3zM253.0 134.5h2.2v2.2h-2.2z" fill="#a06a6a"/><path d="M271.2 152.8h2.3v2.3h-2.3zM284.3 128.8h2.9v2.9h-2.9zM295.5 223.3h2.0v2.0h-2.0zM293.6 184.7h2.9v2.9h-2.9zM283.4 239.5h2.4v2.4h-2.4zM295.2 216.4h2.1v2.1h-2.1zM297.9 112.2h2.6v2.6h-2.6zM294.7 92.7h2.1v2.1h-2.1zM259.6 148.7h2.5v2.5h-2.5zM275.9 116.8h2.9v2.9h-2.9zM240.1 265.9h2.1v2.1h-2.1zM281.6 190.1h2.9v2.9h-2.9zM289.5 196.2h2.4v2.4h-2.4zM248.4 155.8h2.9v2.9h-2.9zM276.4 227.1h1.9v1.9h-1.9zM275.3 171.3h2.0v2.0h-2.0zM299.0 111.4h2.2v2.2h-2.2zM285.6 243.1h2.9v2.9h-2.9zM289.8 178.4h2.4v2.4h-2.4zM300.6 101.7h2.3v2.3h-2.3zM277.7 210.7h2.3v2.3h-2.3zM244.4 197.1h2.7v2.7h-2.7zM251.4 239.9h2.8v2.8h-2.8zM289.4 98.2h3.1v3.1h-3.1zM283.6 92.9h2.4v2.4h-2.4zM247.4 178.6h2.4v2.4h-2.4zM280.0 163.5h2.4v2.4h-2.4zM254.2 188.8h2.8v2.8h-2.8zM279.5 92.5h2.9v2.9h-2.9zM286.4 179.4h2.2v2.2h-2.2zM239.1 259.1h2.5v2.5h-2.5zM289.0 217.2h2.3v2.3h-2.3zM301.3 130.8h3.1v3.1h-3.1zM238.5 196.2h2.5v2.5h-2.5zM263.6 247.4h2.4v2.4h-2.4zM273.7 119.2h3.2v3.2h-3.2zM288.5 90.3h2.8v2.8h-2.8zM244.0 271.6h2.3v2.3h-2.3zM289.0 129.0h2.7v2.7h-2.7zM260.5 223.8h2.3v2.3h-2.3zM280.3 152.7h2.2v2.2h-2.2zM264.5 179.2h2.4v2.4h-2.4zM274.1 138.1h2.7v2.7h-2.7zM288.4 221.9h2.8v2.8h-2.8zM243.7 182.0h2.3v2.3h-2.3zM248.5 191.9h2.6v2.6h-2.6zM293.2 128.9h2.6v2.6h-2.6zM244.8 188.4h2.1v2.1h-2.1zM278.1 212.7h2.3v2.3h-2.3zM277.3 166.0h2.1v2.1h-2.1zM293.4 216.6h2.8v2.8h-2.8zM274.7 128.2h2.2v2.2h-2.2zM289.6 228.8h1.9v1.9h-1.9zM262.0 181.4h2.3v2.3h-2.3zM241.2 200.2h2.9v2.9h-2.9zM268.8 169.3h1.9v1.9h-1.9zM287.3 113.0h2.7v2.7h-2.7zM251.1 153.3h1.9v1.9h-1.9zM257.0 205.9h2.7v2.7h-2.7zM288.4 114.4h2.3v2.3h-2.3zM253.6 237.4h2.2v2.2h-2.2zM227.5 77.5h2.8v2.8h-2.8zM256.5 147.2h2.5v2.5h-2.5zM297.5 134.4h2.8v2.8h-2.8zM251.4 181.8h2.4v2.4h-2.4zM246.7 269.8h2.6v2.6h-2.6zM281.3 141.7h2.9v2.9h-2.9zM263.2 173.4h2.9v2.9h-2.9zM304.6 108.2h2.1v2.1h-2.1zM273.6 214.9h2.1v2.1h-2.1zM295.5 126.3h2.6v2.6h-2.6zM280.0 141.7h2.7v2.7h-2.7zM254.9 267.2h2.1v2.1h-2.1zM300.2 123.6h2.4v2.4h-2.4zM261.3 173.8h2.1v2.1h-2.1zM274.9 186.0h2.6v2.6h-2.6zM288.9 119.9h2.1v2.1h-2.1zM276.9 112.8h2.2v2.2h-2.2zM255.7 132.5h2.5v2.5h-2.5z" fill="#983636"/><path d="M268.3 77.0h2.4v2.4h-2.4zM224.2 75.3h2.8v2.8h-2.8zM287.0 114.2h2.8v2.8h-2.8zM282.2 165.4h2.3v2.3h-2.3zM287.4 157.0h2.3v2.3h-2.3zM228.9 91.4h2.8v2.8h-2.8zM253.0 251.6h2.1v2.1h-2.1zM278.8 209.5h2.3v2.3h-2.3zM268.1 121.7h3.0v3.0h-3.0zM267.0 160.1h2.9v2.9h-2.9zM278.9 151.4h2.8v2.8h-2.8zM289.3 171.8h2.3v2.3h-2.3zM298.6 121.2h3.2v3.2h-3.2zM285.4 172.8h2.9v2.9h-2.9zM269.4 157.8h2.4v2.4h-2.4zM267.4 159.0h2.9v2.9h-2.9zM299.1 97.1h3.2v3.2h-3.2zM262.8 111.5h2.2v2.2h-2.2zM251.8 128.9h2.6v2.6h-2.6zM279.7 109.1h2.1v2.1h-2.1zM299.1 111.7h3.1v3.1h-3.1zM287.6 154.4h2.9v2.9h-2.9zM248.2 253.7h2.2v2.2h-2.2zM278.2 264.7h2.8v2.8h-2.8zM248.4 205.0h2.9v2.9h-2.9zM253.7 188.4h2.6v2.6h-2.6zM303.5 120.0h2.1v2.1h-2.1zM287.6 206.5h2.1v2.1h-2.1zM230.1 76.6h2.5v2.5h-2.5zM276.2 171.2h2.1v2.1h-2.1zM291.9 186.4h2.9v2.9h-2.9zM287.3 248.8h2.4v2.4h-2.4zM298.2 183.6h2.6v2.6h-2.6zM280.4 236.6h2.3v2.3h-2.3zM288.1 95.9h2.6v2.6h-2.6zM262.8 158.0h2.0v2.0h-2.0zM285.4 237.0h2.8v2.8h-2.8zM285.2 220.8h2.4v2.4h-2.4zM249.1 266.1h2.3v2.3h-2.3zM303.3 110.3h2.2v2.2h-2.2zM282.8 91.9h2.1v2.1h-2.1zM259.0 142.5h2.5v2.5h-2.5zM244.0 168.8h2.6v2.6h-2.6zM225.4 82.2h1.9v1.9h-1.9zM283.3 116.2h2.3v2.3h-2.3zM249.0 162.1h2.4v2.4h-2.4zM249.4 273.1h2.1v2.1h-2.1zM243.8 187.0h2.2v2.2h-2.2zM242.0 172.9h2.6v2.6h-2.6zM292.0 197.5h2.2v2.2h-2.2zM237.5 196.7h2.6v2.6h-2.6zM271.1 265.4h2.2v2.2h-2.2zM272.1 180.2h2.2v2.2h-2.2zM250.4 196.7h2.9v2.9h-2.9zM292.2 136.1h3.1v3.1h-3.1zM256.2 256.8h2.7v2.7h-2.7zM241.2 226.6h2.4v2.4h-2.4zM229.3 100.0h3.3v3.3h-3.3zM274.7 147.9h2.3v2.3h-2.3zM272.9 158.3h2.0v2.0h-2.0zM281.1 244.0h1.9v1.9h-1.9z" fill="#942e2d"/><path d="M296.8 215.5h2.4v2.4h-2.4zM287.3 110.5h2.7v2.7h-2.7zM255.9 270.5h2.8v2.8h-2.8zM245.8 161.5h2.2v2.2h-2.2zM268.5 179.5h2.3v2.3h-2.3zM253.1 150.5h1.9v1.9h-1.9zM304.9 126.5h2.6v2.6h-2.6zM264.9 156.2h2.9v2.9h-2.9zM306.9 130.2h2.4v2.4h-2.4zM305.9 107.5h3.1v3.1h-3.1zM296.0 221.5h2.4v2.4h-2.4zM248.3 223.1h1.9v1.9h-1.9zM292.6 213.2h2.6v2.6h-2.6zM265.2 174.2h2.0v2.0h-2.0zM294.5 102.1h2.2v2.2h-2.2zM290.9 188.1h2.1v2.1h-2.1zM249.1 170.0h2.8v2.8h-2.8zM299.4 103.5h2.9v2.9h-2.9zM289.7 200.1h2.3v2.3h-2.3zM265.5 260.9h2.2v2.2h-2.2zM279.1 93.4h2.3v2.3h-2.3zM240.3 253.3h2.1v2.1h-2.1zM274.3 142.8h2.0v2.0h-2.0zM232.2 76.1h1.9v1.9h-1.9zM258.9 181.0h2.3v2.3h-2.3zM222.5 76.1h2.0v2.0h-2.0zM286.7 223.5h2.7v2.7h-2.7zM294.2 121.2h2.6v2.6h-2.6zM242.8 260.9h2.7v2.7h-2.7zM288.7 238.8h2.7v2.7h-2.7zM265.7 148.0h2.4v2.4h-2.4zM279.4 115.2h3.0v3.0h-3.0zM274.5 120.1h2.5v2.5h-2.5zM255.7 150.7h2.7v2.7h-2.7zM281.4 98.3h3.2v3.2h-3.2zM278.0 264.1h2.8v2.8h-2.8zM238.9 226.4h1.9v1.9h-1.9zM294.2 103.2h2.9v2.9h-2.9zM252.4 263.0h2.2v2.2h-2.2zM286.6 253.1h2.2v2.2h-2.2zM292.9 182.2h2.8v2.8h-2.8zM264.1 163.0h2.3v2.3h-2.3zM281.5 221.2h1.9v1.9h-1.9zM243.6 234.6h2.1v2.1h-2.1zM270.3 251.6h2.3v2.3h-2.3zM245.5 204.8h2.9v2.9h-2.9zM257.9 210.9h2.5v2.5h-2.5zM267.0 137.4h3.0v3.0h-3.0zM288.2 111.9h2.8v2.8h-2.8zM276.9 224.7h2.0v2.0h-2.0zM253.9 132.3h2.5v2.5h-2.5zM286.2 94.1h2.2v2.2h-2.2zM286.5 173.5h2.7v2.7h-2.7zM226.5 73.5h2.7v2.7h-2.7zM274.6 125.5h2.7v2.7h-2.7zM257.1 215.5h2.1v2.1h-2.1zM274.5 145.7h2.2v2.2h-2.2zM295.6 133.6h2.9v2.9h-2.9zM286.0 74.3h2.8v2.8h-2.8zM258.7 137.5h2.1v2.1h-2.1zM293.6 212.7h2.5v2.5h-2.5zM261.1 188.9h2.7v2.7h-2.7zM263.1 147.1h2.4v2.4h-2.4zM265.3 178.8h2.5v2.5h-2.5zM285.2 216.8h2.9v2.9h-2.9zM285.4 223.6h2.0v2.0h-2.0zM281.4 212.0h2.4v2.4h-2.4zM298.1 250.5h2.7v2.7h-2.7zM249.1 169.4h1.9v1.9h-1.9zM268.7 97.8h2.5v2.5h-2.5zM299.9 107.5h2.6v2.6h-2.6zM279.8 147.7h2.7v2.7h-2.7zM268.3 137.2h3.0v3.0h-3.0zM287.1 184.0h2.5v2.5h-2.5z" fill="#ae3c3a"/><path d="M245.9 228.0h2.9v2.9h-2.9zM289.4 179.9h2.7v2.7h-2.7zM305.4 114.7h2.2v2.2h-2.2zM291.6 214.2h2.8v2.8h-2.8zM286.8 173.7h2.8v2.8h-2.8zM277.6 74.0h3.0v3.0h-3.0zM254.3 179.4h2.0v2.0h-2.0zM281.0 217.6h1.8v1.8h-1.8zM284.5 137.1h2.5v2.5h-2.5zM238.2 235.7h2.1v2.1h-2.1zM249.7 226.0h2.8v2.8h-2.8zM280.0 126.9h3.0v3.0h-3.0zM282.8 135.1h2.6v2.6h-2.6zM225.1 86.6h2.8v2.8h-2.8zM276.1 98.5h2.5v2.5h-2.5zM291.8 128.8h3.2v3.2h-3.2zM240.9 107.1h2.1v2.1h-2.1zM265.8 150.2h2.9v2.9h-2.9zM279.1 131.7h2.8v2.8h-2.8zM275.4 132.2h3.1v3.1h-3.1zM302.5 125.0h2.2v2.2h-2.2zM268.1 214.5h2.4v2.4h-2.4zM296.1 135.7h3.0v3.0h-3.0zM229.1 82.0h2.3v2.3h-2.3zM230.8 85.6h2.5v2.5h-2.5zM233.9 96.9h2.2v2.2h-2.2zM289.9 244.1h2.9v2.9h-2.9zM250.5 131.9h3.2v3.2h-3.2zM285.4 239.7h2.3v2.3h-2.3zM252.8 176.6h2.5v2.5h-2.5zM271.2 127.7h3.2v3.2h-3.2zM299.6 194.8h2.9v2.9h-2.9zM291.5 226.6h2.7v2.7h-2.7zM282.3 211.5h2.3v2.3h-2.3zM281.2 115.6h3.3v3.3h-3.3zM284.5 106.8h2.4v2.4h-2.4zM287.0 206.0h2.2v2.2h-2.2zM254.3 255.7h2.8v2.8h-2.8zM229.8 92.8h2.2v2.2h-2.2zM292.1 105.3h2.1v2.1h-2.1zM243.2 242.9h2.1v2.1h-2.1zM255.7 117.4h2.2v2.2h-2.2zM236.7 94.0h3.3v3.3h-3.3zM230.2 82.6h2.9v2.9h-2.9zM264.7 156.3h2.7v2.7h-2.7zM301.4 109.4h2.7v2.7h-2.7zM278.4 230.1h2.8v2.8h-2.8zM269.5 204.2h2.6v2.6h-2.6zM279.2 152.5h3.0v3.0h-3.0zM281.3 109.1h2.5v2.5h-2.5zM263.4 138.2h2.0v2.0h-2.0zM235.0 96.0h3.3v3.3h-3.3z" fill="#5c201d"/><path d="M283.9 196.3h2.1v2.1h-2.1zM285.3 85.0h2.9v2.9h-2.9zM265.9 92.4h2.4v2.4h-2.4zM290.2 205.1h2.5v2.5h-2.5zM258.4 210.7h2.8v2.8h-2.8zM229.9 73.0h2.6v2.6h-2.6zM270.3 128.4h2.8v2.8h-2.8zM271.9 199.4h2.8v2.8h-2.8zM281.9 126.1h3.0v3.0h-3.0zM244.6 87.1h2.6v2.6h-2.6zM245.3 235.9h1.9v1.9h-1.9zM275.1 185.5h2.7v2.7h-2.7zM284.0 110.6h2.2v2.2h-2.2zM290.5 182.5h2.0v2.0h-2.0zM265.0 251.4h2.5v2.5h-2.5zM286.1 221.7h2.4v2.4h-2.4zM282.4 188.7h2.1v2.1h-2.1zM270.2 162.4h2.7v2.7h-2.7zM242.2 267.1h2.0v2.0h-2.0zM245.3 246.8h2.3v2.3h-2.3zM243.7 116.3h2.4v2.4h-2.4zM285.6 188.9h1.9v1.9h-1.9zM278.8 151.0h3.1v3.1h-3.1zM268.7 207.6h2.3v2.3h-2.3zM279.6 96.6h2.5v2.5h-2.5zM272.5 185.1h2.3v2.3h-2.3zM286.1 150.1h2.1v2.1h-2.1zM291.4 141.4h2.7v2.7h-2.7zM254.5 260.8h2.2v2.2h-2.2zM235.4 100.2h2.7v2.7h-2.7zM267.8 131.7h3.0v3.0h-3.0zM270.8 139.0h2.5v2.5h-2.5zM260.4 174.7h2.9v2.9h-2.9zM290.1 111.4h2.3v2.3h-2.3zM293.8 230.3h1.8v1.8h-1.8zM242.8 260.9h2.3v2.3h-2.3zM260.8 222.7h1.9v1.9h-1.9zM264.0 212.5h1.9v1.9h-1.9zM261.2 161.4h2.1v2.1h-2.1zM245.3 236.7h2.1v2.1h-2.1zM279.8 184.2h1.9v1.9h-1.9zM283.3 199.4h2.7v2.7h-2.7zM282.2 190.6h2.3v2.3h-2.3zM274.2 125.6h2.6v2.6h-2.6zM290.0 163.5h2.8v2.8h-2.8zM251.3 240.0h2.1v2.1h-2.1zM261.4 218.5h2.1v2.1h-2.1zM272.4 182.7h1.9v1.9h-1.9zM272.3 152.3h1.9v1.9h-1.9zM289.6 149.6h2.5v2.5h-2.5zM274.4 146.9h2.6v2.6h-2.6z" fill="#7a3530"/><path d="M240.7 98.6h2.6v2.6h-2.6zM278.2 110.5h2.2v2.2h-2.2zM282.0 79.9h3.1v3.1h-3.1zM255.4 125.9h2.7v2.7h-2.7zM268.0 73.9h3.3v3.3h-3.3zM282.8 219.5h1.9v1.9h-1.9zM244.6 216.9h2.7v2.7h-2.7zM264.2 92.6h2.2v2.2h-2.2zM277.5 135.3h2.7v2.7h-2.7zM267.0 186.2h2.0v2.0h-2.0zM281.1 163.1h2.4v2.4h-2.4zM240.5 118.4h2.2v2.2h-2.2zM285.0 80.8h2.3v2.3h-2.3zM257.9 112.8h1.9v1.9h-1.9zM287.0 217.1h2.8v2.8h-2.8zM295.5 131.3h3.1v3.1h-3.1zM269.4 176.0h2.8v2.8h-2.8zM274.8 229.3h2.7v2.7h-2.7zM230.5 85.3h3.3v3.3h-3.3zM284.6 159.5h2.6v2.6h-2.6zM265.7 137.4h2.0v2.0h-2.0zM266.4 112.7h2.7v2.7h-2.7zM264.7 81.8h2.1v2.1h-2.1zM284.0 98.3h2.9v2.9h-2.9zM284.0 88.2h2.6v2.6h-2.6zM258.9 211.6h2.6v2.6h-2.6zM282.8 79.8h2.5v2.5h-2.5zM291.0 145.7h2.9v2.9h-2.9zM248.8 131.7h2.8v2.8h-2.8zM254.2 118.5h2.9v2.9h-2.9zM295.1 182.6h2.2v2.2h-2.2zM262.3 130.5h2.5v2.5h-2.5zM247.9 158.7h2.8v2.8h-2.8zM273.2 203.3h2.1v2.1h-2.1zM258.5 113.2h2.7v2.7h-2.7z" fill="#8f8892"/><path d="M292.1 124.4h2.1v2.1h-2.1zM286.5 178.5h2.6v2.6h-2.6zM279.3 102.2h3.2v3.2h-3.2zM304.0 131.8h2.8v2.8h-2.8zM265.7 172.3h1.8v1.8h-1.8zM288.7 168.1h2.4v2.4h-2.4zM281.3 195.3h2.2v2.2h-2.2zM293.7 99.9h2.7v2.7h-2.7zM281.1 119.8h2.2v2.2h-2.2zM281.3 135.8h2.3v2.3h-2.3zM278.3 185.3h2.5v2.5h-2.5zM293.2 103.3h3.1v3.1h-3.1zM284.6 136.3h3.1v3.1h-3.1zM253.6 118.7h2.6v2.6h-2.6zM274.3 143.7h2.7v2.7h-2.7zM264.8 179.1h2.4v2.4h-2.4zM258.3 141.8h2.5v2.5h-2.5zM269.8 202.1h2.4v2.4h-2.4zM292.0 131.8h2.7v2.7h-2.7zM267.4 151.7h2.7v2.7h-2.7zM271.2 124.0h2.5v2.5h-2.5zM268.3 265.3h2.9v2.9h-2.9zM244.3 219.6h2.2v2.2h-2.2zM289.7 221.8h2.0v2.0h-2.0zM290.4 93.4h2.2v2.2h-2.2zM305.4 119.4h2.3v2.3h-2.3zM277.3 204.3h2.9v2.9h-2.9zM246.5 83.7h2.6v2.6h-2.6zM291.1 232.2h2.0v2.0h-2.0zM280.0 138.5h2.1v2.1h-2.1zM256.0 185.6h2.2v2.2h-2.2zM272.1 104.6h2.6v2.6h-2.6zM247.7 235.5h2.1v2.1h-2.1zM240.0 181.4h2.9v2.9h-2.9zM280.2 202.9h2.2v2.2h-2.2zM241.2 238.1h2.9v2.9h-2.9zM265.1 158.7h2.8v2.8h-2.8zM284.4 227.6h2.0v2.0h-2.0zM279.9 156.4h2.9v2.9h-2.9zM272.1 211.2h2.7v2.7h-2.7zM292.8 245.4h1.9v1.9h-1.9zM249.6 220.4h2.1v2.1h-2.1zM265.5 98.6h2.5v2.5h-2.5zM245.4 197.0h2.8v2.8h-2.8zM304.2 123.3h2.8v2.8h-2.8zM247.4 234.7h2.7v2.7h-2.7zM289.9 193.6h2.0v2.0h-2.0zM290.0 204.8h1.8v1.8h-1.8zM241.9 201.7h2.2v2.2h-2.2zM274.4 106.5h3.2v3.2h-3.2zM262.9 179.2h2.2v2.2h-2.2zM257.7 253.5h2.0v2.0h-2.0zM258.2 193.4h2.8v2.8h-2.8zM289.4 183.7h1.9v1.9h-1.9zM272.1 144.4h2.5v2.5h-2.5z" fill="#782426"/><path d="M141.6 224.5h2.9v2.9h-2.9zM191.3 201.2h3.2v3.2h-3.2zM182.4 205.8h3.3v3.3h-3.3zM147.1 221.8h2.6v2.6h-2.6zM212.4 194.5h3.1v3.1h-3.1zM166.3 215.4h3.3v3.3h-3.3zM161.6 215.7h3.2v3.2h-3.2zM186.2 207.3h2.8v2.8h-2.8z" fill="#b8362e"/><path d="M288.9 121.0h2.3v2.3h-2.3zM227.9 96.1h2.7v2.7h-2.7zM299.3 260.3h2.3v2.3h-2.3zM256.7 261.7h2.5v2.5h-2.5zM223.1 81.6h2.7v2.7h-2.7zM289.1 110.9h2.5v2.5h-2.5zM284.9 145.5h2.8v2.8h-2.8zM254.0 177.2h2.5v2.5h-2.5zM294.7 93.3h2.9v2.9h-2.9zM289.8 91.4h3.1v3.1h-3.1zM238.6 115.8h3.3v3.3h-3.3zM281.0 170.3h1.9v1.9h-1.9zM298.4 102.3h2.3v2.3h-2.3zM282.8 233.5h2.5v2.5h-2.5zM294.7 195.2h2.0v2.0h-2.0zM290.8 141.4h2.3v2.3h-2.3zM301.2 97.8h2.2v2.2h-2.2zM305.6 117.0h3.0v3.0h-3.0zM275.4 178.1h2.8v2.8h-2.8zM263.3 179.4h2.3v2.3h-2.3zM262.1 180.5h2.5v2.5h-2.5zM292.2 120.3h2.2v2.2h-2.2zM243.5 221.3h2.6v2.6h-2.6z" fill="#dc9892"/><path d="M269.5 98.8h2.5v2.5h-2.5zM256.8 216.2h2.8v2.8h-2.8zM281.7 209.6h1.9v1.9h-1.9zM245.1 249.9h2.0v2.0h-2.0zM288.2 179.2h2.8v2.8h-2.8zM291.2 182.3h2.7v2.7h-2.7zM245.7 127.6h2.9v2.9h-2.9zM270.0 98.5h2.1v2.1h-2.1zM296.5 120.9h3.1v3.1h-3.1zM244.8 207.8h1.9v1.9h-1.9zM257.0 172.5h2.2v2.2h-2.2zM281.0 185.2h2.8v2.8h-2.8zM240.9 179.3h2.5v2.5h-2.5zM275.2 206.3h1.9v1.9h-1.9zM274.5 136.7h2.6v2.6h-2.6zM278.5 260.4h2.9v2.9h-2.9zM283.3 222.6h2.1v2.1h-2.1zM295.4 214.3h2.8v2.8h-2.8zM273.7 237.3h2.8v2.8h-2.8zM297.2 133.4h2.7v2.7h-2.7zM244.0 172.0h2.6v2.6h-2.6zM267.3 134.3h2.8v2.8h-2.8z" fill="#d88882"/><path d="M268.0 198.4h1.9v1.9h-1.9zM241.7 254.4h2.4v2.4h-2.4zM261.8 141.3h2.1v2.1h-2.1zM275.4 91.5h2.2v2.2h-2.2zM226.3 92.1h2.6v2.6h-2.6zM224.9 75.6h2.3v2.3h-2.3zM262.6 86.5h2.2v2.2h-2.2zM281.3 168.0h2.9v2.9h-2.9zM248.7 186.3h2.2v2.2h-2.2zM296.3 125.3h2.8v2.8h-2.8zM288.7 114.5h2.1v2.1h-2.1zM267.7 168.6h2.3v2.3h-2.3zM270.4 165.4h2.0v2.0h-2.0zM256.0 173.3h2.6v2.6h-2.6zM266.2 78.8h3.0v3.0h-3.0zM267.1 99.1h3.2v3.2h-3.2zM275.7 139.7h2.5v2.5h-2.5zM248.4 160.9h2.9v2.9h-2.9zM282.5 137.9h2.9v2.9h-2.9zM253.9 196.4h1.9v1.9h-1.9zM255.3 272.2h2.3v2.3h-2.3zM262.6 197.4h2.5v2.5h-2.5zM275.7 155.4h2.7v2.7h-2.7zM236.5 106.1h2.2v2.2h-2.2zM287.2 195.3h2.8v2.8h-2.8zM267.8 189.9h2.0v2.0h-2.0zM298.0 185.1h2.2v2.2h-2.2zM239.6 251.7h2.1v2.1h-2.1zM266.9 202.7h2.9v2.9h-2.9zM269.3 157.0h2.7v2.7h-2.7zM280.9 120.3h2.8v2.8h-2.8zM265.2 114.3h2.7v2.7h-2.7zM245.4 103.8h2.8v2.8h-2.8zM265.3 242.3h2.3v2.3h-2.3zM252.0 135.6h2.4v2.4h-2.4zM287.0 140.8h2.6v2.6h-2.6zM255.2 137.4h2.8v2.8h-2.8zM280.3 162.7h2.5v2.5h-2.5zM264.5 132.9h3.1v3.1h-3.1zM253.4 231.0h2.6v2.6h-2.6zM284.4 163.7h2.7v2.7h-2.7zM276.5 83.4h2.7v2.7h-2.7z" fill="#986e74"/><path d="M250.9 264.9h2.8v2.8h-2.8zM286.2 205.2h2.8v2.8h-2.8zM275.4 161.2h2.2v2.2h-2.2zM270.3 130.0h3.0v3.0h-3.0zM262.3 154.6h2.9v2.9h-2.9zM246.4 255.9h1.9v1.9h-1.9zM290.5 117.3h2.5v2.5h-2.5zM279.0 229.7h2.5v2.5h-2.5zM302.3 118.8h3.1v3.1h-3.1zM294.7 130.0h2.3v2.3h-2.3zM293.7 196.7h2.1v2.1h-2.1zM285.8 115.4h3.1v3.1h-3.1zM275.3 174.8h2.2v2.2h-2.2zM238.9 221.7h2.3v2.3h-2.3zM268.5 202.0h2.5v2.5h-2.5zM284.5 238.2h2.0v2.0h-2.0zM248.5 175.5h2.4v2.4h-2.4zM275.1 265.9h2.8v2.8h-2.8zM291.9 98.9h3.1v3.1h-3.1zM254.2 147.7h2.8v2.8h-2.8zM237.6 247.9h1.9v1.9h-1.9zM291.3 183.3h2.1v2.1h-2.1zM272.2 167.8h2.8v2.8h-2.8zM299.0 192.7h2.5v2.5h-2.5zM273.1 105.3h2.7v2.7h-2.7zM285.4 201.2h2.9v2.9h-2.9zM271.9 152.2h2.5v2.5h-2.5zM272.1 149.0h2.4v2.4h-2.4zM240.5 187.6h2.2v2.2h-2.2zM240.4 179.1h2.6v2.6h-2.6z" fill="#d4746c"/><path d="M274.4 132.3h2.4v2.4h-2.4zM291.9 227.2h2.1v2.1h-2.1zM289.1 173.3h2.8v2.8h-2.8zM257.7 151.6h2.4v2.4h-2.4zM270.0 177.1h2.5v2.5h-2.5zM275.8 126.3h2.9v2.9h-2.9zM268.7 137.3h3.2v3.2h-3.2zM275.8 227.1h2.3v2.3h-2.3zM281.0 150.5h2.1v2.1h-2.1zM246.8 228.2h2.5v2.5h-2.5zM280.8 216.0h2.4v2.4h-2.4zM291.2 126.6h3.2v3.2h-3.2zM249.8 177.6h1.8v1.8h-1.8zM298.3 113.7h2.8v2.8h-2.8zM287.9 155.4h2.9v2.9h-2.9zM281.1 121.1h2.1v2.1h-2.1zM283.5 99.9h2.2v2.2h-2.2zM286.5 228.4h2.5v2.5h-2.5zM270.3 222.0h2.3v2.3h-2.3zM281.9 116.8h2.5v2.5h-2.5zM266.3 111.4h3.0v3.0h-3.0zM273.7 206.8h2.4v2.4h-2.4zM255.6 196.5h2.6v2.6h-2.6zM250.6 235.4h2.9v2.9h-2.9zM237.6 234.2h2.2v2.2h-2.2zM306.6 121.5h2.6v2.6h-2.6zM251.6 220.3h2.1v2.1h-2.1zM259.3 220.0h2.9v2.9h-2.9zM272.4 196.5h2.6v2.6h-2.6zM264.5 132.7h2.8v2.8h-2.8zM292.9 104.2h3.2v3.2h-3.2zM289.0 210.0h1.9v1.9h-1.9zM295.4 102.2h3.0v3.0h-3.0zM248.2 183.5h2.5v2.5h-2.5zM293.2 212.1h2.3v2.3h-2.3zM284.5 99.7h2.8v2.8h-2.8zM252.0 194.3h1.9v1.9h-1.9zM238.9 229.6h2.9v2.9h-2.9zM268.4 177.5h2.6v2.6h-2.6zM249.8 166.1h2.4v2.4h-2.4zM282.1 119.3h2.1v2.1h-2.1zM238.3 259.3h2.4v2.4h-2.4zM295.1 130.0h3.1v3.1h-3.1zM249.1 178.7h2.8v2.8h-2.8zM292.9 177.4h2.5v2.5h-2.5zM286.1 148.0h2.4v2.4h-2.4zM281.7 95.0h3.1v3.1h-3.1zM255.1 171.2h2.0v2.0h-2.0zM286.5 234.8h2.3v2.3h-2.3zM244.3 258.7h2.4v2.4h-2.4zM300.9 130.1h2.1v2.1h-2.1zM279.3 224.3h1.9v1.9h-1.9zM222.9 78.0h2.9v2.9h-2.9zM295.9 220.8h1.9v1.9h-1.9zM291.4 109.5h2.9v2.9h-2.9zM279.1 181.5h2.2v2.2h-2.2zM254.1 125.3h3.0v3.0h-3.0zM291.0 203.2h2.0v2.0h-2.0zM295.1 184.5h1.9v1.9h-1.9zM291.6 124.1h3.1v3.1h-3.1zM288.8 126.4h2.7v2.7h-2.7zM268.8 204.7h2.2v2.2h-2.2zM285.5 123.8h2.9v2.9h-2.9z" fill="#84282a"/><path d="M139.4 228.9h2.6v2.6h-2.6zM174.6 212.2h3.1v3.1h-3.1zM153.3 220.1h2.8v2.8h-2.8zM159.3 216.9h3.1v3.1h-3.1z" fill="#f08070"/><path d="M264.9 83.1h2.9v2.9h-2.9zM276.7 181.1h2.5v2.5h-2.5zM273.7 197.3h2.6v2.6h-2.6zM246.4 247.7h1.9v1.9h-1.9zM287.7 200.6h2.0v2.0h-2.0zM257.0 238.4h2.1v2.1h-2.1zM265.5 135.7h2.4v2.4h-2.4zM292.3 175.5h2.7v2.7h-2.7zM277.5 205.1h2.1v2.1h-2.1zM300.0 244.0h2.7v2.7h-2.7zM265.4 258.7h1.9v1.9h-1.9zM244.7 178.8h2.7v2.7h-2.7zM260.6 88.1h3.1v3.1h-3.1zM279.0 171.1h2.1v2.1h-2.1zM276.9 118.8h3.2v3.2h-3.2zM285.2 110.2h3.1v3.1h-3.1zM254.6 125.1h2.6v2.6h-2.6zM254.2 262.5h2.6v2.6h-2.6zM280.7 164.7h2.8v2.8h-2.8zM264.2 265.6h2.8v2.8h-2.8zM262.9 112.9h2.1v2.1h-2.1zM288.0 176.8h2.2v2.2h-2.2zM258.7 192.0h1.9v1.9h-1.9zM224.0 80.6h2.8v2.8h-2.8zM234.3 83.9h3.0v3.0h-3.0zM295.2 229.9h2.1v2.1h-2.1zM260.2 126.1h2.2v2.2h-2.2zM269.7 115.9h2.9v2.9h-2.9zM302.4 112.9h2.7v2.7h-2.7z" fill="#6b6570"/><path d="M220.3 193.4h3.3v3.3h-3.3zM135.3 228.2h2.9v2.9h-2.9zM128.0 232.2h2.9v2.9h-2.9zM230.5 192.0h3.2v3.2h-3.2zM218.2 193.1h2.8v2.8h-2.8zM169.0 211.9h2.6v2.6h-2.6zM176.2 208.7h2.9v2.9h-2.9zM186.3 203.8h2.9v2.9h-2.9zM165.2 215.4h2.6v2.6h-2.6zM128.8 227.8h2.6v2.6h-2.6z" fill="#d84a3c"/><path d="M245.4 116.7h2.2v2.2h-2.2zM289.2 182.5h2.3v2.3h-2.3zM240.9 187.1h2.0v2.0h-2.0zM263.1 160.8h2.4v2.4h-2.4zM264.5 130.7h2.6v2.6h-2.6zM260.6 195.0h2.4v2.4h-2.4zM243.9 223.9h2.7v2.7h-2.7zM275.8 89.3h2.3v2.3h-2.3zM258.1 134.4h2.6v2.6h-2.6zM288.1 190.7h2.4v2.4h-2.4zM282.3 222.3h1.9v1.9h-1.9zM285.9 125.3h2.2v2.2h-2.2zM249.0 213.7h2.6v2.6h-2.6zM256.0 244.6h2.9v2.9h-2.9zM251.5 243.2h2.4v2.4h-2.4zM275.1 227.1h2.1v2.1h-2.1zM246.5 123.3h2.6v2.6h-2.6zM287.7 221.8h1.9v1.9h-1.9zM270.5 87.7h2.6v2.6h-2.6zM245.0 106.7h3.3v3.3h-3.3zM273.2 187.0h1.8v1.8h-1.8zM258.4 192.2h2.1v2.1h-2.1zM294.2 127.4h2.9v2.9h-2.9zM284.9 225.5h2.5v2.5h-2.5zM291.8 166.2h2.8v2.8h-2.8zM257.6 177.7h2.3v2.3h-2.3zM285.7 197.2h2.8v2.8h-2.8zM281.6 84.7h2.4v2.4h-2.4zM280.0 81.1h2.1v2.1h-2.1zM244.5 110.6h3.1v3.1h-3.1zM283.9 133.3h2.8v2.8h-2.8z" fill="#b07878"/><path d="M256.8 231.8h1.9v1.9h-1.9zM239.5 246.4h2.9v2.9h-2.9zM249.3 238.0h2.1v2.1h-2.1zM253.6 211.8h2.6v2.6h-2.6zM274.0 191.0h2.6v2.6h-2.6zM250.0 172.6h2.7v2.7h-2.7zM283.4 138.1h3.1v3.1h-3.1zM231.9 103.6h2.7v2.7h-2.7zM255.9 160.0h1.9v1.9h-1.9zM271.3 114.1h2.2v2.2h-2.2zM252.4 158.5h2.7v2.7h-2.7zM279.9 115.3h3.1v3.1h-3.1zM250.5 206.0h2.9v2.9h-2.9zM247.1 90.3h2.6v2.6h-2.6zM274.8 123.9h3.2v3.2h-3.2zM280.8 186.8h2.7v2.7h-2.7zM283.7 179.6h2.0v2.0h-2.0zM276.9 237.9h1.9v1.9h-1.9zM276.0 138.2h2.3v2.3h-2.3zM258.9 157.0h2.5v2.5h-2.5zM266.9 126.6h2.5v2.5h-2.5zM246.9 217.7h2.8v2.8h-2.8zM263.4 102.0h2.5v2.5h-2.5zM285.7 254.0h1.9v1.9h-1.9zM241.4 217.5h1.9v1.9h-1.9zM271.2 134.1h2.3v2.3h-2.3zM283.8 185.4h2.0v2.0h-2.0zM281.1 198.7h2.9v2.9h-2.9zM276.6 137.6h2.8v2.8h-2.8zM282.0 134.2h3.0v3.0h-3.0zM281.9 132.0h2.3v2.3h-2.3zM299.8 196.3h2.6v2.6h-2.6zM270.2 149.1h2.9v2.9h-2.9zM279.0 151.8h2.2v2.2h-2.2zM273.5 176.9h2.1v2.1h-2.1zM287.1 225.8h2.5v2.5h-2.5zM251.4 158.1h2.3v2.3h-2.3zM280.5 137.0h3.2v3.2h-3.2zM290.7 181.3h2.3v2.3h-2.3zM299.4 245.7h1.9v1.9h-1.9zM258.4 193.0h2.7v2.7h-2.7zM262.6 92.7h2.6v2.6h-2.6zM292.9 144.0h2.7v2.7h-2.7zM294.5 131.6h3.1v3.1h-3.1zM278.1 119.5h3.1v3.1h-3.1zM258.6 256.9h2.9v2.9h-2.9zM290.3 229.7h2.2v2.2h-2.2z" fill="#6e2c28"/><path d="M261.9 112.6h2.9v2.9h-2.9zM251.1 118.0h1.9v1.9h-1.9zM263.9 124.6h2.4v2.4h-2.4zM260.3 136.4h2.4v2.4h-2.4zM261.7 113.0h2.0v2.0h-2.0zM257.6 133.4h1.9v1.9h-1.9zM261.3 139.0h2.3v2.3h-2.3zM253.9 114.5h2.8v2.8h-2.8zM255.3 137.8h2.9v2.9h-2.9zM263.6 116.5h2.7v2.7h-2.7zM261.4 127.8h2.1v2.1h-2.1zM256.7 131.3h2.0v2.0h-2.0z" fill="#b5afbb"/><path d="M128.2 232.6h3.1v3.1h-3.1zM131.0 225.9h2.6v2.6h-2.6zM190.0 203.1h3.2v3.2h-3.2zM152.0 219.5h3.2v3.2h-3.2zM234.0 189.6h3.1v3.1h-3.1zM190.4 205.9h2.5v2.5h-2.5zM131.3 231.7h2.6v2.6h-2.6zM211.7 196.4h3.1v3.1h-3.1zM194.3 204.1h2.9v2.9h-2.9zM235.0 191.5h3.1v3.1h-3.1zM189.7 205.1h2.8v2.8h-2.8zM128.3 232.6h2.3v2.3h-2.3zM131.1 225.9h2.6v2.6h-2.6zM126.5 234.3h3.2v3.2h-3.2zM218.9 192.5h3.0v3.0h-3.0z" fill="#c84034"/><path d="M315.6 277.4h2.5v2.5h-2.5zM313.1 268.0h2.9v2.9h-2.9zM314.0 269.1h2.7v2.7h-2.7zM312.0 265.1h2.7v2.7h-2.7z" fill="#a5322a"/><path d="M224.5 195.4h2.3v2.3h-2.3zM191.6 203.3h2.7v2.7h-2.7zM177.0 209.1h3.2v3.2h-3.2zM170.3 211.9h2.3v2.3h-2.3zM235.3 189.0h2.3v2.3h-2.3zM132.7 229.5h3.0v3.0h-3.0zM191.4 204.4h2.7v2.7h-2.7zM192.2 202.4h3.1v3.1h-3.1zM201.2 199.7h3.1v3.1h-3.1zM133.8 228.0h2.6v2.6h-2.6zM162.3 216.5h2.7v2.7h-2.7zM130.2 233.0h3.1v3.1h-3.1zM138.6 227.8h3.0v3.0h-3.0zM126.6 234.3h3.2v3.2h-3.2zM131.2 232.9h2.7v2.7h-2.7zM210.0 194.9h3.0v3.0h-3.0zM226.5 192.9h3.2v3.2h-3.2zM208.3 201.2h3.1v3.1h-3.1zM181.2 207.5h2.8v2.8h-2.8zM188.3 206.5h2.9v2.9h-2.9z" fill="#e05444"/><path d="M305.4 271.7h2.4v2.4h-2.4zM301.6 275.7h2.5v2.5h-2.5zM304.1 270.0h2.8v2.8h-2.8zM301.0 268.9h2.1v2.1h-2.1zM301.3 266.9h3.0v3.0h-3.0z" fill="#c63f33"/><path d="M318.5 275.0h2.9v2.9h-2.9zM315.0 272.2h2.2v2.2h-2.2z" fill="#e2503f"/><path d="M314.0 269.4h2.3v2.3h-2.3zM306.4 279.2h2.9v2.9h-2.9zM302.7 276.2h2.2v2.2h-2.2zM310.3 280.5h2.7v2.7h-2.7zM303.8 276.3h2.8v2.8h-2.8z" fill="#d97a3a"/><path d="M264.6 110.4h2.9v2.9h-2.9zM264.0 137.9h2.6v2.6h-2.6zM255.5 135.1h2.3v2.3h-2.3zM261.6 138.9h1.9v1.9h-1.9zM258.9 123.3h2.5v2.5h-2.5zM265.3 115.7h2.9v2.9h-2.9zM265.3 119.0h2.5v2.5h-2.5zM263.2 132.8h2.6v2.6h-2.6zM260.5 126.2h2.6v2.6h-2.6zM266.8 136.0h2.0v2.0h-2.0zM258.8 131.5h2.3v2.3h-2.3zM266.5 127.0h2.0v2.0h-2.0zM263.5 120.3h2.7v2.7h-2.7zM253.0 129.0h2.0v2.0h-2.0z" fill="#c2bcc8"/><path d="M192.9 234.9h2.2v2.2h-2.2zM176.9 234.9h2.2v2.2h-2.2z" fill="#6a6a6a"/><path d="M215.7 266.7h2.6v2.6h-2.6z" fill="#d65a5a"/><path d="M310.7 279.7h2.6v2.6h-2.6zM301.3 276.6h2.7v2.7h-2.7zM311.1 278.5h2.5v2.5h-2.5z" fill="#8a6a70"/><path d="M307.3 277.0h2.1v2.1h-2.1zM305.9 266.8h2.9v2.9h-2.9zM299.8 267.6h2.5v2.5h-2.5zM314.2 272.8h2.7v2.7h-2.7zM310.6 278.6h3.0v3.0h-3.0zM314.2 276.7h2.9v2.9h-2.9z" fill="#d9a08a"/><path d="M306.9 182.9h2.2v2.2h-2.2z" fill="#555"/><path d="M314.5 268.9h2.9v2.9h-2.9z" fill="#f08f50"/></g><path d="M108.30000000000001 283V308" stroke="#1a1ac8" stroke-width="1.6"/><path d="M113 311.7H137" stroke="#1f9a2a" stroke-width="1.6"/><text x="105" y="315.5" font-family="DejaVu Sans,sans-serif" font-size="14" fill="#fff" stroke="#fff" stroke-width="0.5">X</text><text x="106" y="279.5" font-family="DejaVu Sans,sans-serif" font-size="8" fill="#f0f0f0">Z</text><text x="141.5" y="314" font-family="DejaVu Sans,sans-serif" font-size="8" fill="#f0f0f0">Y</text></svg></div>
<div class="abs" style="left:737px;top:76px;width:4px;height:357px;background:#52585b"></div>
<div class="abs panel" style="left:741px;top:76px;width:282px;height:357px"><div class="abs phead" style="width:282px"><b style="left:103px">Editing</b><svg class="abs" style="left:263px;top:4px" width="8" height="7" viewBox="0 0 8 7"><path d="M1.2 1L6.8 6M6.8 1L1.2 6" stroke="#0c0c0c" stroke-width="1.7" fill="none"/></svg></div><div class="bigbtn" style="left:5px;top:23px;width:272px"><svg class="abs" style="left:4px;top:2px" width="22.0" height="22.0" viewBox="0 0 22 22"><rect x="0.9" y="1.5" width="14.6" height="10.8" fill="none" stroke="#eef0f0" stroke-width="2" stroke-dasharray="5 2" stroke-dashoffset="1"/><rect x="4.1" y="3.2" width="2" height="2" fill="#45c455"/><rect x="10" y="4.6" width="2" height="2" fill="#45c455"/><rect x="16.8" y="3.2" width="2" height="2" fill="#45c455"/><rect x="1.7000000000000002" y="8.5" width="2" height="2" fill="#45c455"/><rect x="14.4" y="9" width="2" height="2" fill="#45c455"/><rect x="11" y="14.4" width="2" height="2" fill="#45c455"/><rect x="2.6" y="16.8" width="2" height="2" fill="#45c455"/><path d="M13.9 11.8L13.9 19.6L15.8 17.9L17.3 20.9L18.7 20.2L17.3 17.3L19.9 17.1Z" fill="#c8cccd" stroke="#5d6365" stroke-width="0.4"/></svg><span class="or" style="left:29px">Selection</span></div><div class="grp" style="left:5px;top:63px;width:272px;height:95px"><i style="left:115px">Select</i></div><div class="smbtn" style="left:18px;top:71px;width:115px;display:flex;align-items:center;justify-content:center;gap:4px"><svg width="15" height="15" viewBox="0 0 22 22" style="flex:none"><rect x="2" y="2" width="13" height="12" fill="none" stroke="#e8ebec" stroke-width="1.8" stroke-dasharray="4 2"/><rect x="6" y="4.5" width="2" height="2" fill="#4fc24f"/><rect x="11" y="7" width="2" height="2" fill="#4fc24f"/><rect x="4" y="10" width="2" height="2" fill="#4fc24f"/><rect x="16" y="4" width="2" height="2" fill="#4fc24f"/><rect x="5" y="17" width="2" height="2" fill="#4fc24f"/><path d="M14 11.500L14 20.500L16.2 18.400L17.8 21.800L19.2 21.100L17.7 17.800L20.6 17.600Z" fill="#d8dcdd"/></svg><span style="position:static">By Hand</span></div><div class="smbtn dis" style="left:149px;top:71px;width:114px;display:flex;align-items:center;justify-content:center;gap:4px"><svg width="13" height="13" viewBox="0 0 14 14" style="flex:none"><rect x="1" y="1" width="12" height="12" fill="none" stroke="#c5c9ca" stroke-width="1" stroke-dasharray="1.5 1.2"/><rect x="3.5" y="5" width="7" height="4" fill="#b9bebf"/></svg><span style="position:static">Color</span></div><div class="smbtn dis" style="left:18px;top:99px;width:115px;display:flex;align-items:center;justify-content:center;gap:4px"><svg width="13" height="13" viewBox="0 0 14 14" style="flex:none"><rect x="1" y="1" width="12" height="12" fill="none" stroke="#c5c9ca" stroke-width="1" stroke-dasharray="1.5 1.2"/><rect x="4" y="4.5" width="6" height="4" fill="none" stroke="#c5c9ca" stroke-width="1" transform="rotate(40 7 7)"/></svg><span style="position:static">Plane</span></div><div class="smbtn" style="left:149px;top:99px;width:114px;display:flex;align-items:center;justify-content:center;gap:4px"><svg width="13" height="13" viewBox="0 0 14 14" style="flex:none"><rect x="1" y="1" width="12" height="12" fill="none" stroke="#c5c9ca" stroke-width="1" stroke-dasharray="1.5 1.2"/><path d="M3 4.500h8M3 7h8M3 9.500h8" stroke="#aeb3b4" stroke-width="1.2" stroke-dasharray="1.2 0.8"/></svg><span style="position:static">Points</span></div><div class="smbtn dis" style="left:18px;top:127px;width:115px;display:flex;align-items:center;justify-content:center;gap:4px"><svg width="13" height="13" viewBox="0 0 14 14" style="flex:none"><rect x="1" y="1" width="12" height="12" fill="none" stroke="#c5c9ca" stroke-width="1" stroke-dasharray="1.5 1.2"/><path d="M3.5 5L10.5 4L8 10.500Z" fill="none" stroke="#c5c9ca" stroke-width="1"/></svg><span style="position:static">Triangles</span></div><div class="smbtn" style="left:149px;top:127px;width:114px;display:flex;align-items:center;justify-content:center;gap:4px"><svg width="14" height="14" viewBox="0 0 14 14" style="flex:none"><circle cx="4" cy="3" r="2" fill="#9aa0a2"/><circle cx="8" cy="3" r="2" fill="#9aa0a2"/><rect x="1.5" y="5" width="8" height="4.5" fill="#9aa0a2"/><path d="M4 9.500L2.5 13M6 9.500L7.5 13" stroke="#9aa0a2" stroke-width="0.9"/><path d="M9 7.500v6l1.5-1.3 1 2 1-.5-1-1.9 1.9-.2z" fill="#bfc4c5"/></svg><span style="position:static">Cameras</span></div><div class="grp" style="left:5px;top:170px;width:272px;height:95px"><i style="left:122px">Edit</i></div><div class="smbtn dis" style="left:18px;top:178px;width:115px;display:flex;align-items:center;justify-content:center;gap:4px"><svg width="15" height="15" viewBox="0 0 15 15" style="flex:none"><rect x="1" y="1" width="10" height="9" fill="none" stroke="#c9cdce" stroke-width="1.2" stroke-dasharray="2 1"/><rect x="3" y="3" width="6" height="5" fill="#aeb3b4" opacity=".6"/><path d="M9 7v7l1.6-1.4 1.1 2.2 1.1-.5-1.1-2.1 2.1-.2z" fill="#dfe2e3"/></svg><span style="position:static">Delete</span></div><div class="smbtn dis" style="left:149px;top:178px;width:114px;display:flex;align-items:center;justify-content:center;gap:4px"><svg width="13" height="13" viewBox="0 0 13 13" style="flex:none"><rect x="0.5" y="0.5" width="12" height="12" rx="1.5" fill="#d5d9da"/><path d="M6.5 3a3.5 3.5 0 0 0 0 7z" fill="#6d7679"/><path d="M6.5 3a3.5 3.5 0 0 1 0 7z" fill="none" stroke="#6d7679" stroke-width="0.8"/></svg><span style="position:static">Invert</span></div><div class="smbtn dis" style="left:18px;top:206px;width:115px;display:flex;align-items:center;justify-content:center;gap:4px"><svg width="13" height="13" viewBox="0 0 14 14" style="flex:none"><rect x="1" y="1" width="12" height="12" fill="none" stroke="#c5c9ca" stroke-width="1" stroke-dasharray="1.5 1.2"/><path d="M4 3L10 11M10 3L4 11" stroke="#e0e3e4" stroke-width="1.3"/></svg><span style="position:static">Cut</span></div><div class="smbtn dis" style="left:149px;top:206px;width:114px;display:flex;align-items:center;justify-content:center;gap:4px"><svg width="13" height="13" viewBox="0 0 14 14" style="flex:none"><rect x="1" y="1" width="12" height="12" fill="none" stroke="#c5c9ca" stroke-width="1" stroke-dasharray="1.5 1.2"/><path d="M5 10V5.500a2 2 0 0 1 4 0V10M5 8.500h4" fill="none" stroke="#c9cdce" stroke-width="1.2"/></svg><span style="position:static">Copy</span></div><div class="smbtn dis" style="left:18px;top:234px;width:115px;display:flex;align-items:center;justify-content:center;gap:4px"><svg width="13" height="13" viewBox="0 0 18 18" style="flex:none"><path d="M9 1L16.5 4.800L9 8.600L1.5 4.800Z" fill="#8d9496"/><path d="M1.5 4.800L9 8.600V17L1.5 13.200Z" fill="#7d8486"/><path d="M16.5 4.800L9 8.600V17L16.5 13.200Z" fill="#858c8e"/><path d="M4 6.100v8.400M6.5 7.300v8.400M11.5 7.300v8.400M14 6.100v8.400M1.5 7.600L9 11.400L16.5 7.600M1.5 10.400L9 14.200L16.5 10.4" fill="none" stroke="#a5abac" stroke-width="0.6"/></svg><span style="position:static">Selection</span></div><div class="bigbtn" style="left:5px;top:324px;width:272px"><svg class="abs" style="left:4px;top:3px" width="21" height="21" viewBox="0 0 21 21"><path d="M4.5 2.500L3 4l2 2.500L6.5 6.3 16 16.500l-.3 1.5 1.3 1.2 2-2-1.2-1.3-1.5.3L6.2 6z" fill="none" stroke="#e6a532" stroke-width="1.2" stroke-linejoin="round"/><path d="M17.5 2.500a3.3 3.3 0 0 0-4 4.300L3.7 16.200a1.6 1.6 0 1 0 2.2 2.200L15.3 9a3.3 3.3 0 0 0 4.2-4.200l-2 2-1.7-.4-.4-1.700z" fill="none" stroke="#e6a532" stroke-width="1.2" stroke-linejoin="round"/></svg><span style="left:30px">Filtering</span></div></div>

<div class="abs" style="left:0;top:433px;width:1024px;height:28px;background:#45494b"></div>
<div class="abs" style="left:5px;top:441px;width:113px;height:20px;background:#5f6567;border-radius:4px 4px 0 0"><span class="abs or" style="left:10px;top:2px;line-height:16px;white-space:nowrap;font-size:11.45px">Camera Navigator</span></div>
<div class="abs" style="left:122px;top:441px;width:38px;height:20px;background:#52585a;border-radius:4px 4px 0 0"><span class="abs" style="left:10px;top:2px;line-height:16px">Log</span></div>
<div class="abs" style="left:0;top:461px;width:1024px;height:17px;background:linear-gradient(#5f6567,#5b6163)"><b class="abs" style="left:443px;top:2px;line-height:15px;font-size:11.4px;color:#cdd0d1;white-space:nowrap">Camera navigator</b><svg class="abs" style="left:1004px;top:3.5px" width="8" height="7" viewBox="0 0 8 7"><path d="M1.2 1L6.8 6M6.8 1L1.2 6" stroke="#0c0c0c" stroke-width="1.7" fill="none"/></svg></div>

<div class="abs" style="left:0;top:478px;width:1024px;height:119px;background:#000"></div><svg class="abs" style="left:0;top:478px" width="1024" height="119" viewBox="0 0 1024 119"><defs><filter id="tb" x="-10%" y="-10%" width="120%" height="120%"><feGaussianBlur stdDeviation="0.45"/></filter></defs><rect x="179" y="0" width="1" height="119" fill="#7f8485"/><rect x="358" y="0" width="1" height="119" fill="#7f8485"/><rect x="537" y="0" width="1" height="119" fill="#7f8485"/><rect x="716" y="0" width="1" height="119" fill="#7f8485"/><rect x="895" y="0" width="1" height="119" fill="#7f8485"/><rect x="0" y="0" width="1" height="119" fill="#3a3d3e"/><g filter="url(#tb)"><path d="M67.7 82.20000000000005v2.6a12.8 2.6 0 0 0 25.6 0v-2.6z" fill="#a9a9af"/><path d="M71.5 85.20000000000005h6M81.5 85.60000000000002h7" stroke="#4a4a4f" stroke-width="1"/><path d="M69.0 84.29999999999995h4M88.5 84.60000000000002h3" stroke="#e6e6ea" stroke-width="0.9"/><ellipse cx="80.5" cy="82.20000000000005" rx="12.8" ry="2.3" fill="#6e6e74"/><ellipse cx="79.5" cy="82.20000000000005" rx="7" ry="1.2" fill="#86868c"/><path d="M75.5 43L81 43L83.5 48L82 55L84 67L86.2 78.5L82 80.5L78 79.5L74 80.5L70.4 78.5L72.8 65L74 55L71 49L73 45Z" fill="#701d1a"/><path d="M76.7 60.8l-0.5 4.4" stroke="#c63e32" stroke-width="1.1"/><path d="M77.7 56.8l-0.7 3.9" stroke="#220a0a" stroke-width="1.1"/><path d="M72.8 65.7l-0.5 5.3" stroke="#9a5550" stroke-width="1.1"/><path d="M76.9 76.4l-0.4 2.4" stroke="#c63e32" stroke-width="1.1"/><path d="M82.5 62.2l-0.7 4.4" stroke="#220a0a" stroke-width="1.1"/><path d="M82.9 71.3l-0.5 2.8" stroke="#4c1715" stroke-width="1.1"/><path d="M82.9 71.4l0.7 3.4" stroke="#4c1715" stroke-width="1.1"/><path d="M73.7 56.9l0.6 5.1" stroke="#6a5a5e" stroke-width="1.1"/><path d="M77.1 47.8l-0.6 2.8" stroke="#5e4648" stroke-width="1.1"/><path d="M82.3 69.6l-0.8 4.7" stroke="#220a0a" stroke-width="1.1"/><path d="M81.0 52.3l-0.8 2.3" stroke="#2a0d0c" stroke-width="1.1"/><path d="M72.8 63.3l0.1 3.9" stroke="#a82d25" stroke-width="1.1"/><path d="M74.4 52.3l0.2 2.3" stroke="#3a1210" stroke-width="1.1"/><path d="M74.4 64.6l0.4 2.1" stroke="#220a0a" stroke-width="1.1"/><path d="M79.6 54.6l0.4 4.6" stroke="#c63e32" stroke-width="1.1"/><path d="M72.9 64.4l-0.2 5.2" stroke="#6a5a5e" stroke-width="1.1"/><path d="M78.0 51.2l-0.2 4.4" stroke="#6a5a5e" stroke-width="1.1"/><path d="M81.1 64.9l0.6 2.4" stroke="#a82d25" stroke-width="1.1"/><path d="M76.2 74.2l-0.2 5.5" stroke="#3a1210" stroke-width="1.1"/><path d="M72.7 64.4l-0.3 3.5" stroke="#220a0a" stroke-width="1.1"/><path d="M77.5 52.8l0.5 3.1" stroke="#2a0d0c" stroke-width="1.1"/><path d="M78.2 55.1l-0.8 4.7" stroke="#b8342b" stroke-width="1.1"/><path d="M78.0 71.8l0.4 4.0" stroke="#6a5a5e" stroke-width="1.1"/><path d="M79.1 48.1l0.7 3.4" stroke="#a82d25" stroke-width="1.1"/><path d="M81.5 57.9l-0.6 3.0" stroke="#2a0d0c" stroke-width="1.1"/><path d="M82.4 68.2l-0.7 5.4" stroke="#b8342b" stroke-width="1.1"/><path d="M81.7 51.5l0.2 2.0" stroke="#a82d25" stroke-width="1.1"/><path d="M75.8 47.9l-0.3 2.1" stroke="#9a5550" stroke-width="1.1"/><path d="M75.3 71.6l0.1 2.5" stroke="#5e4648" stroke-width="1.1"/><path d="M78.4 48.8l-0.6 3.5" stroke="#6a5a5e" stroke-width="1.1"/><path d="M78.5 50.6l0.1 4.8" stroke="#9a5550" stroke-width="1.1"/><path d="M75.4 67.2l0.6 3.7" stroke="#220a0a" stroke-width="1.1"/><path d="M74.5 49.2l-0.6 4.8" stroke="#8c241e" stroke-width="1.1"/><path d="M73.7 72.3l0.6 2.7" stroke="#3a1210" stroke-width="1.1"/><path d="M78.9 61.2l-0.2 2.6" stroke="#8c241e" stroke-width="1.1"/><path d="M82.6 61.4l-0.7 4.3" stroke="#8c241e" stroke-width="1.1"/><ellipse cx="78.3" cy="42" rx="3" ry="4" fill="#6a2a28"/><ellipse cx="78.4" cy="42.200000000000045" rx="1.9" ry="3" fill="#5f5c60"/><path d="M82 49L87.0 51.5L86.5 43" fill="none" stroke="#742a28" stroke-width="3" stroke-linejoin="round"/><ellipse cx="86.9" cy="42.5" rx="2.7" ry="3.4" fill="#7e3431"/><path d="M85.5 42v-2.5M87.1 41.5v-2.5" stroke="#5b4a50" stroke-width="0.9"/><path d="M72.5 49.5L69 58" stroke="#5e5660" stroke-width="2.4"/><path d="M69 58L65.6 75" stroke="#b8241c" stroke-width="1.5" stroke-linecap="round"/><path d="M246.7 82.20000000000005v2.6a12.8 2.6 0 0 0 25.6 0v-2.6z" fill="#a9a9af"/><path d="M250.5 85.20000000000005h6M260.5 85.60000000000002h7" stroke="#4a4a4f" stroke-width="1"/><path d="M248.0 84.29999999999995h4M267.5 84.60000000000002h3" stroke="#e6e6ea" stroke-width="0.9"/><ellipse cx="259.5" cy="82.20000000000005" rx="12.8" ry="2.3" fill="#6e6e74"/><ellipse cx="258.5" cy="82.20000000000005" rx="7" ry="1.2" fill="#86868c"/><path d="M254.5 43L260 43L262.5 48L261 55L263 67L265.2 78.5L261 80.5L257 79.5L253 80.5L249.4 78.5L251.8 65L253 55L250 49L252 45Z" fill="#701d1a"/><path d="M257.9 64.6l0.1 3.8" stroke="#9a5550" stroke-width="1.1"/><path d="M261.4 63.2l0.6 4.0" stroke="#a82d25" stroke-width="1.1"/><path d="M251.0 76.6l0.4 2.4" stroke="#3a1210" stroke-width="1.1"/><path d="M256.4 68.4l0.6 4.5" stroke="#5e4648" stroke-width="1.1"/><path d="M251.5 67.7l0.6 2.8" stroke="#3a1210" stroke-width="1.1"/><path d="M259.9 72.3l-0.0 2.9" stroke="#220a0a" stroke-width="1.1"/><path d="M252.3 65.9l0.3 3.4" stroke="#b8342b" stroke-width="1.1"/><path d="M254.7 48.2l0.4 2.3" stroke="#220a0a" stroke-width="1.1"/><path d="M257.9 47.0l0.1 2.1" stroke="#8c241e" stroke-width="1.1"/><path d="M254.9 70.8l-0.8 5.3" stroke="#2a0d0c" stroke-width="1.1"/><path d="M262.3 64.9l0.5 2.4" stroke="#5e4648" stroke-width="1.1"/><path d="M254.5 57.2l-0.5 2.8" stroke="#c63e32" stroke-width="1.1"/><path d="M254.0 49.5l0.8 3.3" stroke="#401412" stroke-width="1.1"/><path d="M256.6 69.7l-0.5 5.1" stroke="#8c241e" stroke-width="1.1"/><path d="M253.3 48.6l0.3 2.1" stroke="#8c241e" stroke-width="1.1"/><path d="M258.0 54.1l0.0 3.5" stroke="#a82d25" stroke-width="1.1"/><path d="M256.7 74.8l0.2 2.8" stroke="#2a0d0c" stroke-width="1.1"/><path d="M255.3 47.9l-0.7 2.7" stroke="#4c1715" stroke-width="1.1"/><path d="M261.6 57.3l0.7 5.1" stroke="#9a5550" stroke-width="1.1"/><path d="M263.3 75.4l-0.8 3.5" stroke="#a82d25" stroke-width="1.1"/><path d="M255.2 59.3l-0.2 4.9" stroke="#220a0a" stroke-width="1.1"/><path d="M254.1 58.8l-0.3 3.6" stroke="#4c1715" stroke-width="1.1"/><path d="M256.4 75.6l-0.5 3.4" stroke="#9a5550" stroke-width="1.1"/><path d="M253.9 56.4l-0.8 2.7" stroke="#8c241e" stroke-width="1.1"/><path d="M260.8 57.7l-0.7 5.4" stroke="#401412" stroke-width="1.1"/><path d="M258.4 76.8l0.4 2.7" stroke="#401412" stroke-width="1.1"/><path d="M255.2 63.3l0.3 3.5" stroke="#b8342b" stroke-width="1.1"/><path d="M259.0 53.3l0.0 3.6" stroke="#8c241e" stroke-width="1.1"/><path d="M259.9 46.1l-0.7 2.0" stroke="#3a1210" stroke-width="1.1"/><path d="M250.8 75.5l-0.3 4.4" stroke="#c63e32" stroke-width="1.1"/><path d="M260.1 62.3l0.2 3.4" stroke="#9a5550" stroke-width="1.1"/><path d="M257.1 74.4l0.0 3.3" stroke="#c63e32" stroke-width="1.1"/><path d="M252.9 76.3l0.1 4.8" stroke="#9a5550" stroke-width="1.1"/><path d="M253.0 70.9l-0.8 4.4" stroke="#c63e32" stroke-width="1.1"/><path d="M256.8 46.6l-0.1 5.4" stroke="#401412" stroke-width="1.1"/><path d="M255.4 49.0l-0.1 4.4" stroke="#8c241e" stroke-width="1.1"/><ellipse cx="257.3" cy="42" rx="3" ry="4" fill="#6a2a28"/><ellipse cx="257.4" cy="42.200000000000045" rx="1.9" ry="3" fill="#5f5c60"/><path d="M261 49L266.0 51.5L265.5 43" fill="none" stroke="#742a28" stroke-width="3" stroke-linejoin="round"/><ellipse cx="265.9" cy="42.5" rx="2.7" ry="3.4" fill="#7e3431"/><path d="M264.5 42v-2.5M266.1 41.5v-2.5" stroke="#5b4a50" stroke-width="0.9"/><path d="M251.5 49.5L250 58" stroke="#5e5660" stroke-width="2.4"/><path d="M250 58L234 74" stroke="#b8241c" stroke-width="1.5" stroke-linecap="round"/><path d="M424.7 82.20000000000005v2.6a12.8 2.6 0 0 0 25.6 0v-2.6z" fill="#a9a9af"/><path d="M428.5 85.20000000000005h6M438.5 85.60000000000002h7" stroke="#4a4a4f" stroke-width="1"/><path d="M426.0 84.29999999999995h4M445.5 84.60000000000002h3" stroke="#e6e6ea" stroke-width="0.9"/><ellipse cx="437.5" cy="82.20000000000005" rx="12.8" ry="2.3" fill="#6e6e74"/><ellipse cx="436.5" cy="82.20000000000005" rx="7" ry="1.2" fill="#86868c"/><path d="M433.5 43L439 43L441.5 48L440 55L442 67L444.2 78.5L440 80.5L436 79.5L432 80.5L428.4 78.5L430.8 65L432 55L429 49L431 45Z" fill="#701d1a"/><path d="M434.5 53.4l0.3 4.6" stroke="#6a5a5e" stroke-width="1.1"/><path d="M434.4 47.6l-0.8 2.7" stroke="#2a0d0c" stroke-width="1.1"/><path d="M438.1 70.9l-0.1 3.2" stroke="#a82d25" stroke-width="1.1"/><path d="M431.5 69.9l-0.5 2.7" stroke="#9a5550" stroke-width="1.1"/><path d="M435.1 67.9l0.8 5.3" stroke="#8c241e" stroke-width="1.1"/><path d="M436.0 68.9l-0.2 4.8" stroke="#b8342b" stroke-width="1.1"/><path d="M435.2 74.4l0.7 3.9" stroke="#6a5a5e" stroke-width="1.1"/><path d="M442.2 75.4l0.6 2.9" stroke="#a82d25" stroke-width="1.1"/><path d="M435.7 53.9l-0.5 3.9" stroke="#8c241e" stroke-width="1.1"/><path d="M436.5 75.9l-0.4 5.5" stroke="#401412" stroke-width="1.1"/><path d="M437.6 46.9l0.1 2.7" stroke="#220a0a" stroke-width="1.1"/><path d="M433.2 72.6l-0.3 3.4" stroke="#c63e32" stroke-width="1.1"/><path d="M438.4 48.4l-0.1 5.4" stroke="#3a1210" stroke-width="1.1"/><path d="M433.6 47.3l0.6 4.5" stroke="#c63e32" stroke-width="1.1"/><path d="M439.4 66.4l-0.2 4.6" stroke="#220a0a" stroke-width="1.1"/><path d="M436.0 74.3l-0.7 5.5" stroke="#9a5550" stroke-width="1.1"/><path d="M435.3 50.5l-0.5 5.0" stroke="#6a5a5e" stroke-width="1.1"/><path d="M431.4 66.4l0.0 2.9" stroke="#5e4648" stroke-width="1.1"/><path d="M441.1 65.6l0.1 5.5" stroke="#2a0d0c" stroke-width="1.1"/><path d="M437.8 69.6l-0.3 5.0" stroke="#5e4648" stroke-width="1.1"/><path d="M431.9 52.6l0.4 2.9" stroke="#5e4648" stroke-width="1.1"/><path d="M431.6 55.5l0.2 5.3" stroke="#401412" stroke-width="1.1"/><path d="M437.3 57.8l0.1 2.6" stroke="#2a0d0c" stroke-width="1.1"/><path d="M431.7 67.8l-0.7 2.7" stroke="#3a1210" stroke-width="1.1"/><path d="M439.4 54.3l-0.2 4.0" stroke="#5e4648" stroke-width="1.1"/><path d="M430.9 68.6l-0.1 3.5" stroke="#6a5a5e" stroke-width="1.1"/><path d="M433.9 51.6l0.0 5.0" stroke="#c63e32" stroke-width="1.1"/><path d="M437.6 57.7l-0.2 3.8" stroke="#401412" stroke-width="1.1"/><path d="M429.8 74.6l-0.3 3.6" stroke="#8c241e" stroke-width="1.1"/><path d="M438.7 55.2l-0.1 4.7" stroke="#8c241e" stroke-width="1.1"/><path d="M435.0 47.8l0.3 2.8" stroke="#6a5a5e" stroke-width="1.1"/><path d="M435.6 54.3l0.8 4.8" stroke="#a82d25" stroke-width="1.1"/><path d="M438.4 62.3l0.2 4.8" stroke="#a82d25" stroke-width="1.1"/><path d="M435.1 66.6l-0.3 2.3" stroke="#b8342b" stroke-width="1.1"/><path d="M433.3 54.3l0.7 5.4" stroke="#220a0a" stroke-width="1.1"/><path d="M432.2 51.4l0.3 3.8" stroke="#4c1715" stroke-width="1.1"/><ellipse cx="436.3" cy="42" rx="3" ry="4" fill="#6a2a28"/><ellipse cx="436.4" cy="42.200000000000045" rx="1.9" ry="3" fill="#5f5c60"/><path d="M440 49L443.5 51.5L443 43" fill="none" stroke="#742a28" stroke-width="3" stroke-linejoin="round"/><ellipse cx="443.4" cy="42.5" rx="2.7" ry="3.4" fill="#7e3431"/><path d="M442 42v-2.5M443.6 41.5v-2.5" stroke="#5b4a50" stroke-width="0.9"/><path d="M430.5 49.5L427 59" stroke="#5e5660" stroke-width="2.4"/><path d="M427 59L405.5 73" stroke="#b8241c" stroke-width="1.5" stroke-linecap="round"/><path d="M603.2 82.20000000000005v2.6a12.8 2.6 0 0 0 25.6 0v-2.6z" fill="#a9a9af"/><path d="M607.0 85.20000000000005h6M617.0 85.60000000000002h7" stroke="#4a4a4f" stroke-width="1"/><path d="M604.5 84.29999999999995h4M624.0 84.60000000000002h3" stroke="#e6e6ea" stroke-width="0.9"/><ellipse cx="616.0" cy="82.20000000000005" rx="12.8" ry="2.3" fill="#6e6e74"/><ellipse cx="615.0" cy="82.20000000000005" rx="7" ry="1.2" fill="#86868c"/><path d="M614.0 43L619.5 43L622.0 48L620.5 55L622.5 67L624.7 78.5L620.5 80.5L616.5 79.5L612.5 80.5L608.9 78.5L611.3 65L612.5 55L609.5 49L611.5 45Z" fill="#701d1a"/><path d="M611.0 65.0l0.2 3.3" stroke="#5e4648" stroke-width="1.1"/><path d="M620.7 54.8l0.8 2.3" stroke="#c63e32" stroke-width="1.1"/><path d="M614.5 62.8l-0.1 2.6" stroke="#6a5a5e" stroke-width="1.1"/><path d="M614.5 55.8l-0.0 4.6" stroke="#6a5a5e" stroke-width="1.1"/><path d="M614.4 66.6l0.0 5.0" stroke="#401412" stroke-width="1.1"/><path d="M616.7 47.9l-0.0 2.3" stroke="#6a5a5e" stroke-width="1.1"/><path d="M619.2 59.0l-0.3 4.8" stroke="#6a5a5e" stroke-width="1.1"/><path d="M620.2 51.2l-0.6 4.3" stroke="#220a0a" stroke-width="1.1"/><path d="M616.9 68.3l0.1 2.0" stroke="#a82d25" stroke-width="1.1"/><path d="M618.3 55.1l0.6 4.0" stroke="#a82d25" stroke-width="1.1"/><path d="M617.0 54.5l-0.8 5.1" stroke="#4c1715" stroke-width="1.1"/><path d="M615.9 62.4l0.7 5.5" stroke="#8c241e" stroke-width="1.1"/><path d="M613.5 56.4l0.8 4.4" stroke="#6a5a5e" stroke-width="1.1"/><path d="M616.3 56.2l0.7 3.0" stroke="#2a0d0c" stroke-width="1.1"/><path d="M617.0 49.0l0.5 4.1" stroke="#4c1715" stroke-width="1.1"/><path d="M611.1 71.9l-0.4 3.0" stroke="#9a5550" stroke-width="1.1"/><path d="M616.6 58.0l-0.5 4.4" stroke="#3a1210" stroke-width="1.1"/><path d="M613.1 49.8l0.4 5.0" stroke="#a82d25" stroke-width="1.1"/><path d="M616.3 55.2l0.4 3.6" stroke="#4c1715" stroke-width="1.1"/><path d="M619.2 51.5l0.7 2.3" stroke="#4c1715" stroke-width="1.1"/><path d="M620.4 70.3l0.2 2.9" stroke="#4c1715" stroke-width="1.1"/><path d="M618.1 52.4l0.4 3.7" stroke="#401412" stroke-width="1.1"/><path d="M615.5 63.2l0.3 3.6" stroke="#6a5a5e" stroke-width="1.1"/><path d="M612.5 58.9l0.8 4.5" stroke="#4c1715" stroke-width="1.1"/><path d="M612.5 51.9l-0.2 3.6" stroke="#220a0a" stroke-width="1.1"/><path d="M613.4 49.9l-0.2 3.9" stroke="#220a0a" stroke-width="1.1"/><path d="M611.9 72.1l0.5 2.8" stroke="#2a0d0c" stroke-width="1.1"/><path d="M617.9 63.5l-0.7 3.3" stroke="#a82d25" stroke-width="1.1"/><path d="M615.1 60.9l0.3 3.9" stroke="#3a1210" stroke-width="1.1"/><path d="M610.8 66.9l-0.4 4.0" stroke="#5e4648" stroke-width="1.1"/><path d="M613.0 51.0l-0.4 2.6" stroke="#3a1210" stroke-width="1.1"/><path d="M611.7 72.2l0.1 4.8" stroke="#3a1210" stroke-width="1.1"/><path d="M617.9 46.6l-0.7 5.2" stroke="#220a0a" stroke-width="1.1"/><path d="M618.2 50.1l-0.4 4.3" stroke="#6a5a5e" stroke-width="1.1"/><path d="M613.9 48.4l0.2 2.5" stroke="#a82d25" stroke-width="1.1"/><path d="M614.0 61.3l0.7 2.3" stroke="#2a0d0c" stroke-width="1.1"/><ellipse cx="616.8" cy="42" rx="3" ry="4" fill="#6a2a28"/><ellipse cx="616.9" cy="42.200000000000045" rx="1.9" ry="3" fill="#5f5c60"/><ellipse cx="622.0" cy="47" rx="2.6" ry="3.4" fill="#a82a24"/><path d="M611.0 49.5L609 59.5" stroke="#6b2422" stroke-width="2.4"/><path d="M609 59.5L582.5 71" stroke="#b8241c" stroke-width="1.5" stroke-linecap="round"/><path d="M782.2 82.20000000000005v2.6a12.8 2.6 0 0 0 25.6 0v-2.6z" fill="#a9a9af"/><path d="M786 85.20000000000005h6M796 85.60000000000002h7" stroke="#4a4a4f" stroke-width="1"/><path d="M783.5 84.29999999999995h4M803 84.60000000000002h3" stroke="#e6e6ea" stroke-width="0.9"/><ellipse cx="795" cy="82.20000000000005" rx="12.8" ry="2.3" fill="#6e6e74"/><ellipse cx="794" cy="82.20000000000005" rx="7" ry="1.2" fill="#86868c"/><path d="M793.5 43L799 43L801.5 48L800 55L802 67L804.2 78.5L800 80.5L796 79.5L792 80.5L788.4 78.5L790.8 65L792 55L789 49L791 45Z" fill="#701d1a"/><path d="M793.6 64.5l-0.8 4.7" stroke="#a82d25" stroke-width="1.1"/><path d="M799.2 74.0l0.3 3.2" stroke="#8c241e" stroke-width="1.1"/><path d="M792.1 72.7l-0.3 2.1" stroke="#401412" stroke-width="1.1"/><path d="M792.4 53.5l0.4 4.5" stroke="#b8342b" stroke-width="1.1"/><path d="M790.2 69.2l0.3 4.6" stroke="#6a5a5e" stroke-width="1.1"/><path d="M793.4 72.8l-0.3 2.3" stroke="#401412" stroke-width="1.1"/><path d="M799.3 63.6l0.6 2.7" stroke="#401412" stroke-width="1.1"/><path d="M793.8 49.0l-0.1 4.3" stroke="#b8342b" stroke-width="1.1"/><path d="M798.0 69.0l-0.2 4.8" stroke="#220a0a" stroke-width="1.1"/><path d="M793.5 63.6l-0.4 2.2" stroke="#6a5a5e" stroke-width="1.1"/><path d="M792.0 57.7l0.4 4.4" stroke="#c63e32" stroke-width="1.1"/><path d="M801.8 75.8l-0.4 2.1" stroke="#220a0a" stroke-width="1.1"/><path d="M792.4 47.7l-0.2 2.3" stroke="#401412" stroke-width="1.1"/><path d="M793.0 52.2l0.1 3.6" stroke="#6a5a5e" stroke-width="1.1"/><path d="M801.1 60.8l-0.1 3.7" stroke="#220a0a" stroke-width="1.1"/><path d="M800.2 52.3l-0.7 4.0" stroke="#5e4648" stroke-width="1.1"/><path d="M793.3 50.5l-0.1 4.6" stroke="#a82d25" stroke-width="1.1"/><path d="M797.1 56.7l-0.7 2.2" stroke="#401412" stroke-width="1.1"/><path d="M800.5 57.8l0.5 2.4" stroke="#8c241e" stroke-width="1.1"/><path d="M795.2 54.8l-0.5 4.2" stroke="#9a5550" stroke-width="1.1"/><path d="M796.2 72.5l-0.2 2.7" stroke="#2a0d0c" stroke-width="1.1"/><path d="M800.7 74.1l0.4 4.1" stroke="#2a0d0c" stroke-width="1.1"/><path d="M799.3 48.2l0.2 4.5" stroke="#9a5550" stroke-width="1.1"/><path d="M790.6 65.3l-0.5 4.6" stroke="#2a0d0c" stroke-width="1.1"/><path d="M791.5 60.2l0.4 3.6" stroke="#b8342b" stroke-width="1.1"/><path d="M799.5 46.8l-0.7 3.5" stroke="#9a5550" stroke-width="1.1"/><path d="M797.4 56.4l-0.1 2.3" stroke="#a82d25" stroke-width="1.1"/><path d="M794.3 62.5l0.3 5.0" stroke="#b8342b" stroke-width="1.1"/><path d="M791.5 59.2l-0.1 3.2" stroke="#2a0d0c" stroke-width="1.1"/><path d="M798.5 63.7l0.3 5.3" stroke="#401412" stroke-width="1.1"/><path d="M797.5 59.3l-0.8 2.7" stroke="#5e4648" stroke-width="1.1"/><path d="M795.1 49.9l0.3 4.1" stroke="#2a0d0c" stroke-width="1.1"/><path d="M795.4 48.0l0.3 5.2" stroke="#401412" stroke-width="1.1"/><path d="M794.2 76.6l-0.4 4.0" stroke="#9a5550" stroke-width="1.1"/><path d="M799.8 57.7l-0.7 4.1" stroke="#4c1715" stroke-width="1.1"/><path d="M796.6 55.9l-0.2 3.8" stroke="#3a1210" stroke-width="1.1"/><ellipse cx="796.3" cy="42" rx="3" ry="4" fill="#6a2a28"/><ellipse cx="796.4" cy="42.200000000000045" rx="1.9" ry="3" fill="#5f5c60"/><path d="M792 50L790 48L789.5 39.5" fill="none" stroke="#8a3431" stroke-width="1.4" stroke-linejoin="round"/><path d="M791.2 43v-3.5" stroke="#7a3a38" stroke-width="0.9"/><path d="M790.5 49.5L788.5 60.5" stroke="#6b2422" stroke-width="2.4"/><path d="M788.5 60.5L762.5 70" stroke="#b8241c" stroke-width="1.5" stroke-linecap="round"/><path d="M961.7 82.20000000000005v2.6a12.8 2.6 0 0 0 25.6 0v-2.6z" fill="#a9a9af"/><path d="M965.5 85.20000000000005h6M975.5 85.60000000000002h7" stroke="#4a4a4f" stroke-width="1"/><path d="M963.0 84.29999999999995h4M982.5 84.60000000000002h3" stroke="#e6e6ea" stroke-width="0.9"/><ellipse cx="974.5" cy="82.20000000000005" rx="12.8" ry="2.3" fill="#6e6e74"/><ellipse cx="973.5" cy="82.20000000000005" rx="7" ry="1.2" fill="#86868c"/><path d="M972.0 43L977.5 43L980.0 48L978.5 55L980.5 67L982.7 78.5L978.5 80.5L974.5 79.5L970.5 80.5L966.9 78.5L969.3 65L970.5 55L967.5 49L969.5 45Z" fill="#701d1a"/><path d="M975.3 56.4l-0.3 4.7" stroke="#8c241e" stroke-width="1.1"/><path d="M971.2 48.4l-0.3 2.7" stroke="#5e4648" stroke-width="1.1"/><path d="M975.4 49.2l-0.6 3.2" stroke="#220a0a" stroke-width="1.1"/><path d="M976.7 53.5l0.7 2.6" stroke="#2a0d0c" stroke-width="1.1"/><path d="M971.6 49.9l-0.8 5.3" stroke="#b8342b" stroke-width="1.1"/><path d="M972.2 52.7l0.3 4.3" stroke="#401412" stroke-width="1.1"/><path d="M979.0 58.6l0.6 3.3" stroke="#4c1715" stroke-width="1.1"/><path d="M971.7 69.2l0.6 4.8" stroke="#3a1210" stroke-width="1.1"/><path d="M973.3 53.2l0.4 2.2" stroke="#4c1715" stroke-width="1.1"/><path d="M970.6 56.3l0.2 5.4" stroke="#401412" stroke-width="1.1"/><path d="M973.0 49.2l0.0 2.1" stroke="#401412" stroke-width="1.1"/><path d="M974.1 72.5l0.2 3.6" stroke="#401412" stroke-width="1.1"/><path d="M979.4 77.2l-0.4 3.8" stroke="#9a5550" stroke-width="1.1"/><path d="M976.4 64.0l-0.7 4.0" stroke="#8c241e" stroke-width="1.1"/><path d="M978.2 66.1l0.2 2.4" stroke="#b8342b" stroke-width="1.1"/><path d="M969.5 68.6l-0.6 5.3" stroke="#b8342b" stroke-width="1.1"/><path d="M979.5 66.7l-0.7 4.1" stroke="#8c241e" stroke-width="1.1"/><path d="M975.3 53.0l0.8 5.3" stroke="#6a5a5e" stroke-width="1.1"/><path d="M977.6 77.5l-0.7 2.8" stroke="#3a1210" stroke-width="1.1"/><path d="M977.2 60.5l0.7 5.1" stroke="#b8342b" stroke-width="1.1"/><path d="M973.8 61.9l-0.3 2.1" stroke="#b8342b" stroke-width="1.1"/><path d="M976.9 46.5l0.1 3.4" stroke="#2a0d0c" stroke-width="1.1"/><path d="M970.3 58.3l0.2 2.4" stroke="#b8342b" stroke-width="1.1"/><path d="M971.2 58.0l0.4 4.6" stroke="#a82d25" stroke-width="1.1"/><path d="M975.8 51.1l0.5 5.4" stroke="#220a0a" stroke-width="1.1"/><path d="M973.2 47.5l-0.0 4.1" stroke="#3a1210" stroke-width="1.1"/><path d="M974.6 46.3l-0.3 3.7" stroke="#4c1715" stroke-width="1.1"/><path d="M979.6 76.0l-0.7 5.5" stroke="#6a5a5e" stroke-width="1.1"/><path d="M973.2 56.6l-0.3 4.4" stroke="#c63e32" stroke-width="1.1"/><path d="M971.8 50.2l0.0 4.0" stroke="#5e4648" stroke-width="1.1"/><path d="M976.3 50.9l-0.0 2.6" stroke="#4c1715" stroke-width="1.1"/><path d="M978.2 63.2l0.4 3.5" stroke="#9a5550" stroke-width="1.1"/><path d="M971.6 65.5l0.0 2.4" stroke="#3a1210" stroke-width="1.1"/><path d="M972.3 48.9l-0.7 4.7" stroke="#9a5550" stroke-width="1.1"/><path d="M972.0 76.7l0.3 2.3" stroke="#401412" stroke-width="1.1"/><path d="M968.2 77.1l0.3 4.4" stroke="#5e4648" stroke-width="1.1"/><ellipse cx="974.8" cy="42" rx="3" ry="4" fill="#6a2a28"/><ellipse cx="974.9" cy="42.200000000000045" rx="1.9" ry="3" fill="#5f5c60"/><path d="M970.5 50L967.5 48L967.0 39.5" fill="none" stroke="#8a3431" stroke-width="1.4" stroke-linejoin="round"/><path d="M968.7 43v-3.5" stroke="#7a3a38" stroke-width="0.9"/><path d="M969.0 49.5L968 60.5" stroke="#6b2422" stroke-width="2.4"/><path d="M968 60.5L945.5 69.5" stroke="#b8241c" stroke-width="1.5" stroke-linecap="round"/></g></svg>

<div class="abs" style="left:0;top:597px;width:1024px;height:14px;background:#5a6063;border-top:1px solid #2c3032;border-bottom:1px solid #2c3032;box-sizing:border-box"></div>
<div class="abs" style="left:1px;top:598px;width:13px;height:12px;background:#687073;border-radius:2px"></div>
<div class="abs" style="left:14px;top:598px;width:2px;height:12px;background:#2c3032"></div>
<div class="abs" style="left:5px;top:601px;width:5px;height:5px;background:#f39c12;border:1px solid #3a2a08;box-sizing:border-box"></div>
<div class="abs" style="left:16px;top:598px;width:132px;height:12px;background:#6e777a;border-radius:2px"></div>
<div class="abs" style="left:1007px;top:598px;width:2px;height:12px;background:#2c3032"></div>
<div class="abs" style="left:1009px;top:598px;width:14px;height:12px;background:#687073;border-radius:2px"></div>
<div class="abs" style="left:1014px;top:601px;width:5px;height:5px;background:#f39c12;border:1px solid #3a2a08;box-sizing:border-box"></div>
<div class="abs" style="left:0;top:611px;width:1024px;height:18px;background:#45494b"></div>
<div class="abs" style="left:0;top:628px;width:1024px;height:1px;background:#2a2d2e"></div>

<div id="wborder-l" class="abs"></div>
<div class="abs" style="left:0;top:0;width:1024px;height:1px;background:#3a3a3a"></div>
<div class="abs" style="left:0;top:0;width:1px;height:27px;background:#3a3a3a"></div>
<div class="abs" style="left:1023px;top:0;width:1px;height:27px;background:#3a3a3a"></div>
<div class="abs" style="left:1023px;top:27px;width:1px;height:602px;background:#26292a"></div>
</body></html>
